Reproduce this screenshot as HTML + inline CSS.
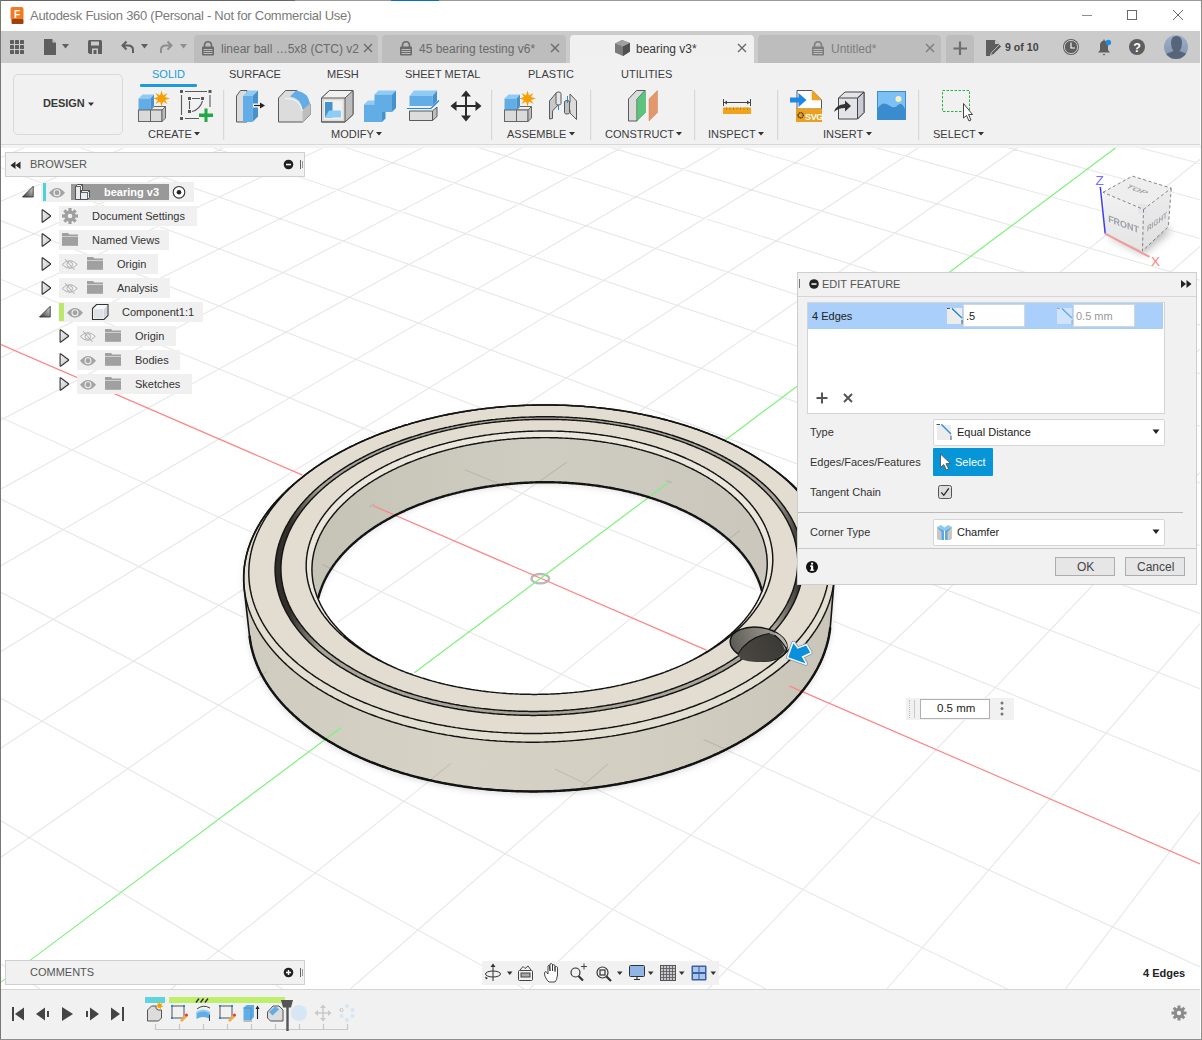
<!DOCTYPE html>
<html><head><meta charset="utf-8"><title>Fusion 360</title>
<style>
*{box-sizing:border-box;margin:0;padding:0}
html,body{width:1202px;height:1040px;overflow:hidden;background:#fff;font-family:"Liberation Sans",sans-serif;color:#3c3c3c}
.a{position:absolute}
svg.a{overflow:visible}
.t{position:absolute;white-space:nowrap;line-height:1}
</style></head><body>
<svg class="a" style="left:0;top:0" width="1202" height="1040" viewBox="0 0 1202 1040">
<defs><clipPath id="vpc"><rect x="1" y="145" width="1199" height="844"/></clipPath>
<linearGradient id="wallg" x1="240" y1="0" x2="836" y2="0" gradientUnits="userSpaceOnUse"><stop offset="0" stop-color="#cfcbbf"/><stop offset="0.35" stop-color="#d6d2c6"/><stop offset="0.7" stop-color="#d2cec2"/><stop offset="1" stop-color="#c9c5b8"/></linearGradient>
<linearGradient id="innerg" x1="318" y1="0" x2="760" y2="0" gradientUnits="userSpaceOnUse"><stop offset="0" stop-color="#c6c3b7"/><stop offset="0.5" stop-color="#cfccc1"/><stop offset="1" stop-color="#cbc7bc"/></linearGradient>
<linearGradient id="grooveg" x1="243" y1="0" x2="834" y2="0" gradientUnits="userSpaceOnUse"><stop offset="0" stop-color="#2a2826"/><stop offset="0.08" stop-color="#33302c"/><stop offset="0.13" stop-color="#a8a49a"/><stop offset="0.9" stop-color="#a8a49a"/><stop offset="0.94" stop-color="#3a3733"/><stop offset="1" stop-color="#2a2826"/></linearGradient>
<filter id="blur3" x="-20%" y="-20%" width="140%" height="140%"><feGaussianBlur stdDeviation="3"/></filter><filter id="blur2" x="-20%" y="-20%" width="140%" height="140%"><feGaussianBlur stdDeviation="2"/></filter>
</defs><g clip-path="url(#vpc)">
<rect x="1" y="145" width="1199" height="844" fill="#fff"/>
<mask id="shm" maskUnits="userSpaceOnUse" x="0" y="0" width="1202" height="1040"><rect x="0" y="0" width="1202" height="1040" fill="#fff"/><path d="M730.1,634.6 731.2,633.5 732.3,632.5 733.4,631.5 734.5,630.5 735.6,629.5 736.6,628.4 737.7,627.4 738.7,626.4 739.7,625.3 740.7,624.3 741.6,623.2 742.6,622.2 743.5,621.1 744.4,620.1 745.3,619.0 746.2,617.9 747.0,616.9 747.9,615.8 748.7,614.7 749.5,613.6 750.3,612.5 751.1,611.4 751.8,610.4 752.5,609.3 753.3,608.2 754.0,607.1 754.6,606.0 755.3,604.9 755.9,603.8 756.6,602.6 757.2,601.5 757.8,600.4 758.3,599.3 758.9,598.2 759.4,597.1 759.9,596.0 760.4,594.8 760.9,593.7 761.4,592.6 761.8,591.5 762.0,591.1 761.9,590.8 761.6,589.7 761.3,588.6 761.0,587.5 760.6,586.4 760.3,585.3 759.9,584.2 759.5,583.1 759.1,582.0 758.7,580.9 758.3,579.8 757.8,578.7 757.3,577.7 756.8,576.6 756.3,575.5 755.8,574.4 755.3,573.4 754.7,572.3 754.2,571.3 753.6,570.2 753.0,569.1 752.4,568.1 751.8,567.1 751.1,566.0 750.5,565.0 749.8,564.0 749.1,562.9 748.5,561.9 747.7,560.9 747.0,559.9 746.3,558.9 745.5,557.9 744.8,556.9 744.0,555.9 743.2,554.9 742.4,553.9 741.6,552.9 740.7,552.0 739.9,551.0 739.0,550.0 738.1,549.1 737.2,548.1 736.3,547.2 735.4,546.2 734.5,545.3 733.6,544.3 732.6,543.4 731.6,542.5 730.7,541.6 729.7,540.7 728.7,539.8 727.6,538.9 726.6,538.0 725.6,537.1 724.5,536.2 723.4,535.3 722.4,534.4 721.3,533.6 720.2,532.7 719.1,531.9 717.9,531.0 716.8,530.2 715.7,529.3 714.5,528.5 713.3,527.7 712.1,526.9 711.0,526.1 709.7,525.3 708.5,524.5 707.3,523.7 706.1,522.9 704.8,522.1 703.6,521.3 702.3,520.6 701.0,519.8 699.7,519.1 698.4,518.3 697.1,517.6 695.8,516.9 694.5,516.1 693.1,515.4 691.8,514.7 690.4,514.0 689.1,513.3 687.7,512.6 686.3,511.9 684.9,511.3 683.5,510.6 682.1,509.9 680.7,509.3 679.3,508.6 677.8,508.0 676.4,507.4 674.9,506.7 673.5,506.1 672.0,505.5 670.5,504.9 669.0,504.3 667.5,503.7 666.0,503.2 664.5,502.6 663.0,502.0 661.5,501.5 660.0,500.9 658.4,500.4 656.9,499.8 655.3,499.3 653.8,498.8 652.2,498.3 650.6,497.8 649.0,497.3 647.5,496.8 645.9,496.3 644.3,495.8 642.7,495.4 641.0,494.9 639.4,494.5 637.8,494.0 636.2,493.6 634.5,493.2 632.9,492.7 631.2,492.3 629.6,491.9 627.9,491.5 626.3,491.2 624.6,490.8 622.9,490.4 621.3,490.0 619.6,489.7 617.9,489.3 616.2,489.0 614.5,488.7 612.8,488.4 611.1,488.0 609.4,487.7 607.7,487.4 606.0,487.1 604.2,486.9 602.5,486.6 600.8,486.3 599.0,486.1 597.3,485.8 595.6,485.6 593.8,485.4 592.1,485.1 590.3,484.9 588.6,484.7 586.8,484.5 585.1,484.3 583.3,484.1 581.5,484.0 579.8,483.8 578.0,483.6 576.2,483.5 574.5,483.4 572.7,483.2 570.9,483.1 569.1,483.0 567.4,482.9 565.6,482.8 563.8,482.7 562.0,482.6 560.2,482.5 558.4,482.5 556.7,482.4 554.9,482.4 553.1,482.3 551.3,482.3 549.5,482.3 547.7,482.2 545.9,482.2 544.1,482.2 542.3,482.3 540.5,482.3 538.8,482.3 537.0,482.3 535.2,482.4 533.4,482.4 531.6,482.5 529.8,482.6 528.0,482.6 526.2,482.7 524.4,482.8 522.6,482.9 520.8,483.0 519.1,483.1 517.3,483.3 515.5,483.4 513.7,483.6 511.9,483.7 510.1,483.9 508.4,484.0 506.6,484.2 504.8,484.4 503.1,484.6 501.3,484.8 499.5,485.0 497.7,485.2 496.0,485.4 494.2,485.7 492.5,485.9 490.7,486.2 489.0,486.4 487.2,486.7 485.5,487.0 483.7,487.3 482.0,487.6 480.2,487.9 478.5,488.2 476.8,488.5 475.1,488.8 473.3,489.1 471.6,489.5 469.9,489.8 468.2,490.2 466.5,490.6 464.8,490.9 463.1,491.3 461.4,491.7 459.7,492.1 458.0,492.5 456.4,492.9 454.7,493.3 453.0,493.8 451.4,494.2 449.7,494.6 448.0,495.1 446.4,495.6 444.8,496.0 443.1,496.5 441.5,497.0 439.9,497.5 438.2,498.0 436.6,498.5 435.0,499.0 433.4,499.5 431.8,500.1 430.2,500.6 428.7,501.1 427.1,501.7 425.5,502.3 424.0,502.8 422.4,503.4 420.9,504.0 419.3,504.6 417.8,505.2 416.3,505.8 414.8,506.4 413.3,507.0 411.8,507.6 410.3,508.3 408.8,508.9 407.3,509.6 405.8,510.2 404.4,510.9 402.9,511.6 401.5,512.2 400.0,512.9 398.6,513.6 397.2,514.3 395.8,515.0 394.4,515.7 393.0,516.5 391.6,517.2 390.3,517.9 388.9,518.7 387.5,519.4 386.2,520.2 384.9,520.9 383.5,521.7 382.2,522.5 380.9,523.3 379.6,524.0 378.3,524.8 377.1,525.6 375.8,526.4 374.6,527.3 373.3,528.1 372.1,528.9 370.9,529.7 369.6,530.6 368.5,531.4 367.3,532.3 366.1,533.1 364.9,534.0 363.8,534.9 362.6,535.7 361.5,536.6 360.4,537.5 359.3,538.4 358.2,539.3 357.1,540.2 356.0,541.1 355.0,542.0 353.9,542.9 352.9,543.9 351.9,544.8 350.8,545.7 349.9,546.7 348.9,547.6 347.9,548.6 346.9,549.5 346.0,550.5 345.1,551.5 344.1,552.4 343.2,553.4 342.3,554.4 341.5,555.4 340.6,556.4 339.7,557.4 338.9,558.4 338.1,559.4 337.3,560.4 336.5,561.4 335.7,562.4 334.9,563.5 334.2,564.5 333.4,565.5 332.7,566.6 332.0,567.6 331.3,568.7 330.6,569.7 329.9,570.8 329.3,571.8 328.7,572.9 328.0,573.9 327.4,575.0 326.8,576.1 326.3,577.2 325.7,578.2 325.1,579.3 324.6,580.4 324.1,581.5 323.6,582.6 323.1,583.7 322.6,584.8 322.2,585.9 321.8,587.0 321.3,588.1 320.9,589.2 320.5,590.3 320.2,591.4 319.8,592.5 319.5,593.7 319.1,594.8 318.8,595.9 318.5,597.0 318.3,598.2 318.1,599.0 318.5,599.9 319.0,601.1 319.5,602.2 320.0,603.3 320.5,604.4 321.1,605.5 321.7,606.6 322.3,607.7 322.9,608.8 323.6,609.9 324.2,611.0 324.9,612.1 325.6,613.2 326.3,614.3 327.0,615.3 327.8,616.4 328.5,617.5 329.3,618.6 330.1,619.6 330.9,620.7 331.8,621.8 332.6,622.8 333.5,623.9 334.4,624.9 335.3,626.0 336.2,627.0 337.2,628.1 338.1,629.1 339.1,630.1 340.1,631.1 341.1,632.2 342.2,633.2 343.2,634.2 344.3,635.2 345.3,636.2 346.4,637.2 347.6,638.2 348.7,639.1 349.8,640.1 351.0,641.1 352.2,642.1 353.4,643.0 354.6,644.0 355.8,644.9 357.1,645.9 358.4,646.8 359.6,647.7 360.9,648.6 362.3,649.6 363.6,650.5 364.9,651.4 366.3,652.3 367.7,653.2 369.1,654.0 370.5,654.9 371.9,655.8 373.3,656.6 374.8,657.5 376.3,658.3 377.8,659.2 379.3,660.0 380.8,660.8 382.3,661.7 383.8,662.5 385.4,663.3 387.0,664.1 388.6,664.8 390.2,665.6 391.8,666.4 393.4,667.1 395.0,667.9 396.7,668.6 398.4,669.4 400.1,670.1 401.8,670.8 403.5,671.5 405.2,672.2 406.9,672.9 408.7,673.6 410.4,674.2 412.2,674.9 414.0,675.6 415.8,676.2 417.6,676.8 419.4,677.5 421.2,678.1 423.1,678.7 424.9,679.3 426.8,679.8 428.6,680.4 430.5,681.0 432.4,681.5 434.3,682.1 436.2,682.6 438.2,683.1 440.1,683.7 442.0,684.2 444.0,684.6 446.0,685.1 447.9,685.6 449.9,686.1 451.9,686.5 453.9,687.0 455.9,687.4 457.9,687.8 459.9,688.2 462.0,688.6 464.0,689.0 466.0,689.4 468.1,689.7 470.1,690.1 472.2,690.4 474.3,690.8 476.4,691.1 478.4,691.4 480.5,691.7 482.6,692.0 484.7,692.2 486.8,692.5 488.9,692.7 491.1,693.0 493.2,693.2 495.3,693.4 497.4,693.6 499.6,693.8 501.7,694.0 503.8,694.2 506.0,694.3 508.1,694.5 510.3,694.6 512.4,694.8 514.6,694.9 516.8,695.0 518.9,695.1 521.1,695.1 523.2,695.2 525.4,695.3 527.6,695.3 529.7,695.3 531.9,695.4 534.1,695.4 536.3,695.4 538.4,695.3 540.6,695.3 542.8,695.3 544.9,695.2 547.1,695.2 549.3,695.1 551.4,695.0 553.6,694.9 555.8,694.8 557.9,694.7 560.1,694.5 562.3,694.4 564.4,694.2 566.6,694.1 568.7,693.9 570.9,693.7 573.0,693.5 575.2,693.3 577.3,693.1 579.4,692.8 581.6,692.6 583.7,692.3 585.8,692.0 587.9,691.8 590.0,691.5 592.2,691.2 594.3,690.8 596.4,690.5 598.5,690.2 600.5,689.8 602.6,689.5 604.7,689.1 606.8,688.7 608.8,688.3 610.9,687.9 612.9,687.5 615.0,687.1 617.0,686.6 619.0,686.2 621.0,685.7 623.1,685.3 625.1,684.8 627.1,684.3 629.0,683.8 631.0,683.3 633.0,682.8 634.9,682.2 636.9,681.7 638.8,681.2 640.8,680.6 642.7,680.0 644.6,679.4 646.5,678.9 648.4,678.3 650.3,677.6 652.1,677.0 654.0,676.4 655.8,675.8 657.7,675.1 659.5,674.5 661.3,673.8 663.1,673.1 664.9,672.4 666.7,671.7 668.5,671.0 670.2,670.3 672.0,669.6 673.7,668.9 675.4,668.1 677.1,667.4 678.8,666.6 680.5,665.9 682.1,665.1 683.8,664.3 685.4,663.5 687.1,662.7 688.7,661.9 690.3,661.1 691.9,660.3 693.4,659.5 695.0,658.6 696.5,657.8 698.0,656.9 699.6,656.1 701.1,655.2 702.5,654.3 704.0,653.5 705.5,652.6 706.9,651.7 708.3,650.8 709.7,649.9 711.1,649.0 712.5,648.1 713.9,647.1 715.2,646.2 716.5,645.3 717.8,644.3 719.1,643.4 720.4,642.4 721.7,641.4 722.9,640.5 724.2,639.5 725.4,638.5 726.6,637.5 727.8,636.5 728.9,635.6Z" fill="#000"/></mask>
<g mask="url(#shm)"><path d="M546.6,405.0 544.3,405.0 542.1,405.0 539.8,405.0 537.5,405.0 535.3,405.1 533.0,405.1 530.7,405.2 528.5,405.3 526.2,405.3 524.0,405.4 521.7,405.5 519.4,405.6 517.2,405.8 514.9,405.9 512.7,406.0 510.4,406.2 508.2,406.3 505.9,406.5 503.7,406.7 501.4,406.9 499.2,407.1 496.9,407.3 494.7,407.5 492.4,407.8 490.2,408.0 488.0,408.2 485.7,408.5 483.5,408.8 481.3,409.1 479.0,409.3 476.8,409.6 474.6,410.0 472.4,410.3 470.2,410.6 468.0,410.9 465.8,411.3 463.6,411.6 461.4,412.0 459.2,412.4 457.0,412.8 454.8,413.2 452.6,413.6 450.5,414.0 448.3,414.4 446.1,414.9 444.0,415.3 441.8,415.8 439.7,416.2 437.5,416.7 435.4,417.2 433.3,417.7 431.1,418.2 429.0,418.7 426.9,419.2 424.8,419.8 422.7,420.3 420.6,420.8 418.5,421.4 416.4,422.0 414.4,422.6 412.3,423.1 410.2,423.7 408.2,424.4 406.1,425.0 404.1,425.6 402.1,426.2 400.0,426.9 398.0,427.5 396.0,428.2 394.0,428.9 392.0,429.6 390.0,430.2 388.1,430.9 386.1,431.7 384.1,432.4 382.2,433.1 380.2,433.8 378.3,434.6 376.4,435.3 374.5,436.1 372.6,436.9 370.7,437.7 368.8,438.4 366.9,439.2 365.0,440.1 363.2,440.9 361.3,441.7 359.5,442.5 357.7,443.4 355.9,444.2 354.1,445.1 352.3,446.0 350.5,446.8 348.7,447.7 346.9,448.6 345.2,449.5 343.5,450.4 341.7,451.4 340.0,452.3 338.3,453.2 336.6,454.2 334.9,455.1 333.3,456.1 331.6,457.0 330.0,458.0 328.4,459.0 326.7,460.0 325.1,461.0 323.5,462.0 322.0,463.0 320.4,464.1 318.9,465.1 317.3,466.1 315.8,467.2 314.3,468.2 312.8,469.3 311.3,470.4 309.8,471.4 308.4,472.5 306.9,473.6 305.5,474.7 304.1,475.8 300.3,478.9 298.8,480.0 297.4,481.2 296.0,482.3 294.7,483.5 293.3,484.6 292.0,485.8 290.6,487.0 289.3,488.2 288.0,489.4 286.7,490.6 285.5,491.8 284.2,493.0 283.0,494.2 281.8,495.4 280.6,496.7 279.4,497.9 278.2,499.2 277.1,500.4 276.0,501.7 274.8,502.9 273.7,504.2 272.7,505.5 271.6,506.8 270.6,508.1 269.5,509.4 268.5,510.7 267.5,512.0 266.6,513.3 265.6,514.6 264.7,515.9 263.8,517.3 262.9,518.6 262.0,519.9 261.1,521.3 260.3,522.6 259.5,524.0 258.7,525.3 257.9,526.7 257.1,528.1 256.4,529.5 255.7,530.8 255.0,532.2 254.3,533.6 253.6,535.0 253.0,536.4 252.4,537.8 251.8,539.2 251.2,540.6 250.6,542.0 250.1,543.4 249.6,544.9 249.1,546.3 248.6,547.7 248.2,549.1 247.7,550.6 247.3,552.0 246.9,553.5 246.6,554.9 246.2,556.4 245.9,557.8 245.6,559.3 245.3,560.7 245.0,562.2 244.8,563.6 244.6,565.1 244.4,566.6 244.2,568.0 244.1,569.5 244.0,571.0 243.9,572.4 243.8,573.9 243.7,575.4 243.7,576.9 243.7,578.3 243.7,579.8 243.7,581.3 243.8,582.8 243.9,584.3 244.0,585.7 244.1,587.2 244.2,588.7 249.5,635.8 249.7,637.3 249.9,638.9 250.1,640.4 250.4,641.9 250.6,643.4 250.9,644.9 251.3,646.4 251.6,647.9 252.0,649.4 252.3,650.9 252.8,652.4 253.2,653.9 253.6,655.4 254.1,656.9 254.6,658.4 255.2,659.9 255.7,661.4 256.3,662.9 256.9,664.4 257.5,665.9 258.2,667.4 258.8,668.9 259.5,670.3 260.2,671.8 261.0,673.3 261.7,674.8 262.5,676.2 263.3,677.7 264.2,679.2 265.0,680.6 265.9,682.1 266.8,683.5 267.8,685.0 268.7,686.4 269.7,687.9 270.7,689.3 271.7,690.8 272.8,692.2 273.9,693.6 275.0,695.0 276.1,696.4 277.2,697.8 278.4,699.2 279.6,700.6 280.8,702.0 282.0,703.4 283.3,704.8 284.6,706.2 285.9,707.5 287.2,708.9 288.6,710.3 289.9,711.6 291.3,712.9 292.8,714.3 294.2,715.6 295.7,716.9 297.2,718.2 298.7,719.6 300.2,720.8 301.8,722.1 303.3,723.4 304.9,724.7 306.6,726.0 308.2,727.2 309.9,728.5 311.6,729.7 313.3,730.9 315.0,732.2 316.8,733.4 318.5,734.6 320.3,735.8 322.1,737.0 324.0,738.2 325.8,739.3 327.7,740.5 329.6,741.6 331.5,742.8 333.5,743.9 335.4,745.0 337.4,746.1 339.4,747.2 341.4,748.3 343.5,749.4 345.5,750.4 347.6,751.5 349.7,752.5 351.8,753.6 353.9,754.6 356.1,755.6 358.2,756.6 360.4,757.6 362.6,758.5 364.9,759.5 367.1,760.4 369.4,761.4 371.6,762.3 373.9,763.2 376.2,764.1 378.5,765.0 380.9,765.9 383.2,766.7 385.6,767.6 388.0,768.4 390.4,769.2 392.8,770.0 395.2,770.8 397.7,771.6 400.1,772.4 402.6,773.1 405.1,773.8 407.6,774.6 410.1,775.3 412.6,776.0 415.2,776.7 417.7,777.3 420.3,778.0 422.9,778.6 425.5,779.2 428.1,779.8 430.7,780.4 433.3,781.0 436.0,781.6 438.6,782.1 441.3,782.7 443.9,783.2 446.6,783.7 449.3,784.2 452.0,784.6 454.7,785.1 457.4,785.5 460.1,786.0 462.8,786.4 465.6,786.8 468.3,787.2 471.1,787.5 473.8,787.9 476.6,788.2 479.4,788.5 482.2,788.8 485.0,789.1 487.7,789.4 490.5,789.6 493.3,789.9 496.2,790.1 499.0,790.3 501.8,790.5 504.6,790.6 507.4,790.8 510.2,790.9 513.1,791.1 515.9,791.2 518.7,791.3 521.6,791.3 524.4,791.4 527.3,791.4 530.1,791.5 532.9,791.5 535.8,791.5 538.6,791.4 541.5,791.4 544.3,791.3 547.2,791.3 550.0,791.2 552.8,791.1 555.7,791.0 558.5,790.8 561.3,790.7 564.2,790.5 567.0,790.3 569.8,790.1 572.7,789.9 575.5,789.7 578.3,789.4 581.1,789.1 583.9,788.9 586.7,788.6 589.5,788.3 592.3,787.9 595.1,787.6 597.9,787.2 600.7,786.8 603.4,786.5 606.2,786.0 608.9,785.6 611.7,785.2 614.4,784.7 617.2,784.3 619.9,783.8 622.6,783.3 625.3,782.8 628.0,782.2 630.7,781.7 633.4,781.1 636.0,780.5 638.7,780.0 641.4,779.4 644.0,778.7 646.6,778.1 649.2,777.4 651.8,776.8 654.4,776.1 657.0,775.4 659.6,774.7 662.2,774.0 664.7,773.3 667.2,772.5 669.8,771.7 672.3,771.0 674.8,770.2 677.2,769.4 679.7,768.6 682.1,767.7 684.6,766.9 687.0,766.0 689.4,765.2 691.8,764.3 694.2,763.4 696.5,762.5 698.9,761.6 701.2,760.6 703.5,759.7 705.8,758.7 708.1,757.8 710.4,756.8 712.6,755.8 714.8,754.8 717.1,753.8 719.3,752.8 721.4,751.7 723.6,750.7 725.7,749.6 727.8,748.5 730.0,747.5 732.0,746.4 734.1,745.3 736.2,744.2 738.2,743.0 740.2,741.9 742.2,740.8 744.1,739.6 746.1,738.4 748.0,737.3 749.9,736.1 751.8,734.9 753.7,733.7 755.6,732.5 757.4,731.3 759.2,730.0 761.0,728.8 762.7,727.5 764.5,726.3 766.2,725.0 767.9,723.8 769.6,722.5 771.3,721.2 772.9,719.9 774.5,718.6 776.1,717.3 777.7,716.0 779.2,714.6 780.8,713.3 782.3,712.0 783.8,710.6 785.2,709.3 786.7,707.9 788.1,706.6 789.5,705.2 790.8,703.8 792.2,702.4 793.5,701.0 794.8,699.6 796.1,698.2 797.4,696.8 798.6,695.4 799.8,694.0 801.0,692.6 802.2,691.2 803.3,689.7 804.4,688.3 805.5,686.9 806.6,685.4 807.7,684.0 808.7,682.5 809.7,681.1 810.7,679.6 811.6,678.2 812.6,676.7 813.5,675.2 814.4,673.8 815.2,672.3 816.1,670.8 816.9,669.3 817.7,667.9 818.4,666.4 819.2,664.9 819.9,663.4 820.6,661.9 821.3,660.4 821.9,658.9 822.6,657.4 823.2,655.9 823.7,654.4 824.3,652.9 824.8,651.4 825.3,649.9 825.8,648.4 826.3,646.9 826.7,645.4 827.2,643.9 827.6,642.4 827.9,640.9 828.3,639.4 828.6,637.9 828.9,636.4 829.2,634.9 829.4,633.4 829.7,631.9 829.9,630.4 830.1,628.9 830.2,627.4 830.4,625.9 834.2,579.0 834.3,577.5 834.4,576.1 834.5,574.6 834.6,573.1 834.6,571.6 834.6,570.2 834.6,568.7 834.5,567.2 834.5,565.8 834.4,564.3 834.3,562.9 834.1,561.4 834.0,560.0 833.8,558.5 833.6,557.1 833.4,555.6 833.2,554.2 832.9,552.7 832.6,551.3 832.3,549.9 832.0,548.4 831.6,547.0 831.3,545.6 830.9,544.2 830.5,542.7 830.0,541.3 829.6,539.9 829.1,538.5 828.6,537.1 828.1,535.7 827.5,534.3 827.0,532.9 826.4,531.6 825.8,530.2 825.2,528.8 824.6,527.4 823.9,526.1 823.2,524.7 822.5,523.4 821.8,522.0 821.1,520.7 820.3,519.3 819.5,518.0 818.7,516.7 817.9,515.3 817.1,514.0 816.2,512.7 815.4,511.4 814.5,510.1 813.6,508.8 812.6,507.5 811.7,506.2 810.7,504.9 809.8,503.7 808.8,502.4 807.7,501.1 806.7,499.9 805.7,498.6 804.6,497.4 803.5,496.2 802.4,494.9 801.3,493.7 800.1,492.5 799.0,491.3 797.8,490.1 796.6,488.9 795.4,487.7 794.2,486.5 792.9,485.3 791.7,484.2 790.4,483.0 789.1,481.9 787.8,480.7 786.5,479.6 785.2,478.4 783.8,477.3 782.5,476.2 781.1,475.1 779.7,474.0 778.3,472.9 776.9,471.8 775.4,470.7 771.6,467.8 770.1,466.8 768.7,465.7 767.2,464.7 765.8,463.7 764.3,462.7 762.8,461.7 761.3,460.6 759.7,459.6 758.2,458.7 756.7,457.7 755.1,456.7 753.5,455.7 751.9,454.8 750.3,453.8 748.7,452.9 747.1,452.0 745.4,451.0 743.8,450.1 742.1,449.2 740.4,448.3 738.8,447.4 737.0,446.5 735.3,445.7 733.6,444.8 731.9,443.9 730.1,443.1 728.4,442.3 726.6,441.4 724.8,440.6 723.0,439.8 721.2,439.0 719.4,438.2 717.6,437.4 715.8,436.6 713.9,435.9 712.1,435.1 710.2,434.4 708.3,433.6 706.4,432.9 704.6,432.2 702.7,431.4 700.7,430.7 698.8,430.0 696.9,429.3 695.0,428.7 693.0,428.0 691.0,427.3 689.1,426.7 687.1,426.0 685.1,425.4 683.1,424.8 681.1,424.2 679.1,423.6 677.1,423.0 675.1,422.4 673.1,421.8 671.0,421.2 669.0,420.7 666.9,420.1 664.9,419.6 662.8,419.1 660.7,418.6 658.7,418.0 656.6,417.5 654.5,417.1 652.4,416.6 650.3,416.1 648.2,415.6 646.1,415.2 643.9,414.7 641.8,414.3 639.7,413.9 637.5,413.5 635.4,413.1 633.2,412.7 631.1,412.3 628.9,411.9 626.8,411.5 624.6,411.2 622.4,410.8 620.2,410.5 618.1,410.2 615.9,409.9 613.7,409.6 611.5,409.3 609.3,409.0 607.1,408.7 604.9,408.4 602.7,408.2 600.5,407.9 598.2,407.7 596.0,407.5 593.8,407.2 591.6,407.0 589.3,406.8 587.1,406.7 584.9,406.5 582.6,406.3 580.4,406.1 578.1,406.0 575.9,405.9 573.7,405.7 571.4,405.6 569.2,405.5 566.9,405.4 564.6,405.3 562.4,405.2 560.1,405.2 557.9,405.1 555.6,405.1 553.4,405.0 551.1,405.0 548.8,405.0Z" transform="translate(0 2.5)" fill="#000" fill-opacity="0.16" filter="url(#blur3)"/></g>
<path d="M544.3,405.0 542.1,405.0 539.8,405.0 537.5,405.0 535.3,405.1 533.0,405.1 530.7,405.2 528.5,405.3 526.2,405.3 524.0,405.4 521.7,405.5 519.4,405.6 517.2,405.8 514.9,405.9 512.7,406.0 510.4,406.2 508.2,406.3 505.9,406.5 503.7,406.7 501.4,406.9 499.2,407.1 496.9,407.3 494.7,407.5 492.4,407.8 490.2,408.0 488.0,408.2 485.7,408.5 483.5,408.8 481.3,409.1 479.0,409.3 476.8,409.6 474.6,410.0 472.4,410.3 470.2,410.6 468.0,410.9 465.8,411.3 463.6,411.6 461.4,412.0 459.2,412.4 457.0,412.8 454.8,413.2 452.6,413.6 450.5,414.0 448.3,414.4 446.1,414.9 444.0,415.3 441.8,415.8 439.7,416.2 437.5,416.7 435.4,417.2 433.3,417.7 431.1,418.2 429.0,418.7 426.9,419.2 424.8,419.8 422.7,420.3 420.6,420.8 418.5,421.4 416.4,422.0 414.4,422.6 412.3,423.1 410.2,423.7 408.2,424.4 406.1,425.0 404.1,425.6 402.1,426.2 400.0,426.9 398.0,427.5 396.0,428.2 394.0,428.9 392.0,429.6 390.0,430.2 388.1,430.9 386.1,431.7 384.1,432.4 382.2,433.1 380.2,433.8 378.3,434.6 376.4,435.3 374.5,436.1 372.6,436.9 370.7,437.7 368.8,438.4 366.9,439.2 365.0,440.1 363.2,440.9 361.3,441.7 359.5,442.5 357.7,443.4 355.9,444.2 354.1,445.1 352.3,446.0 350.5,446.8 348.7,447.7 346.9,448.6 345.2,449.5 343.5,450.4 341.7,451.4 340.0,452.3 338.3,453.2 336.6,454.2 334.9,455.1 333.3,456.1 331.6,457.0 330.0,458.0 328.4,459.0 326.7,460.0 325.1,461.0 323.5,462.0 322.0,463.0 320.4,464.1 318.9,465.1 317.3,466.1 315.8,467.2 314.3,468.2 312.8,469.3 311.3,470.4 309.8,471.4 308.4,472.5 306.9,473.6 305.5,474.7 304.1,475.8 300.3,478.9 298.8,480.0 297.4,481.2 296.0,482.3 294.7,483.5 293.3,484.6 292.0,485.8 290.6,487.0 289.3,488.2 288.0,489.4 286.7,490.6 285.5,491.8 284.2,493.0 283.0,494.2 281.8,495.4 280.6,496.7 279.4,497.9 278.2,499.2 277.1,500.4 276.0,501.7 274.8,502.9 273.7,504.2 272.7,505.5 271.6,506.8 270.6,508.1 269.5,509.4 268.5,510.7 267.5,512.0 266.6,513.3 265.6,514.6 264.7,515.9 263.8,517.3 262.9,518.6 262.0,519.9 261.1,521.3 260.3,522.6 259.5,524.0 258.7,525.3 257.9,526.7 257.1,528.1 256.4,529.5 255.7,530.8 255.0,532.2 254.3,533.6 253.6,535.0 253.0,536.4 252.4,537.8 251.8,539.2 251.2,540.6 250.6,542.0 250.1,543.4 249.6,544.9 249.1,546.3 248.6,547.7 248.2,549.1 247.7,550.6 247.3,552.0 246.9,553.5 246.6,554.9 246.2,556.4 245.9,557.8 245.6,559.3 245.3,560.7 245.0,562.2 244.8,563.6 244.6,565.1 244.4,566.6 244.2,568.0 244.1,569.5 244.0,571.0 243.9,572.4 243.8,573.9 243.7,575.4 243.7,576.9 243.7,578.3 243.7,579.8 243.7,581.3 243.8,582.8 243.9,584.3 244.0,585.7 244.1,587.2 244.2,588.7 249.5,635.8 249.7,637.3 249.9,638.9 250.1,640.4 250.4,641.9 250.6,643.4 250.9,644.9 251.3,646.4 251.6,647.9 252.0,649.4 252.3,650.9 252.8,652.4 253.2,653.9 253.6,655.4 254.1,656.9 254.6,658.4 255.2,659.9 255.7,661.4 256.3,662.9 256.9,664.4 257.5,665.9 258.2,667.4 258.8,668.9 259.5,670.3 260.2,671.8 261.0,673.3 261.7,674.8 262.5,676.2 263.3,677.7 264.2,679.2 265.0,680.6 265.9,682.1 266.8,683.5 267.8,685.0 268.7,686.4 269.7,687.9 270.7,689.3 271.7,690.8 272.8,692.2 273.9,693.6 275.0,695.0 276.1,696.4 277.2,697.8 278.4,699.2 279.6,700.6 280.8,702.0 282.0,703.4 283.3,704.8 284.6,706.2 285.9,707.5 287.2,708.9 288.6,710.3 289.9,711.6 291.3,712.9 292.8,714.3 294.2,715.6 295.7,716.9 297.2,718.2 298.7,719.6 300.2,720.8 301.8,722.1 303.3,723.4 304.9,724.7 306.6,726.0 308.2,727.2 309.9,728.5 311.6,729.7 313.3,730.9 315.0,732.2 316.8,733.4 318.5,734.6 320.3,735.8 322.1,737.0 324.0,738.2 325.8,739.3 327.7,740.5 329.6,741.6 331.5,742.8 333.5,743.9 335.4,745.0 337.4,746.1 339.4,747.2 341.4,748.3 343.5,749.4 345.5,750.4 347.6,751.5 349.7,752.5 351.8,753.6 353.9,754.6 356.1,755.6 358.2,756.6 360.4,757.6 362.6,758.5 364.9,759.5 367.1,760.4 369.4,761.4 371.6,762.3 373.9,763.2 376.2,764.1 378.5,765.0 380.9,765.9 383.2,766.7 385.6,767.6 388.0,768.4 390.4,769.2 392.8,770.0 395.2,770.8 397.7,771.6 400.1,772.4 402.6,773.1 405.1,773.8 407.6,774.6 410.1,775.3 412.6,776.0 415.2,776.7 417.7,777.3 420.3,778.0 422.9,778.6 425.5,779.2 428.1,779.8 430.7,780.4 433.3,781.0 436.0,781.6 438.6,782.1 441.3,782.7 443.9,783.2 446.6,783.7 449.3,784.2 452.0,784.6 454.7,785.1 457.4,785.5 460.1,786.0 462.8,786.4 465.6,786.8 468.3,787.2 471.1,787.5 473.8,787.9 476.6,788.2 479.4,788.5 482.2,788.8 485.0,789.1 487.7,789.4 490.5,789.6 493.3,789.9 496.2,790.1 499.0,790.3 501.8,790.5 504.6,790.6 507.4,790.8 510.2,790.9 513.1,791.1 515.9,791.2 518.7,791.3 521.6,791.3 524.4,791.4 527.3,791.4 530.1,791.5 532.9,791.5 535.8,791.5 538.6,791.4 541.5,791.4 544.3,791.3 547.2,791.3 550.0,791.2 552.8,791.1 555.7,791.0 558.5,790.8 561.3,790.7 564.2,790.5 567.0,790.3 569.8,790.1 572.7,789.9 575.5,789.7 578.3,789.4 581.1,789.1 583.9,788.9 586.7,788.6 589.5,788.3 592.3,787.9 595.1,787.6 597.9,787.2 600.7,786.8 603.4,786.5 606.2,786.0 608.9,785.6 611.7,785.2 614.4,784.7 617.2,784.3 619.9,783.8 622.6,783.3 625.3,782.8 628.0,782.2 630.7,781.7 633.4,781.1 636.0,780.5 638.7,780.0 641.4,779.4 644.0,778.7 646.6,778.1 649.2,777.4 651.8,776.8 654.4,776.1 657.0,775.4 659.6,774.7 662.2,774.0 664.7,773.3 667.2,772.5 669.8,771.7 672.3,771.0 674.8,770.2 677.2,769.4 679.7,768.6 682.1,767.7 684.6,766.9 687.0,766.0 689.4,765.2 691.8,764.3 694.2,763.4 696.5,762.5 698.9,761.6 701.2,760.6 703.5,759.7 705.8,758.7 708.1,757.8 710.4,756.8 712.6,755.8 714.8,754.8 717.1,753.8 719.3,752.8 721.4,751.7 723.6,750.7 725.7,749.6 727.8,748.5 730.0,747.5 732.0,746.4 734.1,745.3 736.2,744.2 738.2,743.0 740.2,741.9 742.2,740.8 744.1,739.6 746.1,738.4 748.0,737.3 749.9,736.1 751.8,734.9 753.7,733.7 755.6,732.5 757.4,731.3 759.2,730.0 761.0,728.8 762.7,727.5 764.5,726.3 766.2,725.0 767.9,723.8 769.6,722.5 771.3,721.2 772.9,719.9 774.5,718.6 776.1,717.3 777.7,716.0 779.2,714.6 780.8,713.3 782.3,712.0 783.8,710.6 785.2,709.3 786.7,707.9 788.1,706.6 789.5,705.2 790.8,703.8 792.2,702.4 793.5,701.0 794.8,699.6 796.1,698.2 797.4,696.8 798.6,695.4 799.8,694.0 801.0,692.6 802.2,691.2 803.3,689.7 804.4,688.3 805.5,686.9 806.6,685.4 807.7,684.0 808.7,682.5 809.7,681.1 810.7,679.6 811.6,678.2 812.6,676.7 813.5,675.2 814.4,673.8 815.2,672.3 816.1,670.8 816.9,669.3 817.7,667.9 818.4,666.4 819.2,664.9 819.9,663.4 820.6,661.9 821.3,660.4 821.9,658.9 822.6,657.4 823.2,655.9 823.7,654.4 824.3,652.9 824.8,651.4 825.3,649.9 825.8,648.4 826.3,646.9 826.7,645.4 827.2,643.9 827.6,642.4 827.9,640.9 828.3,639.4 828.6,637.9 828.9,636.4 829.2,634.9 829.4,633.4 829.7,631.9 829.9,630.4 830.1,628.9 830.2,627.4 830.4,625.9 834.2,579.0 834.3,577.5 834.4,576.1 834.5,574.6 834.6,573.1 834.6,571.6 834.6,570.2 834.6,568.7 834.5,567.2 834.5,565.8 834.4,564.3 834.3,562.9 834.1,561.4 834.0,560.0 833.8,558.5 833.6,557.1 833.4,555.6 833.2,554.2 832.9,552.7 832.6,551.3 832.3,549.9 832.0,548.4 831.6,547.0 831.3,545.6 830.9,544.2 830.5,542.7 830.0,541.3 829.6,539.9 829.1,538.5 828.6,537.1 828.1,535.7 827.5,534.3 827.0,532.9 826.4,531.6 825.8,530.2 825.2,528.8 824.6,527.4 823.9,526.1 823.2,524.7 822.5,523.4 821.8,522.0 821.1,520.7 820.3,519.3 819.5,518.0 818.7,516.7 817.9,515.3 817.1,514.0 816.2,512.7 815.4,511.4 814.5,510.1 813.6,508.8 812.6,507.5 811.7,506.2 810.7,504.9 809.8,503.7 808.8,502.4 807.7,501.1 806.7,499.9 805.7,498.6 804.6,497.4 803.5,496.2 802.4,494.9 801.3,493.7 800.1,492.5 799.0,491.3 797.8,490.1 796.6,488.9 795.4,487.7 794.2,486.5 792.9,485.3 791.7,484.2 790.4,483.0 789.1,481.9 787.8,480.7 786.5,479.6 785.2,478.4 783.8,477.3 782.5,476.2 781.1,475.1 779.7,474.0 778.3,472.9 776.9,471.8 775.4,470.7 771.6,467.8 770.1,466.8 768.7,465.7 767.2,464.7 765.8,463.7 764.3,462.7 762.8,461.7 761.3,460.6 759.7,459.6 758.2,458.7 756.7,457.7 755.1,456.7 753.5,455.7 751.9,454.8 750.3,453.8 748.7,452.9 747.1,452.0 745.4,451.0 743.8,450.1 742.1,449.2 740.4,448.3 738.8,447.4 737.0,446.5 735.3,445.7 733.6,444.8 731.9,443.9 730.1,443.1 728.4,442.3 726.6,441.4 724.8,440.6 723.0,439.8 721.2,439.0 719.4,438.2 717.6,437.4 715.8,436.6 713.9,435.9 712.1,435.1 710.2,434.4 708.3,433.6 706.4,432.9 704.6,432.2 702.7,431.4 700.7,430.7 698.8,430.0 696.9,429.3 695.0,428.7 693.0,428.0 691.0,427.3 689.1,426.7 687.1,426.0 685.1,425.4 683.1,424.8 681.1,424.2 679.1,423.6 677.1,423.0 675.1,422.4 673.1,421.8 671.0,421.2 669.0,420.7 666.9,420.1 664.9,419.6 662.8,419.1 660.7,418.6 658.7,418.0 656.6,417.5 654.5,417.1 652.4,416.6 650.3,416.1 648.2,415.6 646.1,415.2 643.9,414.7 641.8,414.3 639.7,413.9 637.5,413.5 635.4,413.1 633.2,412.7 631.1,412.3 628.9,411.9 626.8,411.5 624.6,411.2 622.4,410.8 620.2,410.5 618.1,410.2 615.9,409.9 613.7,409.6 611.5,409.3 609.3,409.0 607.1,408.7 604.9,408.4 602.7,408.2 600.5,407.9 598.2,407.7 596.0,407.5 593.8,407.2 591.6,407.0 589.3,406.8 587.1,406.7 584.9,406.5 582.6,406.3 580.4,406.1 578.1,406.0 575.9,405.9 573.7,405.7 571.4,405.6 569.2,405.5 566.9,405.4 564.6,405.3 562.4,405.2 560.1,405.2 557.9,405.1 555.6,405.1 553.4,405.0 551.1,405.0 548.8,405.0 546.6,405.0ZM728.9,635.6 727.8,636.5 726.6,637.5 725.4,638.5 724.2,639.5 722.9,640.5 721.7,641.4 720.4,642.4 719.1,643.4 717.8,644.3 716.5,645.3 715.2,646.2 713.9,647.1 712.5,648.1 711.1,649.0 709.7,649.9 708.3,650.8 706.9,651.7 705.5,652.6 704.0,653.5 702.5,654.3 701.1,655.2 699.6,656.1 698.0,656.9 696.5,657.8 695.0,658.6 693.4,659.5 691.9,660.3 690.3,661.1 688.7,661.9 687.1,662.7 685.4,663.5 683.8,664.3 682.1,665.1 680.5,665.9 678.8,666.6 677.1,667.4 675.4,668.1 673.7,668.9 672.0,669.6 670.2,670.3 668.5,671.0 666.7,671.7 664.9,672.4 663.1,673.1 661.3,673.8 659.5,674.5 657.7,675.1 655.8,675.8 654.0,676.4 652.1,677.0 650.3,677.6 648.4,678.3 646.5,678.9 644.6,679.4 642.7,680.0 640.8,680.6 638.8,681.2 636.9,681.7 634.9,682.2 633.0,682.8 631.0,683.3 629.0,683.8 627.1,684.3 625.1,684.8 623.1,685.3 621.0,685.7 619.0,686.2 617.0,686.6 615.0,687.1 612.9,687.5 610.9,687.9 608.8,688.3 606.8,688.7 604.7,689.1 602.6,689.5 600.5,689.8 598.5,690.2 596.4,690.5 594.3,690.8 592.2,691.2 590.0,691.5 587.9,691.8 585.8,692.0 583.7,692.3 581.6,692.6 579.4,692.8 577.3,693.1 575.2,693.3 573.0,693.5 570.9,693.7 568.7,693.9 566.6,694.1 564.4,694.2 562.3,694.4 560.1,694.5 557.9,694.7 555.8,694.8 553.6,694.9 551.4,695.0 549.3,695.1 547.1,695.2 544.9,695.2 542.8,695.3 540.6,695.3 538.4,695.3 536.3,695.4 534.1,695.4 531.9,695.4 529.7,695.3 527.6,695.3 525.4,695.3 523.2,695.2 521.1,695.1 518.9,695.1 516.8,695.0 514.6,694.9 512.4,694.8 510.3,694.6 508.1,694.5 506.0,694.3 503.8,694.2 501.7,694.0 499.6,693.8 497.4,693.6 495.3,693.4 493.2,693.2 491.1,693.0 488.9,692.7 486.8,692.5 484.7,692.2 482.6,692.0 480.5,691.7 478.4,691.4 476.4,691.1 474.3,690.8 472.2,690.4 470.1,690.1 468.1,689.7 466.0,689.4 464.0,689.0 462.0,688.6 459.9,688.2 457.9,687.8 455.9,687.4 453.9,687.0 451.9,686.5 449.9,686.1 447.9,685.6 446.0,685.1 444.0,684.6 442.0,684.2 440.1,683.7 438.2,683.1 436.2,682.6 434.3,682.1 432.4,681.5 430.5,681.0 428.6,680.4 426.8,679.8 424.9,679.3 423.1,678.7 421.2,678.1 419.4,677.5 417.6,676.8 415.8,676.2 414.0,675.6 412.2,674.9 410.4,674.2 408.7,673.6 406.9,672.9 405.2,672.2 403.5,671.5 401.8,670.8 400.1,670.1 398.4,669.4 396.7,668.6 395.0,667.9 393.4,667.1 391.8,666.4 390.2,665.6 388.6,664.8 387.0,664.1 385.4,663.3 383.8,662.5 382.3,661.7 380.8,660.8 379.3,660.0 377.8,659.2 376.3,658.3 374.8,657.5 373.3,656.6 371.9,655.8 370.5,654.9 369.1,654.0 367.7,653.2 366.3,652.3 364.9,651.4 363.6,650.5 362.3,649.6 360.9,648.6 359.6,647.7 358.4,646.8 357.1,645.9 355.8,644.9 354.6,644.0 353.4,643.0 352.2,642.1 351.0,641.1 349.8,640.1 348.7,639.1 347.6,638.2 346.4,637.2 345.3,636.2 344.3,635.2 343.2,634.2 342.2,633.2 341.1,632.2 340.1,631.1 339.1,630.1 338.1,629.1 337.2,628.1 336.2,627.0 335.3,626.0 334.4,624.9 333.5,623.9 332.6,622.8 331.8,621.8 330.9,620.7 330.1,619.6 329.3,618.6 328.5,617.5 327.8,616.4 327.0,615.3 326.3,614.3 325.6,613.2 324.9,612.1 324.2,611.0 323.6,609.9 322.9,608.8 322.3,607.7 321.7,606.6 321.1,605.5 320.5,604.4 320.0,603.3 319.5,602.2 319.0,601.1 318.5,599.9 318.1,599.0 318.3,598.2 318.5,597.0 318.8,595.9 319.1,594.8 319.5,593.7 319.8,592.5 320.2,591.4 320.5,590.3 320.9,589.2 321.3,588.1 321.8,587.0 322.2,585.9 322.6,584.8 323.1,583.7 323.6,582.6 324.1,581.5 324.6,580.4 325.1,579.3 325.7,578.2 326.3,577.2 326.8,576.1 327.4,575.0 328.0,573.9 328.7,572.9 329.3,571.8 329.9,570.8 330.6,569.7 331.3,568.7 332.0,567.6 332.7,566.6 333.4,565.5 334.2,564.5 334.9,563.5 335.7,562.4 336.5,561.4 337.3,560.4 338.1,559.4 338.9,558.4 339.7,557.4 340.6,556.4 341.5,555.4 342.3,554.4 343.2,553.4 344.1,552.4 345.1,551.5 346.0,550.5 346.9,549.5 347.9,548.6 348.9,547.6 349.9,546.7 350.8,545.7 351.9,544.8 352.9,543.9 353.9,542.9 355.0,542.0 356.0,541.1 357.1,540.2 358.2,539.3 359.3,538.4 360.4,537.5 361.5,536.6 362.6,535.7 363.8,534.9 364.9,534.0 366.1,533.1 367.3,532.3 368.5,531.4 369.6,530.6 370.9,529.7 372.1,528.9 373.3,528.1 374.6,527.3 375.8,526.4 377.1,525.6 378.3,524.8 379.6,524.0 380.9,523.3 382.2,522.5 383.5,521.7 384.9,520.9 386.2,520.2 387.5,519.4 388.9,518.7 390.3,517.9 391.6,517.2 393.0,516.5 394.4,515.7 395.8,515.0 397.2,514.3 398.6,513.6 400.0,512.9 401.5,512.2 402.9,511.6 404.4,510.9 405.8,510.2 407.3,509.6 408.8,508.9 410.3,508.3 411.8,507.6 413.3,507.0 414.8,506.4 416.3,505.8 417.8,505.2 419.3,504.6 420.9,504.0 422.4,503.4 424.0,502.8 425.5,502.3 427.1,501.7 428.7,501.1 430.2,500.6 431.8,500.1 433.4,499.5 435.0,499.0 436.6,498.5 438.2,498.0 439.9,497.5 441.5,497.0 443.1,496.5 444.8,496.0 446.4,495.6 448.0,495.1 449.7,494.6 451.4,494.2 453.0,493.8 454.7,493.3 456.4,492.9 458.0,492.5 459.7,492.1 461.4,491.7 463.1,491.3 464.8,490.9 466.5,490.6 468.2,490.2 469.9,489.8 471.6,489.5 473.3,489.1 475.1,488.8 476.8,488.5 478.5,488.2 480.2,487.9 482.0,487.6 483.7,487.3 485.5,487.0 487.2,486.7 489.0,486.4 490.7,486.2 492.5,485.9 494.2,485.7 496.0,485.4 497.7,485.2 499.5,485.0 501.3,484.8 503.1,484.6 504.8,484.4 506.6,484.2 508.4,484.0 510.1,483.9 511.9,483.7 513.7,483.6 515.5,483.4 517.3,483.3 519.1,483.1 520.8,483.0 522.6,482.9 524.4,482.8 526.2,482.7 528.0,482.6 529.8,482.6 531.6,482.5 533.4,482.4 535.2,482.4 537.0,482.3 538.8,482.3 540.5,482.3 542.3,482.3 544.1,482.2 545.9,482.2 547.7,482.2 549.5,482.3 551.3,482.3 553.1,482.3 554.9,482.4 556.7,482.4 558.4,482.5 560.2,482.5 562.0,482.6 563.8,482.7 565.6,482.8 567.4,482.9 569.1,483.0 570.9,483.1 572.7,483.2 574.5,483.4 576.2,483.5 578.0,483.6 579.8,483.8 581.5,484.0 583.3,484.1 585.1,484.3 586.8,484.5 588.6,484.7 590.3,484.9 592.1,485.1 593.8,485.4 595.6,485.6 597.3,485.8 599.0,486.1 600.8,486.3 602.5,486.6 604.2,486.9 606.0,487.1 607.7,487.4 609.4,487.7 611.1,488.0 612.8,488.4 614.5,488.7 616.2,489.0 617.9,489.3 619.6,489.7 621.3,490.0 622.9,490.4 624.6,490.8 626.3,491.2 627.9,491.5 629.6,491.9 631.2,492.3 632.9,492.7 634.5,493.2 636.2,493.6 637.8,494.0 639.4,494.5 641.0,494.9 642.7,495.4 644.3,495.8 645.9,496.3 647.5,496.8 649.0,497.3 650.6,497.8 652.2,498.3 653.8,498.8 655.3,499.3 656.9,499.8 658.4,500.4 660.0,500.9 661.5,501.5 663.0,502.0 664.5,502.6 666.0,503.2 667.5,503.7 669.0,504.3 670.5,504.9 672.0,505.5 673.5,506.1 674.9,506.7 676.4,507.4 677.8,508.0 679.3,508.6 680.7,509.3 682.1,509.9 683.5,510.6 684.9,511.3 686.3,511.9 687.7,512.6 689.1,513.3 690.4,514.0 691.8,514.7 693.1,515.4 694.5,516.1 695.8,516.9 697.1,517.6 698.4,518.3 699.7,519.1 701.0,519.8 702.3,520.6 703.6,521.3 704.8,522.1 706.1,522.9 707.3,523.7 708.5,524.5 709.7,525.3 711.0,526.1 712.1,526.9 713.3,527.7 714.5,528.5 715.7,529.3 716.8,530.2 717.9,531.0 719.1,531.9 720.2,532.7 721.3,533.6 722.4,534.4 723.4,535.3 724.5,536.2 725.6,537.1 726.6,538.0 727.6,538.9 728.7,539.8 729.7,540.7 730.7,541.6 731.6,542.5 732.6,543.4 733.6,544.3 734.5,545.3 735.4,546.2 736.3,547.2 737.2,548.1 738.1,549.1 739.0,550.0 739.9,551.0 740.7,552.0 741.6,552.9 742.4,553.9 743.2,554.9 744.0,555.9 744.8,556.9 745.5,557.9 746.3,558.9 747.0,559.9 747.7,560.9 748.5,561.9 749.1,562.9 749.8,564.0 750.5,565.0 751.1,566.0 751.8,567.1 752.4,568.1 753.0,569.1 753.6,570.2 754.2,571.3 754.7,572.3 755.3,573.4 755.8,574.4 756.3,575.5 756.8,576.6 757.3,577.7 757.8,578.7 758.3,579.8 758.7,580.9 759.1,582.0 759.5,583.1 759.9,584.2 760.3,585.3 760.6,586.4 761.0,587.5 761.3,588.6 761.6,589.7 761.9,590.8 762.0,591.1 761.8,591.5 761.4,592.6 760.9,593.7 760.4,594.8 759.9,596.0 759.4,597.1 758.9,598.2 758.3,599.3 757.8,600.4 757.2,601.5 756.6,602.6 755.9,603.8 755.3,604.9 754.6,606.0 754.0,607.1 753.3,608.2 752.5,609.3 751.8,610.4 751.1,611.4 750.3,612.5 749.5,613.6 748.7,614.7 747.9,615.8 747.0,616.9 746.2,617.9 745.3,619.0 744.4,620.1 743.5,621.1 742.6,622.2 741.6,623.2 740.7,624.3 739.7,625.3 738.7,626.4 737.7,627.4 736.6,628.4 735.6,629.5 734.5,630.5 733.4,631.5 732.3,632.5 731.2,633.5 730.1,634.6Z" fill="url(#wallg)"/>
<path d="M771.6,467.8 770.1,466.8 768.7,465.7 767.2,464.7 765.8,463.7 764.3,462.7 762.8,461.7 761.3,460.6 759.7,459.6 758.2,458.7 756.7,457.7 755.1,456.7 753.5,455.7 751.9,454.8 750.3,453.8 748.7,452.9 747.1,452.0 745.4,451.0 743.8,450.1 742.1,449.2 740.4,448.3 738.8,447.4 737.0,446.5 735.3,445.7 733.6,444.8 731.9,443.9 730.1,443.1 728.4,442.3 726.6,441.4 724.8,440.6 723.0,439.8 721.2,439.0 719.4,438.2 717.6,437.4 715.8,436.6 713.9,435.9 712.1,435.1 710.2,434.4 708.3,433.6 706.4,432.9 704.6,432.2 702.7,431.4 700.7,430.7 698.8,430.0 696.9,429.3 695.0,428.7 693.0,428.0 691.0,427.3 689.1,426.7 687.1,426.0 685.1,425.4 683.1,424.8 681.1,424.2 679.1,423.6 677.1,423.0 675.1,422.4 673.1,421.8 671.0,421.2 669.0,420.7 666.9,420.1 664.9,419.6 662.8,419.1 660.7,418.6 658.7,418.0 656.6,417.5 654.5,417.1 652.4,416.6 650.3,416.1 648.2,415.6 646.1,415.2 643.9,414.7 641.8,414.3 639.7,413.9 637.5,413.5 635.4,413.1 633.2,412.7 631.1,412.3 628.9,411.9 626.8,411.5 624.6,411.2 622.4,410.8 620.2,410.5 618.1,410.2 615.9,409.9 613.7,409.6 611.5,409.3 609.3,409.0 607.1,408.7 604.9,408.4 602.7,408.2 600.5,407.9 598.2,407.7 596.0,407.5 593.8,407.2 591.6,407.0 589.3,406.8 587.1,406.7 584.9,406.5 582.6,406.3 580.4,406.1 578.1,406.0 575.9,405.9 573.7,405.7 571.4,405.6 569.2,405.5 566.9,405.4 564.6,405.3 562.4,405.2 560.1,405.2 557.9,405.1 555.6,405.1 553.4,405.0 551.1,405.0 548.8,405.0 546.6,405.0 544.3,405.0 542.1,405.0 539.8,405.0 537.5,405.0 535.3,405.1 533.0,405.1 530.7,405.2 528.5,405.3 526.2,405.3 524.0,405.4 521.7,405.5 519.4,405.6 517.2,405.8 514.9,405.9 512.7,406.0 510.4,406.2 508.2,406.3 505.9,406.5 503.7,406.7 501.4,406.9 499.2,407.1 496.9,407.3 494.7,407.5 492.4,407.8 490.2,408.0 488.0,408.2 485.7,408.5 483.5,408.8 481.3,409.1 479.0,409.3 476.8,409.6 474.6,410.0 472.4,410.3 470.2,410.6 468.0,410.9 465.8,411.3 463.6,411.6 461.4,412.0 459.2,412.4 457.0,412.8 454.8,413.2 452.6,413.6 450.5,414.0 448.3,414.4 446.1,414.9 444.0,415.3 441.8,415.8 439.7,416.2 437.5,416.7 435.4,417.2 433.3,417.7 431.1,418.2 429.0,418.7 426.9,419.2 424.8,419.8 422.7,420.3 420.6,420.8 418.5,421.4 416.4,422.0 414.4,422.6 412.3,423.1 410.2,423.7 408.2,424.4 406.1,425.0 404.1,425.6 402.1,426.2 400.0,426.9 398.0,427.5 396.0,428.2 394.0,428.9 392.0,429.6 390.0,430.2 388.1,430.9 386.1,431.7 384.1,432.4 382.2,433.1 380.2,433.8 378.3,434.6 376.4,435.3 374.5,436.1 372.6,436.9 370.7,437.7 368.8,438.4 366.9,439.2 365.0,440.1 363.2,440.9 361.3,441.7 359.5,442.5 357.7,443.4 355.9,444.2 354.1,445.1 352.3,446.0 350.5,446.8 348.7,447.7 346.9,448.6 345.2,449.5 343.5,450.4 341.7,451.4 340.0,452.3 338.3,453.2 336.6,454.2 334.9,455.1 333.3,456.1 331.6,457.0 330.0,458.0 328.4,459.0 326.7,460.0 325.1,461.0 323.5,462.0 322.0,463.0 320.4,464.1 318.9,465.1 317.3,466.1 315.8,467.2 314.3,468.2 312.8,469.3 311.3,470.4 309.8,471.4 308.4,472.5 306.9,473.6 305.5,474.7 304.1,475.8 302.7,477.0 302.3,477.3 301.7,477.8 300.3,478.9 298.8,480.0 297.4,481.2 296.0,482.3 294.7,483.5 293.3,484.6 292.0,485.8 290.6,487.0 289.3,488.2 288.0,489.4 286.7,490.6 285.5,491.8 284.2,493.0 283.0,494.2 281.8,495.4 280.6,496.7 279.4,497.9 278.2,499.2 277.1,500.4 276.0,501.7 274.8,502.9 273.7,504.2 272.7,505.5 271.6,506.8 270.6,508.1 269.5,509.4 268.5,510.7 267.5,512.0 266.6,513.3 265.6,514.6 264.7,515.9 263.8,517.3 262.9,518.6 262.0,519.9 261.1,521.3 260.3,522.6 259.5,524.0 258.7,525.3 257.9,526.7 257.1,528.1 256.4,529.5 255.7,530.8 255.0,532.2 254.3,533.6 253.6,535.0 253.0,536.4 252.4,537.8 251.8,539.2 251.2,540.6 250.6,542.0 250.1,543.4 249.6,544.9 249.1,546.3 248.6,547.7 248.2,549.1 247.7,550.6 247.3,552.0 246.9,553.5 246.6,554.9 246.2,556.4 245.9,557.8 245.6,559.3 245.3,560.7 245.0,562.2 244.8,563.6 244.6,565.1 244.4,566.6 244.2,568.0 244.1,569.5 244.0,571.0 243.9,572.4 243.8,573.9 243.7,575.4 243.7,576.9 243.7,578.3 243.7,579.8 243.7,581.3 243.8,582.8 243.9,584.3 244.0,585.7 244.1,587.2 244.2,588.7 244.4,590.2 244.6,591.7 244.8,593.2 245.1,594.6 245.4,596.1 245.6,597.6 246.0,599.1 246.3,600.6 246.7,602.1 247.1,603.5 247.5,605.0 247.9,606.5 248.4,608.0 248.8,609.5 249.4,610.9 249.9,612.4 250.4,613.9 251.0,615.4 251.6,616.8 252.2,618.3 252.9,619.8 253.6,621.2 254.3,622.7 255.0,624.1 255.8,625.6 256.5,627.0 257.3,628.5 258.1,629.9 259.0,631.4 259.9,632.8 260.8,634.3 261.7,635.7 262.6,637.1 263.6,638.5 264.6,640.0 265.6,641.4 266.6,642.8 267.7,644.2 268.8,645.6 269.9,647.0 271.0,648.4 272.2,649.8 273.4,651.2 274.6,652.5 275.8,653.9 277.0,655.3 278.3,656.6 279.6,658.0 280.9,659.3 282.3,660.7 283.7,662.0 285.1,663.4 286.5,664.7 287.9,666.0 289.4,667.3 290.9,668.6 292.4,669.9 293.9,671.2 295.5,672.5 297.1,673.7 298.7,675.0 300.3,676.3 301.9,677.5 303.6,678.8 305.3,680.0 307.0,681.2 308.7,682.4 310.5,683.6 312.3,684.8 314.1,686.0 315.9,687.2 317.7,688.4 319.6,689.5 321.5,690.7 323.4,691.8 325.3,693.0 327.3,694.1 329.2,695.2 331.2,696.3 333.2,697.4 335.3,698.5 337.3,699.6 339.4,700.6 341.5,701.7 343.6,702.7 345.7,703.7 347.8,704.7 350.0,705.8 352.2,706.7 354.4,707.7 356.6,708.7 358.9,709.7 361.1,710.6 363.4,711.5 365.7,712.5 368.0,713.4 370.3,714.3 372.7,715.2 375.0,716.0 377.4,716.9 379.8,717.7 382.2,718.6 384.6,719.4 387.1,720.2 389.5,721.0 392.0,721.8 394.5,722.6 397.0,723.3 399.5,724.1 402.0,724.8 404.6,725.5 407.1,726.2 409.7,726.9 412.3,727.6 414.9,728.2 417.5,728.9 420.1,729.5 422.7,730.1 425.4,730.7 428.0,731.3 430.7,731.9 433.4,732.4 436.1,733.0 438.8,733.5 441.5,734.0 444.2,734.5 446.9,735.0 449.7,735.4 452.4,735.9 455.2,736.3 458.0,736.8 460.7,737.2 463.5,737.6 466.3,737.9 469.1,738.3 471.9,738.6 474.7,739.0 477.6,739.3 480.4,739.6 483.2,739.9 486.1,740.1 488.9,740.4 491.8,740.6 494.6,740.8 497.5,741.0 500.3,741.2 503.2,741.4 506.1,741.5 509.0,741.7 511.8,741.8 514.7,741.9 517.6,742.0 520.5,742.1 523.4,742.1 526.3,742.2 529.2,742.2 532.0,742.2 534.9,742.2 537.8,742.2 540.7,742.1 543.6,742.1 546.5,742.0 549.4,741.9 552.3,741.8 555.2,741.7 558.1,741.6 560.9,741.4 563.8,741.2 566.7,741.1 569.6,740.9 572.5,740.7 575.3,740.4 578.2,740.2 581.1,739.9 583.9,739.6 586.8,739.3 589.6,739.0 592.4,738.7 595.3,738.4 598.1,738.0 600.9,737.6 603.8,737.3 606.6,736.9 609.4,736.4 612.2,736.0 614.9,735.6 617.7,735.1 620.5,734.6 623.3,734.1 626.0,733.6 628.8,733.1 631.5,732.6 634.2,732.0 636.9,731.4 639.6,730.9 642.3,730.3 645.0,729.6 647.7,729.0 650.4,728.4 653.0,727.7 655.6,727.1 658.3,726.4 660.9,725.7 663.5,725.0 666.1,724.2 668.7,723.5 671.2,722.8 673.8,722.0 676.3,721.2 678.8,720.4 681.3,719.6 683.8,718.8 686.3,718.0 688.8,717.1 691.2,716.3 693.6,715.4 696.1,714.5 698.5,713.6 700.8,712.7 703.2,711.8 705.6,710.9 707.9,709.9 710.2,709.0 712.5,708.0 714.8,707.0 717.1,706.0 719.3,705.0 721.5,704.0 723.8,703.0 725.9,702.0 728.1,700.9 730.3,699.9 732.4,698.8 734.5,697.7 736.6,696.6 738.7,695.5 740.8,694.4 742.8,693.3 744.8,692.2 746.8,691.0 748.8,689.9 750.8,688.7 752.7,687.6 754.6,686.4 756.5,685.2 758.4,684.0 760.3,682.8 762.1,681.6 763.9,680.4 765.7,679.1 767.5,677.9 769.2,676.7 771.0,675.4 772.7,674.2 774.4,672.9 776.0,671.6 777.7,670.3 779.3,669.0 780.9,667.7 782.5,666.4 784.0,665.1 785.5,663.8 787.1,662.5 788.5,661.1 790.0,659.8 791.4,658.5 792.9,657.1 794.2,655.8 795.6,654.4 797.0,653.0 798.3,651.7 799.6,650.3 800.9,648.9 802.1,647.5 803.3,646.1 804.5,644.7 805.7,643.3 806.9,641.9 808.0,640.5 809.1,639.1 810.2,637.6 811.3,636.2 812.3,634.8 813.3,633.4 814.3,631.9 815.3,630.5 816.2,629.0 817.2,627.6 818.1,626.2 818.9,624.7 819.8,623.2 820.6,621.8 821.4,620.3 822.2,618.9 822.9,617.4 823.7,615.9 824.4,614.5 825.1,613.0 825.7,611.5 826.4,610.1 827.0,608.6 827.6,607.1 828.1,605.6 828.7,604.2 829.2,602.7 829.7,601.2 830.1,599.7 830.6,598.2 831.0,596.8 831.4,595.3 831.8,593.8 832.1,592.3 832.4,590.8 832.8,589.4 833.0,587.9 833.3,586.4 833.5,584.9 833.7,583.4 833.9,582.0 834.1,580.5 834.2,579.0 834.3,577.5 834.4,576.1 834.5,574.6 834.6,573.1 834.6,571.6 834.6,570.2 834.6,568.7 834.5,567.2 834.5,565.8 834.4,564.3 834.3,562.9 834.1,561.4 834.0,560.0 833.8,558.5 833.6,557.1 833.4,555.6 833.2,554.2 832.9,552.7 832.6,551.3 832.3,549.9 832.0,548.4 831.6,547.0 831.3,545.6 830.9,544.2 830.5,542.7 830.0,541.3 829.6,539.9 829.1,538.5 828.6,537.1 828.1,535.7 827.5,534.3 827.0,532.9 826.4,531.6 825.8,530.2 825.2,528.8 824.6,527.4 823.9,526.1 823.2,524.7 822.5,523.4 821.8,522.0 821.1,520.7 820.3,519.3 819.5,518.0 818.7,516.7 817.9,515.3 817.1,514.0 816.2,512.7 815.4,511.4 814.5,510.1 813.6,508.8 812.6,507.5 811.7,506.2 810.7,504.9 809.8,503.7 808.8,502.4 807.7,501.1 806.7,499.9 805.7,498.6 804.6,497.4 803.5,496.2 802.4,494.9 801.3,493.7 800.1,492.5 799.0,491.3 797.8,490.1 796.6,488.9 795.4,487.7 794.2,486.5 792.9,485.3 791.7,484.2 790.4,483.0 789.1,481.9 787.8,480.7 786.5,479.6 785.2,478.4 783.8,477.3 782.5,476.2 781.1,475.1 779.7,474.0 778.3,472.9 776.9,471.8 775.4,470.7 774.0,469.7 773.0,468.9ZM727.8,636.5 726.6,637.5 725.4,638.5 724.2,639.5 722.9,640.5 721.7,641.4 720.4,642.4 719.1,643.4 717.8,644.3 716.5,645.3 715.2,646.2 713.9,647.1 712.5,648.1 711.1,649.0 709.7,649.9 708.3,650.8 706.9,651.7 705.5,652.6 704.0,653.5 702.5,654.3 701.1,655.2 699.6,656.1 698.0,656.9 696.5,657.8 695.0,658.6 693.4,659.5 691.9,660.3 690.3,661.1 688.7,661.9 687.1,662.7 685.4,663.5 683.8,664.3 682.1,665.1 680.5,665.9 678.8,666.6 677.1,667.4 675.4,668.1 673.7,668.9 672.0,669.6 670.2,670.3 668.5,671.0 666.7,671.7 664.9,672.4 663.1,673.1 661.3,673.8 659.5,674.5 657.7,675.1 655.8,675.8 654.0,676.4 652.1,677.0 650.3,677.6 648.4,678.3 646.5,678.9 644.6,679.4 642.7,680.0 640.8,680.6 638.8,681.2 636.9,681.7 634.9,682.2 633.0,682.8 631.0,683.3 629.0,683.8 627.1,684.3 625.1,684.8 623.1,685.3 621.0,685.7 619.0,686.2 617.0,686.6 615.0,687.1 612.9,687.5 610.9,687.9 608.8,688.3 606.8,688.7 604.7,689.1 602.6,689.5 600.5,689.8 598.5,690.2 596.4,690.5 594.3,690.8 592.2,691.2 590.0,691.5 587.9,691.8 585.8,692.0 583.7,692.3 581.6,692.6 579.4,692.8 577.3,693.1 575.2,693.3 573.0,693.5 570.9,693.7 568.7,693.9 566.6,694.1 564.4,694.2 562.3,694.4 560.1,694.5 557.9,694.7 555.8,694.8 553.6,694.9 551.4,695.0 549.3,695.1 547.1,695.2 544.9,695.2 542.8,695.3 540.6,695.3 538.4,695.3 536.3,695.4 534.1,695.4 531.9,695.4 529.7,695.3 527.6,695.3 525.4,695.3 523.2,695.2 521.1,695.1 518.9,695.1 516.8,695.0 514.6,694.9 512.4,694.8 510.3,694.6 508.1,694.5 506.0,694.3 503.8,694.2 501.7,694.0 499.6,693.8 497.4,693.6 495.3,693.4 493.2,693.2 491.1,693.0 488.9,692.7 486.8,692.5 484.7,692.2 482.6,692.0 480.5,691.7 478.4,691.4 476.4,691.1 474.3,690.8 472.2,690.4 470.1,690.1 468.1,689.7 466.0,689.4 464.0,689.0 462.0,688.6 459.9,688.2 457.9,687.8 455.9,687.4 453.9,687.0 451.9,686.5 449.9,686.1 447.9,685.6 446.0,685.1 444.0,684.6 442.0,684.2 440.1,683.7 438.2,683.1 436.2,682.6 434.3,682.1 432.4,681.5 430.5,681.0 428.6,680.4 426.8,679.8 424.9,679.3 423.1,678.7 421.2,678.1 419.4,677.5 417.6,676.8 415.8,676.2 414.0,675.6 412.2,674.9 410.4,674.2 408.7,673.6 406.9,672.9 405.2,672.2 403.5,671.5 401.8,670.8 400.1,670.1 398.4,669.4 396.7,668.6 395.0,667.9 393.4,667.1 391.8,666.4 390.2,665.6 388.6,664.8 387.0,664.1 385.4,663.3 383.8,662.5 382.3,661.7 380.8,660.8 379.3,660.0 377.8,659.2 376.3,658.3 374.8,657.5 373.3,656.6 371.9,655.8 370.5,654.9 369.1,654.0 367.7,653.2 366.3,652.3 364.9,651.4 363.6,650.5 362.3,649.6 360.9,648.6 359.6,647.7 358.4,646.8 357.1,645.9 355.8,644.9 354.6,644.0 353.4,643.0 352.2,642.1 351.0,641.1 349.8,640.1 348.7,639.1 347.6,638.2 346.4,637.2 345.3,636.2 344.3,635.2 343.2,634.2 342.2,633.2 341.1,632.2 340.1,631.1 339.1,630.1 338.1,629.1 337.2,628.1 336.2,627.0 335.3,626.0 334.4,624.9 333.5,623.9 332.6,622.8 331.8,621.8 330.9,620.7 330.1,619.6 329.3,618.6 328.5,617.5 327.8,616.4 327.0,615.3 326.3,614.3 325.6,613.2 324.9,612.1 324.2,611.0 323.6,609.9 322.9,608.8 322.3,607.7 321.7,606.6 321.1,605.5 320.5,604.4 320.0,603.3 319.5,602.2 319.0,601.1 318.5,599.9 318.0,598.8 317.5,597.7 317.1,596.6 316.7,595.5 316.3,594.3 315.9,593.2 315.5,592.1 315.2,591.0 314.8,589.8 314.5,588.7 314.2,587.6 313.9,586.4 313.7,585.3 313.4,584.2 313.2,583.1 313.0,581.9 312.8,580.8 312.7,579.6 312.5,578.5 312.4,577.4 312.3,576.2 312.2,575.1 312.1,574.0 312.0,572.8 312.0,571.7 312.0,570.6 311.9,569.4 312.0,568.3 312.0,567.2 312.0,566.1 312.1,564.9 312.2,563.8 312.3,562.7 312.4,561.5 312.5,560.4 312.6,559.3 312.8,558.2 313.0,557.1 313.2,555.9 313.4,554.8 313.6,553.7 313.9,552.6 314.2,551.5 314.4,550.4 314.7,549.3 315.1,548.2 315.4,547.1 315.7,546.0 316.1,544.9 316.5,543.8 316.9,542.7 317.3,541.6 317.7,540.5 318.2,539.4 318.6,538.3 319.1,537.2 319.6,536.2 320.1,535.1 320.7,534.0 321.2,532.9 321.8,531.9 322.3,530.8 322.9,529.8 323.5,528.7 324.1,527.7 324.8,526.6 325.4,525.6 326.1,524.5 326.8,523.5 327.5,522.5 328.2,521.4 328.9,520.4 329.6,519.4 330.4,518.4 331.2,517.4 331.9,516.4 332.7,515.4 333.6,514.4 334.4,513.4 335.2,512.4 336.1,511.4 336.9,510.4 337.8,509.4 338.7,508.5 339.6,507.5 340.5,506.5 341.5,505.6 342.4,504.6 343.4,503.7 344.4,502.7 345.4,501.8 346.4,500.9 347.4,499.9 348.4,499.0 349.4,498.1 350.5,497.2 351.6,496.3 352.6,495.4 353.7,494.5 354.8,493.6 355.9,492.7 357.1,491.9 358.2,491.0 359.3,490.1 360.5,489.3 361.7,488.4 362.9,487.6 364.1,486.7 365.3,485.9 366.5,485.0 367.7,484.2 369.0,483.4 370.2,482.6 371.5,481.8 372.7,481.0 374.0,480.2 375.3,479.4 376.6,478.6 377.9,477.9 379.3,477.1 380.6,476.3 381.9,475.6 383.3,474.8 384.7,474.1 386.0,473.4 387.4,472.6 388.8,471.9 390.2,471.2 391.6,470.5 393.0,469.8 394.5,469.1 395.9,468.4 397.4,467.7 398.8,467.1 400.3,466.4 401.8,465.7 403.2,465.1 404.7,464.4 406.2,463.8 407.7,463.2 409.3,462.5 410.8,461.9 412.3,461.3 413.9,460.7 415.4,460.1 417.0,459.5 418.5,459.0 420.1,458.4 421.7,457.8 423.2,457.3 424.8,456.7 426.4,456.2 428.0,455.6 429.6,455.1 431.3,454.6 432.9,454.1 434.5,453.6 436.1,453.1 437.8,452.6 439.4,452.1 441.1,451.6 442.7,451.1 444.4,450.7 446.1,450.2 447.8,449.8 449.4,449.4 451.1,448.9 452.8,448.5 454.5,448.1 456.2,447.7 457.9,447.3 459.6,446.9 461.4,446.5 463.1,446.1 464.8,445.8 466.5,445.4 468.3,445.1 470.0,444.7 471.8,444.4 473.5,444.1 475.2,443.7 477.0,443.4 478.8,443.1 480.5,442.8 482.3,442.5 484.1,442.3 485.8,442.0 487.6,441.7 489.4,441.5 491.2,441.2 492.9,441.0 494.7,440.8 496.5,440.5 498.3,440.3 500.1,440.1 501.9,439.9 503.7,439.7 505.5,439.6 507.3,439.4 509.1,439.2 510.9,439.1 512.7,438.9 514.5,438.8 516.3,438.6 518.1,438.5 519.9,438.4 521.8,438.3 523.6,438.2 525.4,438.1 527.2,438.0 529.0,437.9 530.8,437.9 532.7,437.8 534.5,437.8 536.3,437.7 538.1,437.7 539.9,437.7 541.7,437.6 543.6,437.6 545.4,437.6 547.2,437.6 549.0,437.7 550.8,437.7 552.6,437.7 554.5,437.7 556.3,437.8 558.1,437.9 559.9,437.9 561.7,438.0 563.5,438.1 565.3,438.2 567.1,438.3 568.9,438.4 570.7,438.5 572.5,438.6 574.3,438.7 576.1,438.9 577.9,439.0 579.7,439.2 581.5,439.3 583.3,439.5 585.1,439.7 586.9,439.9 588.6,440.1 590.4,440.3 592.2,440.5 594.0,440.7 595.7,440.9 597.5,441.2 599.3,441.4 601.0,441.7 602.8,441.9 604.5,442.2 606.3,442.5 608.0,442.7 609.7,443.0 611.5,443.3 613.2,443.6 614.9,444.0 616.6,444.3 618.4,444.6 620.1,445.0 621.8,445.3 623.5,445.7 625.2,446.0 626.9,446.4 628.6,446.8 630.2,447.2 631.9,447.5 633.6,448.0 635.3,448.4 636.9,448.8 638.6,449.2 640.2,449.6 641.9,450.1 643.5,450.5 645.1,451.0 646.7,451.5 648.4,451.9 650.0,452.4 651.6,452.9 653.2,453.4 654.8,453.9 656.3,454.4 657.9,454.9 659.5,455.4 661.0,456.0 662.6,456.5 664.1,457.1 665.7,457.6 667.2,458.2 668.7,458.7 670.3,459.3 671.8,459.9 673.3,460.5 674.8,461.1 676.2,461.7 677.7,462.3 679.2,462.9 680.6,463.6 682.1,464.2 683.5,464.8 685.0,465.5 686.4,466.1 687.8,466.8 689.2,467.5 690.6,468.2 692.0,468.8 693.4,469.5 694.7,470.2 696.1,470.9 697.4,471.6 698.8,472.4 700.1,473.1 701.4,473.8 702.7,474.5 704.0,475.3 705.3,476.0 706.6,476.8 707.8,477.6 709.1,478.3 710.3,479.1 711.6,479.9 712.8,480.7 714.0,481.5 715.2,482.3 716.4,483.1 717.6,483.9 718.7,484.7 719.9,485.5 721.0,486.4 722.2,487.2 723.3,488.1 724.4,488.9 725.5,489.8 726.6,490.6 727.7,491.5 728.7,492.4 729.8,493.2 730.8,494.1 731.8,495.0 732.8,495.9 733.8,496.8 734.8,497.7 735.8,498.6 736.7,499.6 737.7,500.5 738.6,501.4 739.5,502.3 740.4,503.3 741.3,504.2 742.2,505.2 743.1,506.1 743.9,507.1 744.7,508.0 745.6,509.0 746.4,510.0 747.2,511.0 747.9,511.9 748.7,512.9 749.5,513.9 750.2,514.9 750.9,515.9 751.6,516.9 752.3,517.9 753.0,518.9 753.7,519.9 754.3,521.0 754.9,522.0 755.6,523.0 756.2,524.0 756.7,525.1 757.3,526.1 757.9,527.2 758.4,528.2 758.9,529.3 759.5,530.3 760.0,531.4 760.4,532.4 760.9,533.5 761.3,534.6 761.8,535.6 762.2,536.7 762.6,537.8 763.0,538.9 763.3,540.0 763.7,541.0 764.0,542.1 764.3,543.2 764.6,544.3 764.9,545.4 765.2,546.5 765.5,547.6 765.7,548.7 765.9,549.8 766.1,550.9 766.3,552.0 766.5,553.1 766.6,554.2 766.7,555.4 766.9,556.5 767.0,557.6 767.1,558.7 767.1,559.8 767.2,561.0 767.2,562.1 767.2,563.2 767.2,564.3 767.2,565.5 767.1,566.6 767.1,567.7 767.0,568.8 766.9,570.0 766.8,571.1 766.7,572.2 766.6,573.4 766.4,574.5 766.2,575.6 766.0,576.8 765.8,577.9 765.6,579.0 765.3,580.2 765.1,581.3 764.8,582.4 764.5,583.6 764.1,584.7 763.8,585.8 763.4,586.9 763.1,588.1 762.7,589.2 762.3,590.3 761.8,591.5 761.4,592.6 760.9,593.7 760.4,594.8 759.9,596.0 759.4,597.1 758.9,598.2 758.3,599.3 757.8,600.4 757.2,601.5 756.6,602.6 755.9,603.8 755.3,604.9 754.6,606.0 754.0,607.1 753.3,608.2 752.5,609.3 751.8,610.4 751.1,611.4 750.3,612.5 749.5,613.6 748.7,614.7 747.9,615.8 747.0,616.9 746.2,617.9 745.3,619.0 744.4,620.1 743.5,621.1 742.6,622.2 741.6,623.2 740.7,624.3 739.7,625.3 738.7,626.4 737.7,627.4 736.6,628.4 735.6,629.5 734.5,630.5 733.4,631.5 732.3,632.5 731.2,633.5 730.1,634.6 728.9,635.6Z" fill="#e4dfd3"/>
<path d="M785.3,653.0 786.8,651.7 788.1,650.4 789.5,649.1 790.9,647.8 792.2,646.4 793.5,645.1 794.8,643.7 796.0,642.4 797.3,641.0 798.5,639.7 799.7,638.3 800.8,636.9 802.0,635.5 803.1,634.2 804.2,632.8 805.3,631.4 806.3,630.0 807.3,628.6 808.3,627.2 809.3,625.8 810.3,624.4 811.2,623.0 812.1,621.6 813.0,620.1 813.9,618.7 814.7,617.3 815.5,615.9 816.3,614.4 817.1,613.0 817.8,611.6 818.5,610.2 819.2,608.7 819.9,607.3 820.6,605.8 821.2,604.4 821.8,603.0 822.4,601.5 822.9,600.1 823.5,598.6 824.0,597.2 824.5,595.7 824.9,594.3 825.4,592.8 825.8,591.4 826.2,589.9 826.6,588.5 826.9,587.0 827.2,585.6 827.6,584.1 827.8,582.7 828.1,581.2 828.3,579.8 828.5,578.3 828.7,576.9 828.9,575.4 829.0,574.0 829.2,572.6 829.3,571.1 829.3,569.7 829.4,568.2 829.4,566.8 829.4,565.4 829.4,563.9 829.4,562.5 829.3,561.0 829.2,559.6 829.1,558.2 829.0,556.8 828.9,555.3 828.7,553.9 828.5,552.5 828.3,551.1 828.1,549.7 827.8,548.3 827.5,546.9 827.3,545.5 826.9,544.0 826.6,542.7 826.2,541.3 825.9,539.9 825.5,538.5 825.0,537.1 824.6,535.7 824.1,534.3 823.7,533.0 823.2,531.6 822.6,530.2 822.1,528.9 821.5,527.5 820.9,526.2 820.3,524.8 819.7,523.5 819.1,522.1 818.4,520.8 817.7,519.5 817.0,518.1 816.3,516.8 815.6,515.5 814.8,514.2 814.0,512.9 813.2,511.6 812.4,510.3 811.6,509.0 810.7,507.7 809.9,506.5 809.0,505.2 808.1,503.9 807.1,502.7 806.2,501.4 805.2,500.2 804.3,498.9 803.3,497.7 802.2,496.5 801.2,495.2 800.2,494.0 799.1,492.8 798.0,491.6 796.9,490.4 795.8,489.2 794.7,488.0 793.5,486.8 792.4,485.7 791.2,484.5 790.0,483.3 788.8,482.2 787.5,481.0 786.3,479.9 785.0,478.8 783.7,477.6 782.4,476.5 781.1,475.4 779.8,474.3 778.5,473.2 777.1,472.1 775.8,471.0 774.4,470.0 773.0,468.9 771.6,467.8 770.1,466.8 768.7,465.7 767.2,464.7 765.8,463.7 764.3,462.7 762.8,461.7 761.3,460.6 759.7,459.6 758.2,458.7 756.7,457.7 755.1,456.7 753.5,455.7 751.9,454.8 750.3,453.8 748.7,452.9 747.1,452.0 745.4,451.0 743.8,450.1 742.1,449.2 740.4,448.3 738.8,447.4 737.0,446.5 735.3,445.7 733.6,444.8 731.9,443.9 730.1,443.1 728.4,442.3 726.6,441.4 724.8,440.6 723.0,439.8 721.2,439.0 719.4,438.2 717.6,437.4 715.8,436.6 713.9,435.9 712.1,435.1 710.2,434.4 708.3,433.6 706.4,432.9 704.6,432.2 702.7,431.4 700.7,430.7 698.8,430.0 696.9,429.3 695.0,428.7 693.0,428.0 691.0,427.3 689.1,426.7 687.1,426.0 685.1,425.4 683.1,424.8 681.1,424.2 679.1,423.6 677.1,423.0 675.1,422.4 673.1,421.8 671.0,421.2 669.0,420.7 666.9,420.1 664.9,419.6 662.8,419.1 660.7,418.6 658.7,418.0 656.6,417.5 654.5,417.1 652.4,416.6 650.3,416.1 648.2,415.6 646.1,415.2 643.9,414.7 641.8,414.3 639.7,413.9 637.5,413.5 635.4,413.1 633.2,412.7 631.1,412.3 628.9,411.9 626.8,411.5 624.6,411.2 622.4,410.8 620.2,410.5 618.1,410.2 615.9,409.9 613.7,409.6 611.5,409.3 609.3,409.0 607.1,408.7 604.9,408.4 602.7,408.2 600.5,407.9 598.2,407.7 596.0,407.5 593.8,407.2 591.6,407.0 589.3,406.8 587.1,406.7 584.9,406.5 582.6,406.3 580.4,406.1 578.1,406.0 575.9,405.9 573.7,405.7 571.4,405.6 569.2,405.5 566.9,405.4 564.6,405.3 562.4,405.2 560.1,405.2 557.9,405.1 555.6,405.1 553.4,405.0 551.1,405.0 548.8,405.0 546.6,405.0 544.3,405.0 542.1,405.0 539.8,405.0 537.5,405.0 535.3,405.1 533.0,405.1 530.7,405.2 528.5,405.3 526.2,405.3 524.0,405.4 521.7,405.5 519.4,405.6 517.2,405.8 514.9,405.9 512.7,406.0 510.4,406.2 508.2,406.3 505.9,406.5 503.7,406.7 501.4,406.9 499.2,407.1 496.9,407.3 494.7,407.5 492.4,407.8 490.2,408.0 488.0,408.2 485.7,408.5 483.5,408.8 481.3,409.1 479.0,409.3 476.8,409.6 474.6,410.0 472.4,410.3 470.2,410.6 468.0,410.9 465.8,411.3 463.6,411.6 461.4,412.0 459.2,412.4 457.0,412.8 454.8,413.2 452.6,413.6 450.5,414.0 448.3,414.4 446.1,414.9 444.0,415.3 441.8,415.8 439.7,416.2 437.5,416.7 435.4,417.2 433.3,417.7 431.1,418.2 429.0,418.7 426.9,419.2 424.8,419.8 422.7,420.3 420.6,420.8 418.5,421.4 416.4,422.0 414.4,422.6 412.3,423.1 410.2,423.7 408.2,424.4 406.1,425.0 404.1,425.6 402.1,426.2 400.0,426.9 398.0,427.5 396.0,428.2 394.0,428.9 392.0,429.6 390.0,430.2 388.1,430.9 386.1,431.7 384.1,432.4 382.2,433.1 380.2,433.8 378.3,434.6 376.4,435.3 374.5,436.1 372.6,436.9 370.7,437.7 368.8,438.4 366.9,439.2 365.0,440.1 363.2,440.9 361.3,441.7 359.5,442.5 357.7,443.4 355.9,444.2 354.1,445.1 352.3,446.0 350.5,446.8 348.7,447.7 346.9,448.6 345.2,449.5 343.5,450.4 341.7,451.4 340.0,452.3 338.3,453.2 336.6,454.2 334.9,455.1 333.3,456.1 331.6,457.0 330.0,458.0 328.4,459.0 326.7,460.0 325.1,461.0 323.5,462.0 322.0,463.0 320.4,464.1 318.9,465.1 317.3,466.1 315.8,467.2 314.3,468.2 312.8,469.3 311.3,470.4 309.8,471.4 308.4,472.5 306.9,473.6 305.5,474.7 304.1,475.8 302.7,477.0 301.3,478.1 300.0,479.2 298.6,480.3 297.3,481.5 296.0,482.6 294.7,483.8 293.4,485.0 292.1,486.1 290.8,487.3 289.6,488.5 288.4,489.7 287.2,490.9 286.0,492.1 284.8,493.3 283.6,494.5 282.5,495.7 281.4,497.0 280.3,498.2 279.2,499.4 278.1,500.7 277.0,501.9 276.0,503.2 275.0,504.5 274.0,505.7 273.0,507.0 272.0,508.3 271.1,509.6 270.1,510.9 269.2,512.2 268.3,513.5 267.5,514.8 266.6,516.1 265.8,517.4 264.9,518.8 264.1,520.1 263.4,521.4 262.6,522.8 261.9,524.1 261.1,525.4 260.4,526.8 259.7,528.2 259.1,529.5 258.4,530.9 257.8,532.2 257.2,533.6 256.6,535.0 256.1,536.4 255.5,537.8 255.0,539.2 254.5,540.5 254.0,541.9 253.5,543.3 253.1,544.7 252.7,546.1 252.3,547.6 251.9,549.0 251.5,550.4 251.2,551.8 250.9,553.2 250.6,554.6 250.3,556.1 250.1,557.5 249.9,558.9 249.6,560.4 249.5,561.8 249.3,563.2 249.2,564.7 249.0,566.1 248.9,567.6 248.9,569.0 248.8,570.4 248.8,571.9 248.8,573.3 248.8,574.8 248.8,576.2 248.9,577.7 249.0,579.1 249.1,580.6 249.2,582.0 249.4,583.5 249.6,584.9 249.8,586.4 250.0,587.8 250.2,589.3 250.5,590.8 250.8,592.2 251.1,593.7 251.4,595.1 251.8,596.6 252.2,598.0 252.6,599.5 253.0,600.9 253.5,602.4 254.0,603.8 254.5,605.2 255.0,606.7 255.6,608.1 256.1,609.6 256.7,611.0 257.3,612.4 258.0,613.9 258.7,615.3 259.4,616.7 260.1,618.2 260.8,619.6 261.6,621.0 262.4,622.4 263.2,623.8 264.0,625.2 264.9,626.7 265.7,628.1 266.7,629.5 267.6,630.9 268.5,632.2 269.5,633.6 270.5,635.0 271.5,636.4 272.6,637.8 273.7,639.2 274.7,640.5 275.9,641.9 277.0,643.2 278.2,644.6 279.4,645.9 280.6,647.3 281.8,648.6 283.1,649.9 284.3,651.3 285.7,652.6 287.0,653.9 288.3,655.2 289.7,656.5 291.1,657.8 292.5,659.1 294.0,660.4 295.4,661.6 296.9,662.9 298.4,664.2 299.9,665.4 301.5,666.7 303.1,667.9 304.7,669.1 306.3,670.3 307.9,671.6 309.6,672.8 311.3,674.0 313.0,675.1 314.7,676.3 316.5,677.5 318.2,678.7 320.0,679.8 321.8,680.9 323.7,682.1 325.5,683.2 327.4,684.3 329.3,685.4 331.2,686.5 333.1,687.6 335.1,688.7 337.1,689.8 339.1,690.8 341.1,691.9 343.1,692.9 345.1,693.9 347.2,694.9 349.3,695.9 351.4,696.9 353.5,697.9 355.7,698.9 357.8,699.8 360.0,700.8 362.2,701.7 364.4,702.7 366.7,703.6 368.9,704.5 371.2,705.4 373.5,706.2 375.8,707.1 378.1,708.0 380.4,708.8 382.8,709.6 385.1,710.4 387.5,711.2 389.9,712.0 392.3,712.8 394.7,713.6 397.2,714.3 399.6,715.1 402.1,715.8 404.6,716.5 407.1,717.2 409.6,717.9 412.1,718.5 414.6,719.2 417.2,719.8 419.8,720.5 422.3,721.1 424.9,721.7 427.5,722.3 430.1,722.8 432.7,723.4 435.4,723.9 438.0,724.5 440.7,725.0 443.3,725.5 446.0,726.0 448.7,726.4 451.4,726.9 454.1,727.3 456.8,727.8 459.5,728.2 462.2,728.6 464.9,729.0 467.7,729.3 470.4,729.7 473.2,730.0 475.9,730.3 478.7,730.6 481.5,730.9 484.3,731.2 487.0,731.5 489.8,731.7 492.6,731.9 495.4,732.1 498.2,732.3 501.0,732.5 503.9,732.7 506.7,732.8 509.5,733.0 512.3,733.1 515.1,733.2 518.0,733.3 520.8,733.4 523.6,733.4 526.5,733.4 529.3,733.5 532.1,733.5 535.0,733.5 537.8,733.5 540.6,733.4 543.5,733.4 546.3,733.3 549.1,733.2 552.0,733.1 554.8,733.0 557.6,732.9 560.5,732.7 563.3,732.6 566.1,732.4 568.9,732.2 571.8,732.0 574.6,731.8 577.4,731.5 580.2,731.3 583.0,731.0 585.8,730.7 588.6,730.4 591.4,730.1 594.1,729.8 596.9,729.4 599.7,729.0 602.5,728.7 605.2,728.3 608.0,727.9 610.7,727.4 613.4,727.0 616.2,726.6 618.9,726.1 621.6,725.6 624.3,725.1 627.0,724.6 629.7,724.1 632.3,723.5 635.0,723.0 637.7,722.4 640.3,721.8 642.9,721.2 645.6,720.6 648.2,720.0 650.8,719.4 653.4,718.7 655.9,718.0 658.5,717.4 661.1,716.7 663.6,716.0 666.1,715.3 668.6,714.5 671.1,713.8 673.6,713.0 676.1,712.2 678.6,711.5 681.0,710.7 683.4,709.8 685.9,709.0 688.3,708.2 690.6,707.3 693.0,706.5 695.4,705.6 697.7,704.7 700.0,703.8 702.3,702.9 704.6,702.0 706.9,701.1 709.2,700.1 711.4,699.2 713.6,698.2 715.9,697.2 718.0,696.2 720.2,695.2 722.4,694.2 724.5,693.2 726.6,692.2 728.7,691.1 730.8,690.1 732.9,689.0 734.9,687.9 736.9,686.9 738.9,685.8 740.9,684.7 742.9,683.6 744.8,682.4 746.8,681.3 748.7,680.2 750.6,679.0 752.4,677.9 754.3,676.7 756.1,675.5 757.9,674.3 759.7,673.1 761.5,671.9 763.2,670.7 764.9,669.5 766.6,668.3 768.3,667.1 770.0,665.8 771.6,664.6 773.2,663.3 774.8,662.1 776.4,660.8 777.9,659.5 779.5,658.2 781.0,656.9 782.4,655.7 783.9,654.4ZM727.8,636.5 726.6,637.5 725.4,638.5 724.2,639.5 722.9,640.5 721.7,641.4 720.4,642.4 719.1,643.4 717.8,644.3 716.5,645.3 715.2,646.2 713.9,647.1 712.5,648.1 711.1,649.0 709.7,649.9 708.3,650.8 706.9,651.7 705.5,652.6 704.0,653.5 702.5,654.3 701.1,655.2 699.6,656.1 698.0,656.9 696.5,657.8 695.0,658.6 693.4,659.5 691.9,660.3 690.3,661.1 688.7,661.9 687.1,662.7 685.4,663.5 683.8,664.3 682.1,665.1 680.5,665.9 678.8,666.6 677.1,667.4 675.4,668.1 673.7,668.9 672.0,669.6 670.2,670.3 668.5,671.0 666.7,671.7 664.9,672.4 663.1,673.1 661.3,673.8 659.5,674.5 657.7,675.1 655.8,675.8 654.0,676.4 652.1,677.0 650.3,677.6 648.4,678.3 646.5,678.9 644.6,679.4 642.7,680.0 640.8,680.6 638.8,681.2 636.9,681.7 634.9,682.2 633.0,682.8 631.0,683.3 629.0,683.8 627.1,684.3 625.1,684.8 623.1,685.3 621.0,685.7 619.0,686.2 617.0,686.6 615.0,687.1 612.9,687.5 610.9,687.9 608.8,688.3 606.8,688.7 604.7,689.1 602.6,689.5 600.5,689.8 598.5,690.2 596.4,690.5 594.3,690.8 592.2,691.2 590.0,691.5 587.9,691.8 585.8,692.0 583.7,692.3 581.6,692.6 579.4,692.8 577.3,693.1 575.2,693.3 573.0,693.5 570.9,693.7 568.7,693.9 566.6,694.1 564.4,694.2 562.3,694.4 560.1,694.5 557.9,694.7 555.8,694.8 553.6,694.9 551.4,695.0 549.3,695.1 547.1,695.2 544.9,695.2 542.8,695.3 540.6,695.3 538.4,695.3 536.3,695.4 534.1,695.4 531.9,695.4 529.7,695.3 527.6,695.3 525.4,695.3 523.2,695.2 521.1,695.1 518.9,695.1 516.8,695.0 514.6,694.9 512.4,694.8 510.3,694.6 508.1,694.5 506.0,694.3 503.8,694.2 501.7,694.0 499.6,693.8 497.4,693.6 495.3,693.4 493.2,693.2 491.1,693.0 488.9,692.7 486.8,692.5 484.7,692.2 482.6,692.0 480.5,691.7 478.4,691.4 476.4,691.1 474.3,690.8 472.2,690.4 470.1,690.1 468.1,689.7 466.0,689.4 464.0,689.0 462.0,688.6 459.9,688.2 457.9,687.8 455.9,687.4 453.9,687.0 451.9,686.5 449.9,686.1 447.9,685.6 446.0,685.1 444.0,684.6 442.0,684.2 440.1,683.7 438.2,683.1 436.2,682.6 434.3,682.1 432.4,681.5 430.5,681.0 428.6,680.4 426.8,679.8 424.9,679.3 423.1,678.7 421.2,678.1 419.4,677.5 417.6,676.8 415.8,676.2 414.0,675.6 412.2,674.9 410.4,674.2 408.7,673.6 406.9,672.9 405.2,672.2 403.5,671.5 401.8,670.8 400.1,670.1 398.4,669.4 396.7,668.6 395.0,667.9 393.4,667.1 391.8,666.4 390.2,665.6 388.6,664.8 387.0,664.1 385.4,663.3 383.8,662.5 382.3,661.7 380.8,660.8 379.3,660.0 377.8,659.2 376.3,658.3 374.8,657.5 373.3,656.6 371.9,655.8 370.5,654.9 369.1,654.0 367.7,653.2 366.3,652.3 364.9,651.4 363.6,650.5 362.3,649.6 360.9,648.6 359.6,647.7 358.4,646.8 357.1,645.9 355.8,644.9 354.6,644.0 353.4,643.0 352.2,642.1 351.0,641.1 349.8,640.1 348.7,639.1 347.6,638.2 346.4,637.2 345.3,636.2 344.3,635.2 343.2,634.2 342.2,633.2 341.1,632.2 340.1,631.1 339.1,630.1 338.1,629.1 337.2,628.1 336.2,627.0 335.3,626.0 334.4,624.9 333.5,623.9 332.6,622.8 331.8,621.8 330.9,620.7 330.1,619.6 329.3,618.6 328.5,617.5 327.8,616.4 327.0,615.3 326.3,614.3 325.6,613.2 324.9,612.1 324.2,611.0 323.6,609.9 322.9,608.8 322.3,607.7 321.7,606.6 321.1,605.5 320.5,604.4 320.0,603.3 319.5,602.2 319.0,601.1 318.5,599.9 318.0,598.8 317.5,597.7 317.1,596.6 316.7,595.5 316.3,594.3 315.9,593.2 315.5,592.1 315.2,591.0 314.8,589.8 314.5,588.7 314.2,587.6 313.9,586.4 313.7,585.3 313.4,584.2 313.2,583.1 313.0,581.9 312.8,580.8 312.7,579.6 312.5,578.5 312.4,577.4 312.3,576.2 312.2,575.1 312.1,574.0 312.0,572.8 312.0,571.7 312.0,570.6 311.9,569.4 312.0,568.3 312.0,567.2 312.0,566.1 312.1,564.9 312.2,563.8 312.3,562.7 312.4,561.5 312.5,560.4 312.6,559.3 312.8,558.2 313.0,557.1 313.2,555.9 313.4,554.8 313.6,553.7 313.9,552.6 314.2,551.5 314.4,550.4 314.7,549.3 315.1,548.2 315.4,547.1 315.7,546.0 316.1,544.9 316.5,543.8 316.9,542.7 317.3,541.6 317.7,540.5 318.2,539.4 318.6,538.3 319.1,537.2 319.6,536.2 320.1,535.1 320.7,534.0 321.2,532.9 321.8,531.9 322.3,530.8 322.9,529.8 323.5,528.7 324.1,527.7 324.8,526.6 325.4,525.6 326.1,524.5 326.8,523.5 327.5,522.5 328.2,521.4 328.9,520.4 329.6,519.4 330.4,518.4 331.2,517.4 331.9,516.4 332.7,515.4 333.6,514.4 334.4,513.4 335.2,512.4 336.1,511.4 336.9,510.4 337.8,509.4 338.7,508.5 339.6,507.5 340.5,506.5 341.5,505.6 342.4,504.6 343.4,503.7 344.4,502.7 345.4,501.8 346.4,500.9 347.4,499.9 348.4,499.0 349.4,498.1 350.5,497.2 351.6,496.3 352.6,495.4 353.7,494.5 354.8,493.6 355.9,492.7 357.1,491.9 358.2,491.0 359.3,490.1 360.5,489.3 361.7,488.4 362.9,487.6 364.1,486.7 365.3,485.9 366.5,485.0 367.7,484.2 369.0,483.4 370.2,482.6 371.5,481.8 372.7,481.0 374.0,480.2 375.3,479.4 376.6,478.6 377.9,477.9 379.3,477.1 380.6,476.3 381.9,475.6 383.3,474.8 384.7,474.1 386.0,473.4 387.4,472.6 388.8,471.9 390.2,471.2 391.6,470.5 393.0,469.8 394.5,469.1 395.9,468.4 397.4,467.7 398.8,467.1 400.3,466.4 401.8,465.7 403.2,465.1 404.7,464.4 406.2,463.8 407.7,463.2 409.3,462.5 410.8,461.9 412.3,461.3 413.9,460.7 415.4,460.1 417.0,459.5 418.5,459.0 420.1,458.4 421.7,457.8 423.2,457.3 424.8,456.7 426.4,456.2 428.0,455.6 429.6,455.1 431.3,454.6 432.9,454.1 434.5,453.6 436.1,453.1 437.8,452.6 439.4,452.1 441.1,451.6 442.7,451.1 444.4,450.7 446.1,450.2 447.8,449.8 449.4,449.4 451.1,448.9 452.8,448.5 454.5,448.1 456.2,447.7 457.9,447.3 459.6,446.9 461.4,446.5 463.1,446.1 464.8,445.8 466.5,445.4 468.3,445.1 470.0,444.7 471.8,444.4 473.5,444.1 475.2,443.7 477.0,443.4 478.8,443.1 480.5,442.8 482.3,442.5 484.1,442.3 485.8,442.0 487.6,441.7 489.4,441.5 491.2,441.2 492.9,441.0 494.7,440.8 496.5,440.5 498.3,440.3 500.1,440.1 501.9,439.9 503.7,439.7 505.5,439.6 507.3,439.4 509.1,439.2 510.9,439.1 512.7,438.9 514.5,438.8 516.3,438.6 518.1,438.5 519.9,438.4 521.8,438.3 523.6,438.2 525.4,438.1 527.2,438.0 529.0,437.9 530.8,437.9 532.7,437.8 534.5,437.8 536.3,437.7 538.1,437.7 539.9,437.7 541.7,437.6 543.6,437.6 545.4,437.6 547.2,437.6 549.0,437.7 550.8,437.7 552.6,437.7 554.5,437.7 556.3,437.8 558.1,437.9 559.9,437.9 561.7,438.0 563.5,438.1 565.3,438.2 567.1,438.3 568.9,438.4 570.7,438.5 572.5,438.6 574.3,438.7 576.1,438.9 577.9,439.0 579.7,439.2 581.5,439.3 583.3,439.5 585.1,439.7 586.9,439.9 588.6,440.1 590.4,440.3 592.2,440.5 594.0,440.7 595.7,440.9 597.5,441.2 599.3,441.4 601.0,441.7 602.8,441.9 604.5,442.2 606.3,442.5 608.0,442.7 609.7,443.0 611.5,443.3 613.2,443.6 614.9,444.0 616.6,444.3 618.4,444.6 620.1,445.0 621.8,445.3 623.5,445.7 625.2,446.0 626.9,446.4 628.6,446.8 630.2,447.2 631.9,447.5 633.6,448.0 635.3,448.4 636.9,448.8 638.6,449.2 640.2,449.6 641.9,450.1 643.5,450.5 645.1,451.0 646.7,451.5 648.4,451.9 650.0,452.4 651.6,452.9 653.2,453.4 654.8,453.9 656.3,454.4 657.9,454.9 659.5,455.4 661.0,456.0 662.6,456.5 664.1,457.1 665.7,457.6 667.2,458.2 668.7,458.7 670.3,459.3 671.8,459.9 673.3,460.5 674.8,461.1 676.2,461.7 677.7,462.3 679.2,462.9 680.6,463.6 682.1,464.2 683.5,464.8 685.0,465.5 686.4,466.1 687.8,466.8 689.2,467.5 690.6,468.2 692.0,468.8 693.4,469.5 694.7,470.2 696.1,470.9 697.4,471.6 698.8,472.4 700.1,473.1 701.4,473.8 702.7,474.5 704.0,475.3 705.3,476.0 706.6,476.8 707.8,477.6 709.1,478.3 710.3,479.1 711.6,479.9 712.8,480.7 714.0,481.5 715.2,482.3 716.4,483.1 717.6,483.9 718.7,484.7 719.9,485.5 721.0,486.4 722.2,487.2 723.3,488.1 724.4,488.9 725.5,489.8 726.6,490.6 727.7,491.5 728.7,492.4 729.8,493.2 730.8,494.1 731.8,495.0 732.8,495.9 733.8,496.8 734.8,497.7 735.8,498.6 736.7,499.6 737.7,500.5 738.6,501.4 739.5,502.3 740.4,503.3 741.3,504.2 742.2,505.2 743.1,506.1 743.9,507.1 744.7,508.0 745.6,509.0 746.4,510.0 747.2,511.0 747.9,511.9 748.7,512.9 749.5,513.9 750.2,514.9 750.9,515.9 751.6,516.9 752.3,517.9 753.0,518.9 753.7,519.9 754.3,521.0 754.9,522.0 755.6,523.0 756.2,524.0 756.7,525.1 757.3,526.1 757.9,527.2 758.4,528.2 758.9,529.3 759.5,530.3 760.0,531.4 760.4,532.4 760.9,533.5 761.3,534.6 761.8,535.6 762.2,536.7 762.6,537.8 763.0,538.9 763.3,540.0 763.7,541.0 764.0,542.1 764.3,543.2 764.6,544.3 764.9,545.4 765.2,546.5 765.5,547.6 765.7,548.7 765.9,549.8 766.1,550.9 766.3,552.0 766.5,553.1 766.6,554.2 766.7,555.4 766.9,556.5 767.0,557.6 767.1,558.7 767.1,559.8 767.2,561.0 767.2,562.1 767.2,563.2 767.2,564.3 767.2,565.5 767.1,566.6 767.1,567.7 767.0,568.8 766.9,570.0 766.8,571.1 766.7,572.2 766.6,573.4 766.4,574.5 766.2,575.6 766.0,576.8 765.8,577.9 765.6,579.0 765.3,580.2 765.1,581.3 764.8,582.4 764.5,583.6 764.1,584.7 763.8,585.8 763.4,586.9 763.1,588.1 762.7,589.2 762.3,590.3 761.8,591.5 761.4,592.6 760.9,593.7 760.4,594.8 759.9,596.0 759.4,597.1 758.9,598.2 758.3,599.3 757.8,600.4 757.2,601.5 756.6,602.6 755.9,603.8 755.3,604.9 754.6,606.0 754.0,607.1 753.3,608.2 752.5,609.3 751.8,610.4 751.1,611.4 750.3,612.5 749.5,613.6 748.7,614.7 747.9,615.8 747.0,616.9 746.2,617.9 745.3,619.0 744.4,620.1 743.5,621.1 742.6,622.2 741.6,623.2 740.7,624.3 739.7,625.3 738.7,626.4 737.7,627.4 736.6,628.4 735.6,629.5 734.5,630.5 733.4,631.5 732.3,632.5 731.2,633.5 730.1,634.6 728.9,635.6Z" fill="#e2ddd0"/>
<path d="M762.1,643.4 763.4,642.2 764.7,641.0 766.0,639.8 767.2,638.6 768.4,637.4 769.6,636.2 770.8,635.0 772.0,633.8 773.1,632.5 774.2,631.3 775.3,630.1 776.4,628.8 777.5,627.6 778.5,626.4 779.5,625.1 780.5,623.8 781.5,622.6 782.4,621.3 783.3,620.1 784.3,618.8 785.1,617.5 786.0,616.3 786.9,615.0 787.7,613.7 788.5,612.4 789.3,611.1 790.0,609.8 790.8,608.6 791.5,607.3 792.2,606.0 792.9,604.7 793.5,603.4 794.2,602.1 794.8,600.8 795.4,599.5 795.9,598.2 796.5,596.9 797.0,595.5 797.5,594.2 798.0,592.9 798.5,591.6 798.9,590.3 799.4,589.0 799.8,587.7 800.1,586.4 800.5,585.0 800.8,583.7 801.2,582.4 801.5,581.1 801.7,579.8 802.0,578.5 802.2,577.2 802.5,575.8 802.6,574.5 802.8,573.2 803.0,571.9 803.1,570.6 803.2,569.3 803.3,568.0 803.4,566.7 803.4,565.3 803.5,564.0 803.5,562.7 803.5,561.4 803.4,560.1 803.4,558.8 803.3,557.5 803.2,556.2 803.1,554.9 803.0,553.6 802.9,552.3 802.7,551.1 802.5,549.8 802.3,548.5 802.1,547.2 801.8,545.9 801.5,544.6 801.3,543.4 801.0,542.1 800.6,540.8 800.3,539.6 799.9,538.3 799.6,537.0 799.2,535.8 798.7,534.5 798.3,533.3 797.8,532.0 797.4,530.8 796.9,529.6 796.4,528.3 795.8,527.1 795.3,525.9 794.7,524.6 794.1,523.4 793.5,522.2 792.9,521.0 792.3,519.8 791.6,518.6 791.0,517.4 790.3,516.2 789.6,515.0 788.8,513.8 788.1,512.6 787.3,511.5 786.6,510.3 785.8,509.1 785.0,508.0 784.1,506.8 783.3,505.7 782.4,504.5 781.5,503.4 780.7,502.2 779.7,501.1 778.8,500.0 777.9,498.9 776.9,497.8 776.0,496.7 775.0,495.6 774.0,494.5 772.9,493.4 771.9,492.3 770.9,491.2 769.8,490.1 768.7,489.1 767.6,488.0 766.5,487.0 765.4,485.9 764.2,484.9 763.1,483.8 761.9,482.8 760.7,481.8 759.5,480.8 758.3,479.8 757.1,478.8 755.9,477.8 754.6,476.8 753.3,475.8 752.1,474.8 750.8,473.9 749.5,472.9 748.1,471.9 746.8,471.0 745.5,470.1 744.1,469.1 742.7,468.2 741.4,467.3 740.0,466.4 738.5,465.5 737.1,464.6 735.7,463.7 734.2,462.8 732.8,461.9 731.3,461.1 729.8,460.2 728.3,459.3 726.8,458.5 725.3,457.7 723.8,456.8 722.3,456.0 720.7,455.2 719.1,454.4 717.6,453.6 716.0,452.8 714.4,452.0 712.8,451.2 711.2,450.5 709.6,449.7 707.9,449.0 706.3,448.2 704.6,447.5 703.0,446.8 701.3,446.0 699.6,445.3 697.9,444.6 696.2,443.9 694.5,443.2 692.8,442.6 691.0,441.9 689.3,441.2 687.5,440.6 685.8,439.9 684.0,439.3 682.3,438.7 680.5,438.1 678.7,437.4 676.9,436.8 675.1,436.3 673.3,435.7 671.4,435.1 669.6,434.5 667.8,434.0 665.9,433.4 664.1,432.9 662.2,432.3 660.4,431.8 658.5,431.3 656.6,430.8 654.7,430.3 652.8,429.8 650.9,429.3 649.0,428.8 647.1,428.4 645.2,427.9 643.3,427.5 641.3,427.0 639.4,426.6 637.5,426.2 635.5,425.8 633.6,425.4 631.6,425.0 629.6,424.6 627.7,424.2 625.7,423.9 623.7,423.5 621.7,423.2 619.7,422.8 617.8,422.5 615.8,422.2 613.8,421.9 611.8,421.6 609.7,421.3 607.7,421.0 605.7,420.7 603.7,420.4 601.7,420.2 599.6,419.9 597.6,419.7 595.6,419.5 593.5,419.3 591.5,419.0 589.5,418.8 587.4,418.7 585.4,418.5 583.3,418.3 581.3,418.1 579.2,418.0 577.1,417.8 575.1,417.7 573.0,417.6 570.9,417.4 568.9,417.3 566.8,417.2 564.7,417.1 562.7,417.1 560.6,417.0 558.5,416.9 556.4,416.9 554.4,416.8 552.3,416.8 550.2,416.8 548.1,416.7 546.1,416.7 544.0,416.7 541.9,416.7 539.8,416.8 537.7,416.8 535.7,416.8 533.6,416.9 531.5,416.9 529.4,417.0 527.3,417.1 525.3,417.2 523.2,417.3 521.1,417.4 519.0,417.5 517.0,417.6 514.9,417.7 512.8,417.9 510.7,418.0 508.7,418.2 506.6,418.3 504.5,418.5 502.5,418.7 500.4,418.9 498.4,419.1 496.3,419.3 494.2,419.5 492.2,419.8 490.1,420.0 488.1,420.3 486.0,420.5 484.0,420.8 482.0,421.1 479.9,421.4 477.9,421.7 475.9,422.0 473.8,422.3 471.8,422.6 469.8,422.9 467.8,423.3 465.8,423.6 463.8,424.0 461.8,424.3 459.8,424.7 457.8,425.1 455.8,425.5 453.8,425.9 451.8,426.3 449.8,426.7 447.9,427.2 445.9,427.6 443.9,428.1 442.0,428.5 440.0,429.0 438.1,429.5 436.2,429.9 434.2,430.4 432.3,430.9 430.4,431.5 428.5,432.0 426.6,432.5 424.6,433.0 422.8,433.6 420.9,434.1 419.0,434.7 417.1,435.3 415.2,435.9 413.4,436.4 411.5,437.0 409.7,437.6 407.8,438.3 406.0,438.9 404.2,439.5 402.4,440.1 400.6,440.8 398.8,441.5 397.0,442.1 395.2,442.8 393.4,443.5 391.6,444.2 389.9,444.9 388.1,445.6 386.4,446.3 384.7,447.0 382.9,447.7 381.2,448.5 379.5,449.2 377.8,450.0 376.2,450.7 374.5,451.5 372.8,452.3 371.2,453.1 369.5,453.9 367.9,454.7 366.3,455.5 364.6,456.3 363.0,457.1 361.4,458.0 359.9,458.8 358.3,459.6 356.7,460.5 355.2,461.4 353.6,462.2 352.1,463.1 350.6,464.0 349.1,464.9 347.6,465.8 346.1,466.7 344.6,467.6 343.2,468.5 341.7,469.5 340.3,470.4 338.9,471.4 337.5,472.3 336.1,473.3 334.7,474.2 333.3,475.2 332.0,476.2 330.6,477.2 329.3,478.2 328.0,479.2 326.7,480.2 325.4,481.2 324.1,482.2 322.9,483.2 321.6,484.2 320.4,485.3 319.2,486.3 318.0,487.4 316.8,488.4 315.6,489.5 314.4,490.6 313.3,491.6 312.2,492.7 311.0,493.8 309.9,494.9 308.8,496.0 307.8,497.1 306.7,498.2 305.7,499.3 304.7,500.5 303.6,501.6 302.6,502.7 301.7,503.9 300.7,505.0 299.8,506.2 298.8,507.3 297.9,508.5 297.0,509.6 296.1,510.8 295.3,512.0 294.4,513.2 293.6,514.3 292.8,515.5 292.0,516.7 291.2,517.9 290.4,519.1 289.7,520.3 289.0,521.5 288.3,522.8 287.6,524.0 286.9,525.2 286.2,526.4 285.6,527.7 285.0,528.9 284.4,530.1 283.8,531.4 283.2,532.6 282.7,533.9 282.1,535.1 281.6,536.4 281.1,537.6 280.7,538.9 280.2,540.2 279.8,541.4 279.3,542.7 278.9,544.0 278.6,545.3 278.2,546.6 277.9,547.8 277.5,549.1 277.2,550.4 277.0,551.7 276.7,553.0 276.5,554.3 276.2,555.6 276.0,556.9 275.8,558.2 275.7,559.5 275.5,560.8 275.4,562.1 275.3,563.4 275.2,564.7 275.2,566.0 275.1,567.3 275.1,568.7 275.1,570.0 275.1,571.3 275.2,572.6 275.2,573.9 275.3,575.2 275.4,576.6 275.5,577.9 275.7,579.2 275.8,580.5 276.0,581.8 276.2,583.1 276.4,584.5 276.7,585.8 277.0,587.1 277.2,588.4 277.6,589.7 277.9,591.0 278.2,592.4 278.6,593.7 279.0,595.0 279.4,596.3 279.9,597.6 280.3,598.9 280.8,600.2 281.3,601.5 281.8,602.8 282.4,604.1 282.9,605.4 283.5,606.7 284.1,608.0 284.8,609.3 285.4,610.6 286.1,611.9 286.8,613.2 287.5,614.5 288.2,615.7 289.0,617.0 289.8,618.3 290.6,619.6 291.4,620.8 292.2,622.1 293.1,623.4 294.0,624.6 294.9,625.9 295.8,627.1 296.8,628.4 297.7,629.6 298.7,630.8 299.7,632.1 300.8,633.3 301.8,634.5 302.9,635.7 304.0,636.9 305.1,638.2 306.2,639.4 307.4,640.6 308.6,641.7 309.8,642.9 311.0,644.1 312.2,645.3 313.5,646.5 314.8,647.6 316.1,648.8 317.4,649.9 318.7,651.1 320.1,652.2 321.5,653.3 322.9,654.5 324.3,655.6 325.7,656.7 327.2,657.8 328.7,658.9 330.2,660.0 331.7,661.1 333.2,662.1 334.8,663.2 336.4,664.3 338.0,665.3 339.6,666.3 341.2,667.4 342.9,668.4 344.5,669.4 346.2,670.4 347.9,671.4 349.6,672.4 351.4,673.4 353.1,674.4 354.9,675.3 356.7,676.3 358.5,677.2 360.4,678.2 362.2,679.1 364.1,680.0 366.0,680.9 367.8,681.8 369.8,682.7 371.7,683.6 373.6,684.5 375.6,685.3 377.6,686.2 379.6,687.0 381.6,687.8 383.6,688.7 385.6,689.5 387.7,690.3 389.8,691.0 391.8,691.8 393.9,692.6 396.1,693.3 398.2,694.1 400.3,694.8 402.5,695.5 404.6,696.2 406.8,696.9 409.0,697.6 411.2,698.3 413.4,698.9 415.7,699.6 417.9,700.2 420.2,700.8 422.4,701.4 424.7,702.0 427.0,702.6 429.3,703.2 431.6,703.8 433.9,704.3 436.3,704.8 438.6,705.4 441.0,705.9 443.3,706.4 445.7,706.9 448.1,707.3 450.5,707.8 452.9,708.2 455.3,708.7 457.7,709.1 460.1,709.5 462.6,709.9 465.0,710.3 467.5,710.6 469.9,711.0 472.4,711.3 474.8,711.6 477.3,712.0 479.8,712.3 482.3,712.5 484.8,712.8 487.3,713.1 489.8,713.3 492.3,713.5 494.8,713.8 497.3,714.0 499.9,714.2 502.4,714.3 504.9,714.5 507.5,714.6 510.0,714.8 512.5,714.9 515.1,715.0 517.6,715.1 520.2,715.2 522.7,715.2 525.3,715.3 527.8,715.3 530.4,715.4 532.9,715.4 535.5,715.4 538.0,715.3 540.6,715.3 543.1,715.3 545.7,715.2 548.3,715.1 550.8,715.0 553.4,714.9 555.9,714.8 558.5,714.7 561.0,714.5 563.5,714.4 566.1,714.2 568.6,714.0 571.2,713.8 573.7,713.6 576.2,713.4 578.8,713.1 581.3,712.9 583.8,712.6 586.3,712.3 588.8,712.0 591.3,711.7 593.8,711.4 596.3,711.1 598.8,710.7 601.3,710.4 603.7,710.0 606.2,709.6 608.7,709.2 611.1,708.8 613.6,708.3 616.0,707.9 618.4,707.5 620.8,707.0 623.3,706.5 625.7,706.0 628.1,705.5 630.4,705.0 632.8,704.5 635.2,703.9 637.5,703.4 639.9,702.8 642.2,702.2 644.6,701.6 646.9,701.0 649.2,700.4 651.5,699.8 653.8,699.1 656.0,698.5 658.3,697.8 660.6,697.1 662.8,696.4 665.0,695.7 667.2,695.0 669.4,694.3 671.6,693.5 673.8,692.8 676.0,692.0 678.1,691.3 680.2,690.5 682.4,689.7 684.5,688.9 686.5,688.1 688.6,687.3 690.7,686.4 692.7,685.6 694.8,684.7 696.8,683.9 698.8,683.0 700.8,682.1 702.7,681.2 704.7,680.3 706.6,679.4 708.6,678.5 710.5,677.5 712.4,676.6 714.2,675.7 716.1,674.7 717.9,673.7 719.8,672.7 721.6,671.8 723.4,670.8 725.1,669.8 726.9,668.7 728.6,667.7 730.3,666.7 732.0,665.7 733.7,664.6 735.4,663.6 737.0,662.5 738.7,661.4 740.3,660.3 741.9,659.3 743.4,658.2 745.0,657.1 746.5,656.0 748.0,654.8 749.5,653.7 751.0,652.6 752.5,651.5 753.9,650.3 755.3,649.2 756.7,648.0 758.1,646.9 759.5,645.7 760.8,644.5ZM754.4,643.5 753.1,644.7 751.7,645.8 750.4,646.9 749.0,648.0 747.6,649.1 746.1,650.2 744.7,651.3 743.2,652.4 741.7,653.5 740.2,654.6 738.7,655.7 737.2,656.7 735.6,657.8 734.0,658.8 732.5,659.9 730.8,660.9 729.2,661.9 727.6,663.0 725.9,664.0 724.2,665.0 722.5,666.0 720.8,667.0 719.1,667.9 717.3,668.9 715.6,669.9 713.8,670.8 712.0,671.8 710.2,672.7 708.3,673.6 706.5,674.6 704.6,675.5 702.7,676.4 700.8,677.3 698.9,678.1 697.0,679.0 695.0,679.9 693.1,680.7 691.1,681.6 689.1,682.4 687.1,683.2 685.1,684.0 683.1,684.8 681.0,685.6 679.0,686.4 676.9,687.2 674.8,687.9 672.7,688.7 670.6,689.4 668.5,690.2 666.4,690.9 664.2,691.6 662.0,692.3 659.9,693.0 657.7,693.6 655.5,694.3 653.3,694.9 651.1,695.6 648.8,696.2 646.6,696.8 644.3,697.4 642.1,698.0 639.8,698.6 637.5,699.1 635.2,699.7 632.9,700.2 630.6,700.8 628.3,701.3 626.0,701.8 623.6,702.3 621.3,702.8 618.9,703.2 616.5,703.7 614.2,704.1 611.8,704.6 609.4,705.0 607.0,705.4 604.6,705.8 602.2,706.2 599.8,706.5 597.4,706.9 594.9,707.2 592.5,707.5 590.1,707.9 587.6,708.2 585.2,708.5 582.7,708.7 580.3,709.0 577.8,709.2 575.4,709.5 572.9,709.7 570.4,709.9 567.9,710.1 565.5,710.3 563.0,710.4 560.5,710.6 558.0,710.7 555.5,710.9 553.0,711.0 550.6,711.1 548.1,711.2 545.6,711.2 543.1,711.3 540.6,711.3 538.1,711.4 535.6,711.4 533.1,711.4 530.6,711.4 528.1,711.4 525.6,711.3 523.1,711.3 520.6,711.2 518.2,711.1 515.7,711.1 513.2,710.9 510.7,710.8 508.2,710.7 505.8,710.6 503.3,710.4 500.8,710.2 498.4,710.0 495.9,709.8 493.5,709.6 491.0,709.4 488.6,709.2 486.1,708.9 483.7,708.7 481.3,708.4 478.8,708.1 476.4,707.8 474.0,707.5 471.6,707.1 469.2,706.8 466.8,706.4 464.4,706.1 462.1,705.7 459.7,705.3 457.3,704.9 455.0,704.4 452.6,704.0 450.3,703.6 448.0,703.1 445.7,702.6 443.3,702.2 441.0,701.7 438.8,701.1 436.5,700.6 434.2,700.1 432.0,699.5 429.7,699.0 427.5,698.4 425.2,697.8 423.0,697.2 420.8,696.6 418.6,696.0 416.5,695.4 414.3,694.7 412.1,694.1 410.0,693.4 407.9,692.8 405.8,692.1 403.6,691.4 401.6,690.7 399.5,689.9 397.4,689.2 395.4,688.5 393.3,687.7 391.3,686.9 389.3,686.2 387.3,685.4 385.3,684.6 383.4,683.8 381.4,683.0 379.5,682.1 377.6,681.3 375.7,680.5 373.8,679.6 371.9,678.7 370.1,677.9 368.2,677.0 366.4,676.1 364.6,675.2 362.8,674.3 361.0,673.3 359.3,672.4 357.5,671.5 355.8,670.5 354.1,669.6 352.4,668.6 350.8,667.6 349.1,666.6 347.5,665.6 345.9,664.7 344.3,663.6 342.7,662.6 341.1,661.6 339.6,660.6 338.1,659.5 336.6,658.5 335.1,657.4 333.6,656.4 332.2,655.3 330.7,654.2 329.3,653.1 327.9,652.1 326.6,651.0 325.2,649.9 323.9,648.7 322.6,647.6 321.3,646.5 320.0,645.4 318.7,644.2 317.5,643.1 316.3,642.0 315.1,640.8 313.9,639.7 312.7,638.5 311.6,637.3 310.5,636.1 309.4,635.0 308.3,633.8 307.3,632.6 306.2,631.4 305.2,630.2 304.2,629.0 303.3,627.8 302.3,626.6 301.4,625.4 300.5,624.2 299.6,622.9 298.7,621.7 297.9,620.5 297.0,619.2 296.2,618.0 295.4,616.8 294.7,615.5 293.9,614.3 293.2,613.0 292.5,611.8 291.8,610.5 291.2,609.3 290.5,608.0 289.9,606.7 289.3,605.5 288.7,604.2 288.2,602.9 287.6,601.7 287.1,600.4 286.6,599.1 286.1,597.8 285.7,596.6 285.3,595.3 284.8,594.0 284.4,592.7 284.1,591.4 283.7,590.1 283.4,588.9 283.1,587.6 282.8,586.3 282.5,585.0 282.3,583.7 282.1,582.4 281.9,581.1 281.7,579.8 281.5,578.6 281.4,577.3 281.2,576.0 281.1,574.7 281.1,573.4 281.0,572.1 280.9,570.8 280.9,569.6 280.9,568.3 280.9,567.0 281.0,565.7 281.0,564.4 281.1,563.1 281.2,561.9 281.3,560.6 281.5,559.3 281.6,558.0 281.8,556.8 282.0,555.5 282.2,554.2 282.4,553.0 282.7,551.7 282.9,550.4 283.2,549.2 283.5,547.9 283.9,546.6 284.2,545.4 284.6,544.1 285.0,542.9 285.4,541.6 285.8,540.4 286.2,539.2 286.7,537.9 287.2,536.7 287.7,535.5 288.2,534.2 288.7,533.0 289.3,531.8 289.8,530.6 290.4,529.4 291.0,528.2 291.6,526.9 292.3,525.7 292.9,524.5 293.6,523.4 294.3,522.2 295.0,521.0 295.7,519.8 296.5,518.6 297.2,517.4 298.0,516.3 298.8,515.1 299.6,514.0 300.4,512.8 301.3,511.6 302.1,510.5 303.0,509.4 303.9,508.2 304.8,507.1 305.7,506.0 306.7,504.8 307.6,503.7 308.6,502.6 309.6,501.5 310.6,500.4 311.6,499.3 312.6,498.2 313.7,497.2 314.7,496.1 315.8,495.0 316.9,493.9 318.0,492.9 319.1,491.8 320.3,490.8 321.4,489.7 322.6,488.7 323.8,487.7 324.9,486.6 326.2,485.6 327.4,484.6 328.6,483.6 329.8,482.6 331.1,481.6 332.4,480.6 333.7,479.7 335.0,478.7 336.3,477.7 337.6,476.8 338.9,475.8 340.3,474.9 341.7,473.9 343.0,473.0 344.4,472.1 345.8,471.1 347.2,470.2 348.7,469.3 350.1,468.4 351.5,467.5 353.0,466.6 354.5,465.8 355.9,464.9 357.4,464.0 358.9,463.2 360.5,462.3 362.0,461.5 363.5,460.7 365.1,459.8 366.6,459.0 368.2,458.2 369.8,457.4 371.4,456.6 373.0,455.8 374.6,455.0 376.2,454.3 377.8,453.5 379.5,452.8 381.1,452.0 382.8,451.3 384.4,450.5 386.1,449.8 387.8,449.1 389.5,448.4 391.2,447.7 392.9,447.0 394.6,446.3 396.4,445.6 398.1,445.0 399.8,444.3 401.6,443.6 403.4,443.0 405.1,442.4 406.9,441.7 408.7,441.1 410.5,440.5 412.3,439.9 414.1,439.3 415.9,438.7 417.7,438.1 419.6,437.6 421.4,437.0 423.2,436.5 425.1,435.9 427.0,435.4 428.8,434.9 430.7,434.3 432.6,433.8 434.4,433.3 436.3,432.8 438.2,432.4 440.1,431.9 442.0,431.4 443.9,431.0 445.9,430.5 447.8,430.1 449.7,429.6 451.6,429.2 453.6,428.8 455.5,428.4 457.4,428.0 459.4,427.6 461.4,427.2 463.3,426.9 465.3,426.5 467.2,426.1 469.2,425.8 471.2,425.5 473.2,425.1 475.1,424.8 477.1,424.5 479.1,424.2 481.1,423.9 483.1,423.6 485.1,423.4 487.1,423.1 489.1,422.8 491.1,422.6 493.1,422.4 495.1,422.1 497.2,421.9 499.2,421.7 501.2,421.5 503.2,421.3 505.2,421.1 507.3,421.0 509.3,420.8 511.3,420.6 513.4,420.5 515.4,420.4 517.4,420.2 519.4,420.1 521.5,420.0 523.5,419.9 525.6,419.8 527.6,419.7 529.6,419.6 531.7,419.6 533.7,419.5 535.7,419.5 537.8,419.4 539.8,419.4 541.9,419.4 543.9,419.4 545.9,419.4 548.0,419.4 550.0,419.4 552.1,419.4 554.1,419.5 556.1,419.5 558.2,419.6 560.2,419.6 562.2,419.7 564.3,419.8 566.3,419.9 568.3,420.0 570.3,420.1 572.4,420.2 574.4,420.3 576.4,420.4 578.4,420.6 580.4,420.7 582.5,420.9 584.5,421.1 586.5,421.3 588.5,421.4 590.5,421.6 592.5,421.9 594.5,422.1 596.5,422.3 598.5,422.5 600.5,422.8 602.4,423.0 604.4,423.3 606.4,423.6 608.4,423.8 610.3,424.1 612.3,424.4 614.3,424.7 616.2,425.0 618.2,425.4 620.1,425.7 622.1,426.0 624.0,426.4 625.9,426.7 627.9,427.1 629.8,427.5 631.7,427.9 633.6,428.3 635.5,428.7 637.4,429.1 639.3,429.5 641.2,429.9 643.1,430.4 645.0,430.8 646.9,431.3 648.7,431.7 650.6,432.2 652.4,432.7 654.3,433.2 656.1,433.7 658.0,434.2 659.8,434.7 661.6,435.2 663.4,435.8 665.2,436.3 667.0,436.8 668.8,437.4 670.6,438.0 672.4,438.5 674.2,439.1 675.9,439.7 677.7,440.3 679.4,440.9 681.1,441.5 682.9,442.2 684.6,442.8 686.3,443.4 688.0,444.1 689.7,444.7 691.4,445.4 693.1,446.1 694.7,446.8 696.4,447.4 698.0,448.1 699.7,448.9 701.3,449.6 702.9,450.3 704.5,451.0 706.1,451.8 707.7,452.5 709.3,453.3 710.9,454.0 712.4,454.8 714.0,455.6 715.5,456.3 717.0,457.1 718.6,457.9 720.1,458.7 721.6,459.5 723.0,460.4 724.5,461.2 726.0,462.0 727.4,462.9 728.9,463.7 730.3,464.6 731.7,465.5 733.1,466.3 734.5,467.2 735.9,468.1 737.2,469.0 738.6,469.9 739.9,470.8 741.3,471.7 742.6,472.6 743.9,473.6 745.2,474.5 746.5,475.4 747.7,476.4 749.0,477.3 750.2,478.3 751.4,479.3 752.6,480.2 753.8,481.2 755.0,482.2 756.2,483.2 757.3,484.2 758.5,485.2 759.6,486.2 760.7,487.3 761.8,488.3 762.9,489.3 764.0,490.4 765.0,491.4 766.1,492.4 767.1,493.5 768.1,494.6 769.1,495.6 770.1,496.7 771.0,497.8 772.0,498.9 772.9,500.0 773.8,501.0 774.7,502.2 775.6,503.3 776.5,504.4 777.3,505.5 778.2,506.6 779.0,507.7 779.8,508.9 780.6,510.0 781.4,511.1 782.1,512.3 782.9,513.4 783.6,514.6 784.3,515.8 785.0,516.9 785.6,518.1 786.3,519.3 786.9,520.4 787.6,521.6 788.2,522.8 788.7,524.0 789.3,525.2 789.9,526.4 790.4,527.6 790.9,528.8 791.4,530.0 791.9,531.2 792.3,532.4 792.8,533.7 793.2,534.9 793.6,536.1 794.0,537.3 794.4,538.6 794.7,539.8 795.0,541.0 795.3,542.3 795.6,543.5 795.9,544.8 796.2,546.0 796.4,547.3 796.6,548.5 796.8,549.8 797.0,551.0 797.2,552.3 797.3,553.6 797.4,554.8 797.5,556.1 797.6,557.4 797.7,558.6 797.7,559.9 797.7,561.2 797.7,562.5 797.7,563.7 797.7,565.0 797.6,566.3 797.6,567.6 797.5,568.9 797.3,570.2 797.2,571.4 797.0,572.7 796.9,574.0 796.7,575.3 796.5,576.6 796.2,577.9 796.0,579.1 795.7,580.4 795.4,581.7 795.1,583.0 794.7,584.3 794.4,585.6 794.0,586.9 793.6,588.1 793.2,589.4 792.7,590.7 792.3,592.0 791.8,593.3 791.3,594.5 790.8,595.8 790.2,597.1 789.7,598.4 789.1,599.7 788.5,600.9 787.8,602.2 787.2,603.5 786.5,604.7 785.8,606.0 785.1,607.3 784.4,608.5 783.7,609.8 782.9,611.0 782.1,612.3 781.3,613.5 780.4,614.8 779.6,616.0 778.7,617.3 777.8,618.5 776.9,619.7 776.0,621.0 775.0,622.2 774.1,623.4 773.1,624.6 772.0,625.8 771.0,627.1 770.0,628.3 768.9,629.5 767.8,630.7 766.7,631.9 765.5,633.0 764.4,634.2 763.2,635.4 762.0,636.6 760.8,637.8 759.6,638.9 758.3,640.1 757.0,641.2 755.7,642.4Z" fill="url(#grooveg)"/>
<path d="M735.0,632.0 736.1,631.0 737.3,630.0 738.4,628.9 739.5,627.9 740.6,626.8 741.7,625.8 742.7,624.7 743.8,623.7 744.8,622.6 745.8,621.5 746.8,620.4 747.7,619.4 748.7,618.3 749.6,617.2 750.5,616.1 751.4,615.0 752.3,613.9 753.1,612.8 754.0,611.7 754.8,610.6 755.6,609.5 756.4,608.4 757.2,607.2 757.9,606.1 758.6,605.0 759.3,603.9 760.0,602.8 760.7,601.6 761.4,600.5 762.0,599.4 762.6,598.2 763.2,597.1 763.8,595.9 764.4,594.8 764.9,593.7 765.4,592.5 766.0,591.4 766.4,590.2 766.9,589.1 767.4,587.9 767.8,586.8 768.2,585.6 768.6,584.5 769.0,583.3 769.4,582.1 769.7,581.0 770.0,579.8 770.3,578.7 770.6,577.5 770.9,576.4 771.2,575.2 771.4,574.0 771.6,572.9 771.8,571.7 772.0,570.6 772.1,569.4 772.3,568.3 772.4,567.1 772.5,565.9 772.6,564.8 772.7,563.6 772.7,562.5 772.8,561.3 772.8,560.2 772.8,559.0 772.8,557.9 772.7,556.7 772.7,555.6 772.6,554.4 772.5,553.3 772.4,552.2 772.3,551.0 772.1,549.9 772.0,548.7 771.8,547.6 771.6,546.5 771.4,545.3 771.2,544.2 770.9,543.1 770.6,542.0 770.4,540.8 770.1,539.7 769.8,538.6 769.4,537.5 769.1,536.4 768.7,535.3 768.3,534.2 767.9,533.1 767.5,532.0 767.1,530.9 766.6,529.8 766.2,528.7 765.7,527.6 765.2,526.5 764.7,525.4 764.2,524.4 763.6,523.3 763.1,522.2 762.5,521.2 761.9,520.1 761.3,519.0 760.7,518.0 760.0,516.9 759.4,515.9 758.7,514.9 758.0,513.8 757.3,512.8 756.6,511.8 755.9,510.7 755.2,509.7 754.4,508.7 753.6,507.7 752.8,506.7 752.0,505.7 751.2,504.7 750.4,503.7 749.5,502.7 748.7,501.7 747.8,500.8 746.9,499.8 746.0,498.8 745.1,497.9 744.2,496.9 743.2,495.9 742.3,495.0 741.3,494.1 740.3,493.1 739.3,492.2 738.3,491.3 737.3,490.4 736.3,489.4 735.2,488.5 734.2,487.6 733.1,486.7 732.0,485.8 730.9,485.0 729.8,484.1 728.7,483.2 727.5,482.3 726.4,481.5 725.2,480.6 724.1,479.8 722.9,478.9 721.7,478.1 720.5,477.3 719.2,476.5 718.0,475.6 716.8,474.8 715.5,474.0 714.3,473.2 713.0,472.4 711.7,471.6 710.4,470.9 709.1,470.1 707.8,469.3 706.4,468.6 705.1,467.8 703.8,467.1 702.4,466.3 701.0,465.6 699.6,464.9 698.2,464.2 696.8,463.5 695.4,462.8 694.0,462.1 692.6,461.4 691.2,460.7 689.7,460.0 688.2,459.3 686.8,458.7 685.3,458.0 683.8,457.4 682.3,456.7 680.8,456.1 679.3,455.5 677.8,454.9 676.3,454.3 674.7,453.7 673.2,453.1 671.6,452.5 670.1,451.9 668.5,451.3 666.9,450.8 665.3,450.2 663.8,449.7 662.2,449.1 660.6,448.6 658.9,448.1 657.3,447.5 655.7,447.0 654.1,446.5 652.4,446.0 650.8,445.5 649.1,445.1 647.5,444.6 645.8,444.1 644.1,443.7 642.4,443.2 640.7,442.8 639.1,442.3 637.4,441.9 635.7,441.5 633.9,441.1 632.2,440.7 630.5,440.3 628.8,439.9 627.1,439.5 625.3,439.1 623.6,438.8 621.8,438.4 620.1,438.1 618.3,437.7 616.6,437.4 614.8,437.1 613.0,436.8 611.3,436.5 609.5,436.2 607.7,435.9 605.9,435.6 604.1,435.3 602.3,435.1 600.5,434.8 598.7,434.6 596.9,434.3 595.1,434.1 593.3,433.9 591.5,433.7 589.7,433.5 587.9,433.3 586.0,433.1 584.2,432.9 582.4,432.7 580.5,432.5 578.7,432.4 576.9,432.2 575.0,432.1 573.2,432.0 571.4,431.8 569.5,431.7 567.7,431.6 565.8,431.5 564.0,431.4 562.1,431.3 560.3,431.3 558.4,431.2 556.6,431.1 554.7,431.1 552.9,431.1 551.0,431.0 549.1,431.0 547.3,431.0 545.4,431.0 543.6,431.0 541.7,431.0 539.9,431.0 538.0,431.0 536.1,431.1 534.3,431.1 532.4,431.2 530.6,431.2 528.7,431.3 526.8,431.4 525.0,431.5 523.1,431.5 521.3,431.7 519.4,431.8 517.6,431.9 515.7,432.0 513.9,432.1 512.0,432.3 510.2,432.4 508.3,432.6 506.5,432.8 504.6,432.9 502.8,433.1 501.0,433.3 499.1,433.5 497.3,433.7 495.5,433.9 493.6,434.2 491.8,434.4 490.0,434.6 488.2,434.9 486.3,435.2 484.5,435.4 482.7,435.7 480.9,436.0 479.1,436.3 477.3,436.6 475.5,436.9 473.7,437.2 471.9,437.5 470.1,437.9 468.4,438.2 466.6,438.5 464.8,438.9 463.0,439.3 461.3,439.6 459.5,440.0 457.7,440.4 456.0,440.8 454.3,441.2 452.5,441.6 450.8,442.0 449.0,442.5 447.3,442.9 445.6,443.4 443.9,443.8 442.2,444.3 440.5,444.7 438.8,445.2 437.1,445.7 435.4,446.2 433.7,446.7 432.0,447.2 430.4,447.7 428.7,448.2 427.0,448.8 425.4,449.3 423.8,449.8 422.1,450.4 420.5,451.0 418.9,451.5 417.3,452.1 415.7,452.7 414.1,453.3 412.5,453.9 410.9,454.5 409.3,455.1 407.7,455.7 406.2,456.3 404.6,457.0 403.1,457.6 401.6,458.3 400.0,458.9 398.5,459.6 397.0,460.3 395.5,460.9 394.0,461.6 392.5,462.3 391.0,463.0 389.6,463.7 388.1,464.4 386.7,465.2 385.2,465.9 383.8,466.6 382.4,467.4 381.0,468.1 379.6,468.9 378.2,469.6 376.8,470.4 375.5,471.2 374.1,471.9 372.7,472.7 371.4,473.5 370.1,474.3 368.8,475.1 367.5,475.9 366.2,476.8 364.9,477.6 363.6,478.4 362.4,479.3 361.1,480.1 359.9,481.0 358.6,481.8 357.4,482.7 356.2,483.6 355.0,484.4 353.9,485.3 352.7,486.2 351.5,487.1 350.4,488.0 349.3,488.9 348.1,489.8 347.0,490.7 345.9,491.6 344.9,492.6 343.8,493.5 342.7,494.4 341.7,495.4 340.7,496.3 339.7,497.3 338.7,498.3 337.7,499.2 336.7,500.2 335.7,501.2 334.8,502.1 333.8,503.1 332.9,504.1 332.0,505.1 331.1,506.1 330.3,507.1 329.4,508.1 328.5,509.1 327.7,510.2 326.9,511.2 326.1,512.2 325.3,513.2 324.5,514.3 323.8,515.3 323.0,516.4 322.3,517.4 321.6,518.5 320.9,519.5 320.2,520.6 319.5,521.7 318.9,522.7 318.2,523.8 317.6,524.9 317.0,525.9 316.4,527.0 315.8,528.1 315.3,529.2 314.7,530.3 314.2,531.4 313.7,532.5 313.2,533.6 312.7,534.7 312.2,535.8 311.8,536.9 311.4,538.0 310.9,539.2 310.6,540.3 310.2,541.4 309.8,542.5 309.5,543.6 309.1,544.8 308.8,545.9 308.5,547.0 308.3,548.2 308.0,549.3 307.7,550.5 307.5,551.6 307.3,552.7 307.1,553.9 307.0,555.0 306.8,556.2 306.7,557.3 306.5,558.5 306.4,559.6 306.4,560.8 306.3,561.9 306.2,563.1 306.2,564.2 306.2,565.4 306.2,566.6 306.2,567.7 306.3,568.9 306.3,570.0 306.4,571.2 306.5,572.4 306.6,573.5 306.7,574.7 306.9,575.8 307.1,577.0 307.2,578.2 307.4,579.3 307.7,580.5 307.9,581.6 308.2,582.8 308.5,583.9 308.8,585.1 309.1,586.3 309.4,587.4 309.8,588.6 310.1,589.7 310.5,590.9 310.9,592.0 311.4,593.2 311.8,594.3 312.3,595.5 312.8,596.6 313.3,597.7 313.8,598.9 314.3,600.0 314.9,601.1 315.5,602.3 316.0,603.4 316.7,604.5 317.3,605.7 317.9,606.8 318.6,607.9 319.3,609.0 320.0,610.1 320.7,611.2 321.5,612.4 322.2,613.5 323.0,614.6 323.8,615.7 324.6,616.8 325.5,617.8 326.3,618.9 327.2,620.0 328.1,621.1 329.0,622.2 329.9,623.2 330.9,624.3 331.8,625.4 332.8,626.4 333.8,627.5 334.8,628.5 335.9,629.6 336.9,630.6 338.0,631.6 339.1,632.7 340.2,633.7 341.3,634.7 342.5,635.7 343.6,636.7 344.8,637.7 346.0,638.7 347.2,639.7 348.4,640.7 349.7,641.7 350.9,642.6 352.2,643.6 353.5,644.6 354.8,645.5 356.2,646.5 357.5,647.4 358.9,648.3 360.3,649.3 361.6,650.2 363.1,651.1 364.5,652.0 365.9,652.9 367.4,653.8 368.9,654.7 370.4,655.5 371.9,656.4 373.4,657.3 374.9,658.1 376.5,659.0 378.0,659.8 379.6,660.6 381.2,661.4 382.8,662.3 384.5,663.1 386.1,663.9 387.8,664.6 389.4,665.4 391.1,666.2 392.8,666.9 394.5,667.7 396.2,668.4 397.0,668.7 396.7,668.6 395.0,667.9 393.4,667.1 391.8,666.4 390.2,665.6 388.6,664.8 387.0,664.1 385.4,663.3 383.8,662.5 382.3,661.7 380.8,660.8 379.3,660.0 377.8,659.2 376.3,658.3 374.8,657.5 373.3,656.6 371.9,655.8 370.5,654.9 369.1,654.0 367.7,653.2 366.3,652.3 364.9,651.4 363.6,650.5 362.3,649.6 360.9,648.6 359.6,647.7 358.4,646.8 357.1,645.9 355.8,644.9 354.6,644.0 353.4,643.0 352.2,642.1 351.0,641.1 349.8,640.1 348.7,639.1 347.6,638.2 346.4,637.2 345.3,636.2 344.3,635.2 343.2,634.2 342.2,633.2 341.1,632.2 340.1,631.1 339.1,630.1 338.1,629.1 337.2,628.1 336.2,627.0 335.3,626.0 334.4,624.9 333.5,623.9 332.6,622.8 331.8,621.8 330.9,620.7 330.1,619.6 329.3,618.6 328.5,617.5 327.8,616.4 327.0,615.3 326.3,614.3 325.6,613.2 324.9,612.1 324.2,611.0 323.6,609.9 322.9,608.8 322.3,607.7 321.7,606.6 321.1,605.5 320.5,604.4 320.0,603.3 319.5,602.2 319.0,601.1 318.5,599.9 318.1,599.0 318.3,598.2 318.5,597.0 318.8,595.9 319.1,594.8 319.5,593.7 319.8,592.5 320.2,591.4 320.5,590.3 320.9,589.2 321.3,588.1 321.8,587.0 322.2,585.9 322.6,584.8 323.1,583.7 323.6,582.6 324.1,581.5 324.6,580.4 325.1,579.3 325.7,578.2 326.3,577.2 326.8,576.1 327.4,575.0 328.0,573.9 328.7,572.9 329.3,571.8 329.9,570.8 330.6,569.7 331.3,568.7 332.0,567.6 332.7,566.6 333.4,565.5 334.2,564.5 334.9,563.5 335.7,562.4 336.5,561.4 337.3,560.4 338.1,559.4 338.9,558.4 339.7,557.4 340.6,556.4 341.5,555.4 342.3,554.4 343.2,553.4 344.1,552.4 345.1,551.5 346.0,550.5 346.9,549.5 347.9,548.6 348.9,547.6 349.9,546.7 350.8,545.7 351.9,544.8 352.9,543.9 353.9,542.9 355.0,542.0 356.0,541.1 357.1,540.2 358.2,539.3 359.3,538.4 360.4,537.5 361.5,536.6 362.6,535.7 363.8,534.9 364.9,534.0 366.1,533.1 367.3,532.3 368.5,531.4 369.6,530.6 370.9,529.7 372.1,528.9 373.3,528.1 374.6,527.3 375.8,526.4 377.1,525.6 378.3,524.8 379.6,524.0 380.9,523.3 382.2,522.5 383.5,521.7 384.9,520.9 386.2,520.2 387.5,519.4 388.9,518.7 390.3,517.9 391.6,517.2 393.0,516.5 394.4,515.7 395.8,515.0 397.2,514.3 398.6,513.6 400.0,512.9 401.5,512.2 402.9,511.6 404.4,510.9 405.8,510.2 407.3,509.6 408.8,508.9 410.3,508.3 411.8,507.6 413.3,507.0 414.8,506.4 416.3,505.8 417.8,505.2 419.3,504.6 420.9,504.0 422.4,503.4 424.0,502.8 425.5,502.3 427.1,501.7 428.7,501.1 430.2,500.6 431.8,500.1 433.4,499.5 435.0,499.0 436.6,498.5 438.2,498.0 439.9,497.5 441.5,497.0 443.1,496.5 444.8,496.0 446.4,495.6 448.0,495.1 449.7,494.6 451.4,494.2 453.0,493.8 454.7,493.3 456.4,492.9 458.0,492.5 459.7,492.1 461.4,491.7 463.1,491.3 464.8,490.9 466.5,490.6 468.2,490.2 469.9,489.8 471.6,489.5 473.3,489.1 475.1,488.8 476.8,488.5 478.5,488.2 480.2,487.9 482.0,487.6 483.7,487.3 485.5,487.0 487.2,486.7 489.0,486.4 490.7,486.2 492.5,485.9 494.2,485.7 496.0,485.4 497.7,485.2 499.5,485.0 501.3,484.8 503.1,484.6 504.8,484.4 506.6,484.2 508.4,484.0 510.1,483.9 511.9,483.7 513.7,483.6 515.5,483.4 517.3,483.3 519.1,483.1 520.8,483.0 522.6,482.9 524.4,482.8 526.2,482.7 528.0,482.6 529.8,482.6 531.6,482.5 533.4,482.4 535.2,482.4 537.0,482.3 538.8,482.3 540.5,482.3 542.3,482.3 544.1,482.2 545.9,482.2 547.7,482.2 549.5,482.3 551.3,482.3 553.1,482.3 554.9,482.4 556.7,482.4 558.4,482.5 560.2,482.5 562.0,482.6 563.8,482.7 565.6,482.8 567.4,482.9 569.1,483.0 570.9,483.1 572.7,483.2 574.5,483.4 576.2,483.5 578.0,483.6 579.8,483.8 581.5,484.0 583.3,484.1 585.1,484.3 586.8,484.5 588.6,484.7 590.3,484.9 592.1,485.1 593.8,485.4 595.6,485.6 597.3,485.8 599.0,486.1 600.8,486.3 602.5,486.6 604.2,486.9 606.0,487.1 607.7,487.4 609.4,487.7 611.1,488.0 612.8,488.4 614.5,488.7 616.2,489.0 617.9,489.3 619.6,489.7 621.3,490.0 622.9,490.4 624.6,490.8 626.3,491.2 627.9,491.5 629.6,491.9 631.2,492.3 632.9,492.7 634.5,493.2 636.2,493.6 637.8,494.0 639.4,494.5 641.0,494.9 642.7,495.4 644.3,495.8 645.9,496.3 647.5,496.8 649.0,497.3 650.6,497.8 652.2,498.3 653.8,498.8 655.3,499.3 656.9,499.8 658.4,500.4 660.0,500.9 661.5,501.5 663.0,502.0 664.5,502.6 666.0,503.2 667.5,503.7 669.0,504.3 670.5,504.9 672.0,505.5 673.5,506.1 674.9,506.7 676.4,507.4 677.8,508.0 679.3,508.6 680.7,509.3 682.1,509.9 683.5,510.6 684.9,511.3 686.3,511.9 687.7,512.6 689.1,513.3 690.4,514.0 691.8,514.7 693.1,515.4 694.5,516.1 695.8,516.9 697.1,517.6 698.4,518.3 699.7,519.1 701.0,519.8 702.3,520.6 703.6,521.3 704.8,522.1 706.1,522.9 707.3,523.7 708.5,524.5 709.7,525.3 711.0,526.1 712.1,526.9 713.3,527.7 714.5,528.5 715.7,529.3 716.8,530.2 717.9,531.0 719.1,531.9 720.2,532.7 721.3,533.6 722.4,534.4 723.4,535.3 724.5,536.2 725.6,537.1 726.6,538.0 727.6,538.9 728.7,539.8 729.7,540.7 730.7,541.6 731.6,542.5 732.6,543.4 733.6,544.3 734.5,545.3 735.4,546.2 736.3,547.2 737.2,548.1 738.1,549.1 739.0,550.0 739.9,551.0 740.7,552.0 741.6,552.9 742.4,553.9 743.2,554.9 744.0,555.9 744.8,556.9 745.5,557.9 746.3,558.9 747.0,559.9 747.7,560.9 748.5,561.9 749.1,562.9 749.8,564.0 750.5,565.0 751.1,566.0 751.8,567.1 752.4,568.1 753.0,569.1 753.6,570.2 754.2,571.3 754.7,572.3 755.3,573.4 755.8,574.4 756.3,575.5 756.8,576.6 757.3,577.7 757.8,578.7 758.3,579.8 758.7,580.9 759.1,582.0 759.5,583.1 759.9,584.2 760.3,585.3 760.6,586.4 761.0,587.5 761.3,588.6 761.6,589.7 761.9,590.8 762.0,591.1 761.8,591.5 761.4,592.6 760.9,593.7 760.4,594.8 759.9,596.0 759.4,597.1 758.9,598.2 758.3,599.3 757.8,600.4 757.2,601.5 756.6,602.6 755.9,603.8 755.3,604.9 754.6,606.0 754.0,607.1 753.3,608.2 752.5,609.3 751.8,610.4 751.1,611.4 750.3,612.5 749.5,613.6 748.7,614.7 747.9,615.8 747.0,616.9 746.2,617.9 745.3,619.0 744.4,620.1 743.5,621.1 742.6,622.2 741.6,623.2 740.7,624.3 739.7,625.3 738.7,626.4 737.7,627.4 736.6,628.4 735.6,629.5 734.5,630.5 733.4,631.5 732.3,632.5 731.2,633.5 730.1,634.6 728.9,635.6 727.8,636.5 726.6,637.5 725.4,638.5 724.2,639.5 722.9,640.5 721.7,641.4 720.4,642.4 719.1,643.4 717.8,644.3 716.5,645.3 715.2,646.2 713.9,647.1 712.5,648.1 711.1,649.0 709.7,649.9 708.3,650.8 706.9,651.7 705.5,652.6 704.0,653.5 702.5,654.3 701.1,655.2 699.6,656.1 698.0,656.9 696.5,657.8 695.0,658.6 693.4,659.5 691.9,660.3 690.3,661.1 688.7,661.9 687.1,662.7 685.9,663.3 687.5,662.5 689.2,661.7 690.9,660.9 692.5,660.1 694.2,659.2 695.8,658.4 697.4,657.6 699.0,656.7 700.6,655.8 702.2,655.0 703.7,654.1 705.2,653.2 706.8,652.3 708.3,651.4 709.7,650.5 711.2,649.6 712.7,648.7 714.1,647.7 715.5,646.8 717.0,645.9 718.4,644.9 719.7,644.0 721.1,643.0 722.4,642.0 723.8,641.0 725.1,640.1 726.4,639.1 727.6,638.1 728.9,637.1 730.2,636.1 731.4,635.1 732.6,634.1 733.8,633.0Z" fill="#ebe7dd"/>
<path d="M762.3,590.3 762.7,589.2 763.1,588.1 763.4,586.9 763.8,585.8 764.1,584.7 764.5,583.6 764.8,582.4 765.1,581.3 765.3,580.2 765.6,579.0 765.8,577.9 766.0,576.8 766.2,575.6 766.4,574.5 766.6,573.4 766.7,572.2 766.8,571.1 766.9,570.0 767.0,568.8 767.1,567.7 767.1,566.6 767.2,565.5 767.2,564.3 767.2,563.2 767.2,562.1 767.2,561.0 767.1,559.8 767.1,558.7 767.0,557.6 766.9,556.5 766.7,555.4 766.6,554.2 766.5,553.1 766.3,552.0 766.1,550.9 765.9,549.8 765.7,548.7 765.5,547.6 765.2,546.5 764.9,545.4 764.6,544.3 764.3,543.2 764.0,542.1 763.7,541.0 763.3,540.0 763.0,538.9 762.6,537.8 762.2,536.7 761.8,535.6 761.3,534.6 760.9,533.5 760.4,532.4 760.0,531.4 759.5,530.3 758.9,529.3 758.4,528.2 757.9,527.2 757.3,526.1 756.7,525.1 756.2,524.0 755.6,523.0 754.9,522.0 754.3,521.0 753.7,519.9 753.0,518.9 752.3,517.9 751.6,516.9 750.9,515.9 750.2,514.9 749.5,513.9 748.7,512.9 747.9,511.9 747.2,511.0 746.4,510.0 745.6,509.0 744.7,508.0 743.9,507.1 743.1,506.1 742.2,505.2 741.3,504.2 740.4,503.3 739.5,502.3 738.6,501.4 737.7,500.5 736.7,499.6 735.8,498.6 734.8,497.7 733.8,496.8 732.8,495.9 731.8,495.0 730.8,494.1 729.8,493.2 728.7,492.4 727.7,491.5 726.6,490.6 725.5,489.8 724.4,488.9 723.3,488.1 722.2,487.2 721.0,486.4 719.9,485.5 718.7,484.7 717.6,483.9 716.4,483.1 715.2,482.3 714.0,481.5 712.8,480.7 711.6,479.9 710.3,479.1 709.1,478.3 707.8,477.6 706.6,476.8 705.3,476.0 704.0,475.3 702.7,474.5 701.4,473.8 700.1,473.1 698.8,472.4 697.4,471.6 696.1,470.9 694.7,470.2 693.4,469.5 692.0,468.8 690.6,468.2 689.2,467.5 687.8,466.8 686.4,466.1 685.0,465.5 683.5,464.8 682.1,464.2 680.6,463.6 679.2,462.9 677.7,462.3 676.2,461.7 674.8,461.1 673.3,460.5 671.8,459.9 670.3,459.3 668.7,458.7 667.2,458.2 665.7,457.6 664.1,457.1 662.6,456.5 661.0,456.0 659.5,455.4 657.9,454.9 656.3,454.4 654.8,453.9 653.2,453.4 651.6,452.9 650.0,452.4 648.4,451.9 646.7,451.5 645.1,451.0 643.5,450.5 641.9,450.1 640.2,449.6 638.6,449.2 636.9,448.8 635.3,448.4 633.6,448.0 631.9,447.5 630.2,447.2 628.6,446.8 626.9,446.4 625.2,446.0 623.5,445.7 621.8,445.3 620.1,445.0 618.4,444.6 616.6,444.3 614.9,444.0 613.2,443.6 611.5,443.3 609.7,443.0 608.0,442.7 606.3,442.5 604.5,442.2 602.8,441.9 601.0,441.7 599.3,441.4 597.5,441.2 595.7,440.9 594.0,440.7 592.2,440.5 590.4,440.3 588.6,440.1 586.9,439.9 585.1,439.7 583.3,439.5 581.5,439.3 579.7,439.2 577.9,439.0 576.1,438.9 574.3,438.7 572.5,438.6 570.7,438.5 568.9,438.4 567.1,438.3 565.3,438.2 563.5,438.1 561.7,438.0 559.9,437.9 558.1,437.9 556.3,437.8 554.5,437.7 552.6,437.7 550.8,437.7 549.0,437.7 547.2,437.6 545.4,437.6 543.6,437.6 541.7,437.6 539.9,437.7 538.1,437.7 536.3,437.7 534.5,437.8 532.7,437.8 530.8,437.9 529.0,437.9 527.2,438.0 525.4,438.1 523.6,438.2 521.8,438.3 519.9,438.4 518.1,438.5 516.3,438.6 514.5,438.8 512.7,438.9 510.9,439.1 509.1,439.2 507.3,439.4 505.5,439.6 503.7,439.7 501.9,439.9 500.1,440.1 498.3,440.3 496.5,440.5 494.7,440.8 492.9,441.0 491.2,441.2 489.4,441.5 487.6,441.7 485.8,442.0 484.1,442.3 482.3,442.5 480.5,442.8 478.8,443.1 477.0,443.4 475.2,443.7 473.5,444.1 471.8,444.4 470.0,444.7 468.3,445.1 466.5,445.4 464.8,445.8 463.1,446.1 461.4,446.5 459.6,446.9 457.9,447.3 456.2,447.7 454.5,448.1 452.8,448.5 451.1,448.9 449.4,449.4 447.8,449.8 446.1,450.2 444.4,450.7 442.7,451.1 441.1,451.6 439.4,452.1 437.8,452.6 436.1,453.1 434.5,453.6 432.9,454.1 431.3,454.6 429.6,455.1 428.0,455.6 426.4,456.2 424.8,456.7 423.2,457.3 421.7,457.8 420.1,458.4 418.5,459.0 417.0,459.5 415.4,460.1 413.9,460.7 412.3,461.3 410.8,461.9 409.3,462.5 407.7,463.2 406.2,463.8 404.7,464.4 403.2,465.1 401.8,465.7 400.3,466.4 398.8,467.1 397.4,467.7 395.9,468.4 394.5,469.1 393.0,469.8 391.6,470.5 390.2,471.2 388.8,471.9 387.4,472.6 386.0,473.4 384.7,474.1 383.3,474.8 381.9,475.6 380.6,476.3 379.3,477.1 377.9,477.9 376.6,478.6 375.3,479.4 374.0,480.2 372.7,481.0 371.5,481.8 370.2,482.6 369.0,483.4 367.7,484.2 366.5,485.0 365.3,485.9 364.1,486.7 362.9,487.6 361.7,488.4 360.5,489.3 359.3,490.1 358.2,491.0 357.1,491.9 355.9,492.7 354.8,493.6 353.7,494.5 352.6,495.4 351.6,496.3 350.5,497.2 349.4,498.1 348.4,499.0 347.4,499.9 346.4,500.9 345.4,501.8 344.4,502.7 343.4,503.7 342.4,504.6 341.5,505.6 340.5,506.5 339.6,507.5 338.7,508.5 337.8,509.4 336.9,510.4 336.1,511.4 335.2,512.4 334.4,513.4 333.6,514.4 332.7,515.4 331.9,516.4 331.2,517.4 330.4,518.4 329.6,519.4 328.9,520.4 328.2,521.4 327.5,522.5 326.8,523.5 326.1,524.5 325.4,525.6 324.8,526.6 324.1,527.7 323.5,528.7 322.9,529.8 322.3,530.8 321.8,531.9 321.2,532.9 320.7,534.0 320.1,535.1 319.6,536.2 319.1,537.2 318.6,538.3 318.2,539.4 317.7,540.5 317.3,541.6 316.9,542.7 316.5,543.8 316.1,544.9 315.7,546.0 315.4,547.1 315.1,548.2 314.7,549.3 314.4,550.4 314.2,551.5 313.9,552.6 313.6,553.7 313.4,554.8 313.2,555.9 313.0,557.1 312.8,558.2 312.6,559.3 312.5,560.4 312.4,561.5 312.3,562.7 312.2,563.8 312.1,564.9 312.0,566.1 312.0,567.2 312.0,568.3 311.9,569.4 312.0,570.6 312.0,571.7 312.0,572.8 312.1,574.0 312.2,575.1 312.3,576.2 312.4,577.4 312.5,578.5 312.7,579.6 312.8,580.8 313.0,581.9 313.2,583.1 313.4,584.2 313.7,585.3 313.9,586.4 314.2,587.6 314.5,588.7 314.8,589.8 315.2,591.0 315.5,592.1 315.9,593.2 316.3,594.3 316.7,595.5 317.1,596.6 317.5,597.7 318.0,598.8 318.5,599.9 318.1,599.0 318.3,598.2 318.5,597.0 318.8,595.9 319.1,594.8 319.5,593.7 319.8,592.5 320.2,591.4 320.5,590.3 320.9,589.2 321.3,588.1 321.8,587.0 322.2,585.9 322.6,584.8 323.1,583.7 323.6,582.6 324.1,581.5 324.6,580.4 325.1,579.3 325.7,578.2 326.3,577.2 326.8,576.1 327.4,575.0 328.0,573.9 328.7,572.9 329.3,571.8 329.9,570.8 330.6,569.7 331.3,568.7 332.0,567.6 332.7,566.6 333.4,565.5 334.2,564.5 334.9,563.5 335.7,562.4 336.5,561.4 337.3,560.4 338.1,559.4 338.9,558.4 339.7,557.4 340.6,556.4 341.5,555.4 342.3,554.4 343.2,553.4 344.1,552.4 345.1,551.5 346.0,550.5 346.9,549.5 347.9,548.6 348.9,547.6 349.9,546.7 350.8,545.7 351.9,544.8 352.9,543.9 353.9,542.9 355.0,542.0 356.0,541.1 357.1,540.2 358.2,539.3 359.3,538.4 360.4,537.5 361.5,536.6 362.6,535.7 363.8,534.9 364.9,534.0 366.1,533.1 367.3,532.3 368.5,531.4 369.6,530.6 370.9,529.7 372.1,528.9 373.3,528.1 374.6,527.3 375.8,526.4 377.1,525.6 378.3,524.8 379.6,524.0 380.9,523.3 382.2,522.5 383.5,521.7 384.9,520.9 386.2,520.2 387.5,519.4 388.9,518.7 390.3,517.9 391.6,517.2 393.0,516.5 394.4,515.7 395.8,515.0 397.2,514.3 398.6,513.6 400.0,512.9 401.5,512.2 402.9,511.6 404.4,510.9 405.8,510.2 407.3,509.6 408.8,508.9 410.3,508.3 411.8,507.6 413.3,507.0 414.8,506.4 416.3,505.8 417.8,505.2 419.3,504.6 420.9,504.0 422.4,503.4 424.0,502.8 425.5,502.3 427.1,501.7 428.7,501.1 430.2,500.6 431.8,500.1 433.4,499.5 435.0,499.0 436.6,498.5 438.2,498.0 439.9,497.5 441.5,497.0 443.1,496.5 444.8,496.0 446.4,495.6 448.0,495.1 449.7,494.6 451.4,494.2 453.0,493.8 454.7,493.3 456.4,492.9 458.0,492.5 459.7,492.1 461.4,491.7 463.1,491.3 464.8,490.9 466.5,490.6 468.2,490.2 469.9,489.8 471.6,489.5 473.3,489.1 475.1,488.8 476.8,488.5 478.5,488.2 480.2,487.9 482.0,487.6 483.7,487.3 485.5,487.0 487.2,486.7 489.0,486.4 490.7,486.2 492.5,485.9 494.2,485.7 496.0,485.4 497.7,485.2 499.5,485.0 501.3,484.8 503.1,484.6 504.8,484.4 506.6,484.2 508.4,484.0 510.1,483.9 511.9,483.7 513.7,483.6 515.5,483.4 517.3,483.3 519.1,483.1 520.8,483.0 522.6,482.9 524.4,482.8 526.2,482.7 528.0,482.6 529.8,482.6 531.6,482.5 533.4,482.4 535.2,482.4 537.0,482.3 538.8,482.3 540.5,482.3 542.3,482.3 544.1,482.2 545.9,482.2 547.7,482.2 549.5,482.3 551.3,482.3 553.1,482.3 554.9,482.4 556.7,482.4 558.4,482.5 560.2,482.5 562.0,482.6 563.8,482.7 565.6,482.8 567.4,482.9 569.1,483.0 570.9,483.1 572.7,483.2 574.5,483.4 576.2,483.5 578.0,483.6 579.8,483.8 581.5,484.0 583.3,484.1 585.1,484.3 586.8,484.5 588.6,484.7 590.3,484.9 592.1,485.1 593.8,485.4 595.6,485.6 597.3,485.8 599.0,486.1 600.8,486.3 602.5,486.6 604.2,486.9 606.0,487.1 607.7,487.4 609.4,487.7 611.1,488.0 612.8,488.4 614.5,488.7 616.2,489.0 617.9,489.3 619.6,489.7 621.3,490.0 622.9,490.4 624.6,490.8 626.3,491.2 627.9,491.5 629.6,491.9 631.2,492.3 632.9,492.7 634.5,493.2 636.2,493.6 637.8,494.0 639.4,494.5 641.0,494.9 642.7,495.4 644.3,495.8 645.9,496.3 647.5,496.8 649.0,497.3 650.6,497.8 652.2,498.3 653.8,498.8 655.3,499.3 656.9,499.8 658.4,500.4 660.0,500.9 661.5,501.5 663.0,502.0 664.5,502.6 666.0,503.2 667.5,503.7 669.0,504.3 670.5,504.9 672.0,505.5 673.5,506.1 674.9,506.7 676.4,507.4 677.8,508.0 679.3,508.6 680.7,509.3 682.1,509.9 683.5,510.6 684.9,511.3 686.3,511.9 687.7,512.6 689.1,513.3 690.4,514.0 691.8,514.7 693.1,515.4 694.5,516.1 695.8,516.9 697.1,517.6 698.4,518.3 699.7,519.1 701.0,519.8 702.3,520.6 703.6,521.3 704.8,522.1 706.1,522.9 707.3,523.7 708.5,524.5 709.7,525.3 711.0,526.1 712.1,526.9 713.3,527.7 714.5,528.5 715.7,529.3 716.8,530.2 717.9,531.0 719.1,531.9 720.2,532.7 721.3,533.6 722.4,534.4 723.4,535.3 724.5,536.2 725.6,537.1 726.6,538.0 727.6,538.9 728.7,539.8 729.7,540.7 730.7,541.6 731.6,542.5 732.6,543.4 733.6,544.3 734.5,545.3 735.4,546.2 736.3,547.2 737.2,548.1 738.1,549.1 739.0,550.0 739.9,551.0 740.7,552.0 741.6,552.9 742.4,553.9 743.2,554.9 744.0,555.9 744.8,556.9 745.5,557.9 746.3,558.9 747.0,559.9 747.7,560.9 748.5,561.9 749.1,562.9 749.8,564.0 750.5,565.0 751.1,566.0 751.8,567.1 752.4,568.1 753.0,569.1 753.6,570.2 754.2,571.3 754.7,572.3 755.3,573.4 755.8,574.4 756.3,575.5 756.8,576.6 757.3,577.7 757.8,578.7 758.3,579.8 758.7,580.9 759.1,582.0 759.5,583.1 759.9,584.2 760.3,585.3 760.6,586.4 761.0,587.5 761.3,588.6 761.6,589.7 761.9,590.8 762.0,591.1 761.8,591.5Z" fill="url(#innerg)"/>
<clipPath id="holec"><path d="M730.1,634.6 731.2,633.5 732.3,632.5 733.4,631.5 734.5,630.5 735.6,629.5 736.6,628.4 737.7,627.4 738.7,626.4 739.7,625.3 740.7,624.3 741.6,623.2 742.6,622.2 743.5,621.1 744.4,620.1 745.3,619.0 746.2,617.9 747.0,616.9 747.9,615.8 748.7,614.7 749.5,613.6 750.3,612.5 751.1,611.4 751.8,610.4 752.5,609.3 753.3,608.2 754.0,607.1 754.6,606.0 755.3,604.9 755.9,603.8 756.6,602.6 757.2,601.5 757.8,600.4 758.3,599.3 758.9,598.2 759.4,597.1 759.9,596.0 760.4,594.8 760.9,593.7 761.4,592.6 761.8,591.5 762.0,591.1 761.9,590.8 761.6,589.7 761.3,588.6 761.0,587.5 760.6,586.4 760.3,585.3 759.9,584.2 759.5,583.1 759.1,582.0 758.7,580.9 758.3,579.8 757.8,578.7 757.3,577.7 756.8,576.6 756.3,575.5 755.8,574.4 755.3,573.4 754.7,572.3 754.2,571.3 753.6,570.2 753.0,569.1 752.4,568.1 751.8,567.1 751.1,566.0 750.5,565.0 749.8,564.0 749.1,562.9 748.5,561.9 747.7,560.9 747.0,559.9 746.3,558.9 745.5,557.9 744.8,556.9 744.0,555.9 743.2,554.9 742.4,553.9 741.6,552.9 740.7,552.0 739.9,551.0 739.0,550.0 738.1,549.1 737.2,548.1 736.3,547.2 735.4,546.2 734.5,545.3 733.6,544.3 732.6,543.4 731.6,542.5 730.7,541.6 729.7,540.7 728.7,539.8 727.6,538.9 726.6,538.0 725.6,537.1 724.5,536.2 723.4,535.3 722.4,534.4 721.3,533.6 720.2,532.7 719.1,531.9 717.9,531.0 716.8,530.2 715.7,529.3 714.5,528.5 713.3,527.7 712.1,526.9 711.0,526.1 709.7,525.3 708.5,524.5 707.3,523.7 706.1,522.9 704.8,522.1 703.6,521.3 702.3,520.6 701.0,519.8 699.7,519.1 698.4,518.3 697.1,517.6 695.8,516.9 694.5,516.1 693.1,515.4 691.8,514.7 690.4,514.0 689.1,513.3 687.7,512.6 686.3,511.9 684.9,511.3 683.5,510.6 682.1,509.9 680.7,509.3 679.3,508.6 677.8,508.0 676.4,507.4 674.9,506.7 673.5,506.1 672.0,505.5 670.5,504.9 669.0,504.3 667.5,503.7 666.0,503.2 664.5,502.6 663.0,502.0 661.5,501.5 660.0,500.9 658.4,500.4 656.9,499.8 655.3,499.3 653.8,498.8 652.2,498.3 650.6,497.8 649.0,497.3 647.5,496.8 645.9,496.3 644.3,495.8 642.7,495.4 641.0,494.9 639.4,494.5 637.8,494.0 636.2,493.6 634.5,493.2 632.9,492.7 631.2,492.3 629.6,491.9 627.9,491.5 626.3,491.2 624.6,490.8 622.9,490.4 621.3,490.0 619.6,489.7 617.9,489.3 616.2,489.0 614.5,488.7 612.8,488.4 611.1,488.0 609.4,487.7 607.7,487.4 606.0,487.1 604.2,486.9 602.5,486.6 600.8,486.3 599.0,486.1 597.3,485.8 595.6,485.6 593.8,485.4 592.1,485.1 590.3,484.9 588.6,484.7 586.8,484.5 585.1,484.3 583.3,484.1 581.5,484.0 579.8,483.8 578.0,483.6 576.2,483.5 574.5,483.4 572.7,483.2 570.9,483.1 569.1,483.0 567.4,482.9 565.6,482.8 563.8,482.7 562.0,482.6 560.2,482.5 558.4,482.5 556.7,482.4 554.9,482.4 553.1,482.3 551.3,482.3 549.5,482.3 547.7,482.2 545.9,482.2 544.1,482.2 542.3,482.3 540.5,482.3 538.8,482.3 537.0,482.3 535.2,482.4 533.4,482.4 531.6,482.5 529.8,482.6 528.0,482.6 526.2,482.7 524.4,482.8 522.6,482.9 520.8,483.0 519.1,483.1 517.3,483.3 515.5,483.4 513.7,483.6 511.9,483.7 510.1,483.9 508.4,484.0 506.6,484.2 504.8,484.4 503.1,484.6 501.3,484.8 499.5,485.0 497.7,485.2 496.0,485.4 494.2,485.7 492.5,485.9 490.7,486.2 489.0,486.4 487.2,486.7 485.5,487.0 483.7,487.3 482.0,487.6 480.2,487.9 478.5,488.2 476.8,488.5 475.1,488.8 473.3,489.1 471.6,489.5 469.9,489.8 468.2,490.2 466.5,490.6 464.8,490.9 463.1,491.3 461.4,491.7 459.7,492.1 458.0,492.5 456.4,492.9 454.7,493.3 453.0,493.8 451.4,494.2 449.7,494.6 448.0,495.1 446.4,495.6 444.8,496.0 443.1,496.5 441.5,497.0 439.9,497.5 438.2,498.0 436.6,498.5 435.0,499.0 433.4,499.5 431.8,500.1 430.2,500.6 428.7,501.1 427.1,501.7 425.5,502.3 424.0,502.8 422.4,503.4 420.9,504.0 419.3,504.6 417.8,505.2 416.3,505.8 414.8,506.4 413.3,507.0 411.8,507.6 410.3,508.3 408.8,508.9 407.3,509.6 405.8,510.2 404.4,510.9 402.9,511.6 401.5,512.2 400.0,512.9 398.6,513.6 397.2,514.3 395.8,515.0 394.4,515.7 393.0,516.5 391.6,517.2 390.3,517.9 388.9,518.7 387.5,519.4 386.2,520.2 384.9,520.9 383.5,521.7 382.2,522.5 380.9,523.3 379.6,524.0 378.3,524.8 377.1,525.6 375.8,526.4 374.6,527.3 373.3,528.1 372.1,528.9 370.9,529.7 369.6,530.6 368.5,531.4 367.3,532.3 366.1,533.1 364.9,534.0 363.8,534.9 362.6,535.7 361.5,536.6 360.4,537.5 359.3,538.4 358.2,539.3 357.1,540.2 356.0,541.1 355.0,542.0 353.9,542.9 352.9,543.9 351.9,544.8 350.8,545.7 349.9,546.7 348.9,547.6 347.9,548.6 346.9,549.5 346.0,550.5 345.1,551.5 344.1,552.4 343.2,553.4 342.3,554.4 341.5,555.4 340.6,556.4 339.7,557.4 338.9,558.4 338.1,559.4 337.3,560.4 336.5,561.4 335.7,562.4 334.9,563.5 334.2,564.5 333.4,565.5 332.7,566.6 332.0,567.6 331.3,568.7 330.6,569.7 329.9,570.8 329.3,571.8 328.7,572.9 328.0,573.9 327.4,575.0 326.8,576.1 326.3,577.2 325.7,578.2 325.1,579.3 324.6,580.4 324.1,581.5 323.6,582.6 323.1,583.7 322.6,584.8 322.2,585.9 321.8,587.0 321.3,588.1 320.9,589.2 320.5,590.3 320.2,591.4 319.8,592.5 319.5,593.7 319.1,594.8 318.8,595.9 318.5,597.0 318.3,598.2 318.1,599.0 318.5,599.9 319.0,601.1 319.5,602.2 320.0,603.3 320.5,604.4 321.1,605.5 321.7,606.6 322.3,607.7 322.9,608.8 323.6,609.9 324.2,611.0 324.9,612.1 325.6,613.2 326.3,614.3 327.0,615.3 327.8,616.4 328.5,617.5 329.3,618.6 330.1,619.6 330.9,620.7 331.8,621.8 332.6,622.8 333.5,623.9 334.4,624.9 335.3,626.0 336.2,627.0 337.2,628.1 338.1,629.1 339.1,630.1 340.1,631.1 341.1,632.2 342.2,633.2 343.2,634.2 344.3,635.2 345.3,636.2 346.4,637.2 347.6,638.2 348.7,639.1 349.8,640.1 351.0,641.1 352.2,642.1 353.4,643.0 354.6,644.0 355.8,644.9 357.1,645.9 358.4,646.8 359.6,647.7 360.9,648.6 362.3,649.6 363.6,650.5 364.9,651.4 366.3,652.3 367.7,653.2 369.1,654.0 370.5,654.9 371.9,655.8 373.3,656.6 374.8,657.5 376.3,658.3 377.8,659.2 379.3,660.0 380.8,660.8 382.3,661.7 383.8,662.5 385.4,663.3 387.0,664.1 388.6,664.8 390.2,665.6 391.8,666.4 393.4,667.1 395.0,667.9 396.7,668.6 398.4,669.4 400.1,670.1 401.8,670.8 403.5,671.5 405.2,672.2 406.9,672.9 408.7,673.6 410.4,674.2 412.2,674.9 414.0,675.6 415.8,676.2 417.6,676.8 419.4,677.5 421.2,678.1 423.1,678.7 424.9,679.3 426.8,679.8 428.6,680.4 430.5,681.0 432.4,681.5 434.3,682.1 436.2,682.6 438.2,683.1 440.1,683.7 442.0,684.2 444.0,684.6 446.0,685.1 447.9,685.6 449.9,686.1 451.9,686.5 453.9,687.0 455.9,687.4 457.9,687.8 459.9,688.2 462.0,688.6 464.0,689.0 466.0,689.4 468.1,689.7 470.1,690.1 472.2,690.4 474.3,690.8 476.4,691.1 478.4,691.4 480.5,691.7 482.6,692.0 484.7,692.2 486.8,692.5 488.9,692.7 491.1,693.0 493.2,693.2 495.3,693.4 497.4,693.6 499.6,693.8 501.7,694.0 503.8,694.2 506.0,694.3 508.1,694.5 510.3,694.6 512.4,694.8 514.6,694.9 516.8,695.0 518.9,695.1 521.1,695.1 523.2,695.2 525.4,695.3 527.6,695.3 529.7,695.3 531.9,695.4 534.1,695.4 536.3,695.4 538.4,695.3 540.6,695.3 542.8,695.3 544.9,695.2 547.1,695.2 549.3,695.1 551.4,695.0 553.6,694.9 555.8,694.8 557.9,694.7 560.1,694.5 562.3,694.4 564.4,694.2 566.6,694.1 568.7,693.9 570.9,693.7 573.0,693.5 575.2,693.3 577.3,693.1 579.4,692.8 581.6,692.6 583.7,692.3 585.8,692.0 587.9,691.8 590.0,691.5 592.2,691.2 594.3,690.8 596.4,690.5 598.5,690.2 600.5,689.8 602.6,689.5 604.7,689.1 606.8,688.7 608.8,688.3 610.9,687.9 612.9,687.5 615.0,687.1 617.0,686.6 619.0,686.2 621.0,685.7 623.1,685.3 625.1,684.8 627.1,684.3 629.0,683.8 631.0,683.3 633.0,682.8 634.9,682.2 636.9,681.7 638.8,681.2 640.8,680.6 642.7,680.0 644.6,679.4 646.5,678.9 648.4,678.3 650.3,677.6 652.1,677.0 654.0,676.4 655.8,675.8 657.7,675.1 659.5,674.5 661.3,673.8 663.1,673.1 664.9,672.4 666.7,671.7 668.5,671.0 670.2,670.3 672.0,669.6 673.7,668.9 675.4,668.1 677.1,667.4 678.8,666.6 680.5,665.9 682.1,665.1 683.8,664.3 685.4,663.5 687.1,662.7 688.7,661.9 690.3,661.1 691.9,660.3 693.4,659.5 695.0,658.6 696.5,657.8 698.0,656.9 699.6,656.1 701.1,655.2 702.5,654.3 704.0,653.5 705.5,652.6 706.9,651.7 708.3,650.8 709.7,649.9 711.1,649.0 712.5,648.1 713.9,647.1 715.2,646.2 716.5,645.3 717.8,644.3 719.1,643.4 720.4,642.4 721.7,641.4 722.9,640.5 724.2,639.5 725.4,638.5 726.6,637.5 727.8,636.5 728.9,635.6Z"/></clipPath>
<g clip-path="url(#holec)"><path d="M762.3,590.3 762.7,589.2 763.1,588.1 763.4,586.9 763.8,585.8 764.1,584.7 764.5,583.6 764.8,582.4 765.1,581.3 765.3,580.2 765.6,579.0 765.8,577.9 766.0,576.8 766.2,575.6 766.4,574.5 766.6,573.4 766.7,572.2 766.8,571.1 766.9,570.0 767.0,568.8 767.1,567.7 767.1,566.6 767.2,565.5 767.2,564.3 767.2,563.2 767.2,562.1 767.2,561.0 767.1,559.8 767.1,558.7 767.0,557.6 766.9,556.5 766.7,555.4 766.6,554.2 766.5,553.1 766.3,552.0 766.1,550.9 765.9,549.8 765.7,548.7 765.5,547.6 765.2,546.5 764.9,545.4 764.6,544.3 764.3,543.2 764.0,542.1 763.7,541.0 763.3,540.0 763.0,538.9 762.6,537.8 762.2,536.7 761.8,535.6 761.3,534.6 760.9,533.5 760.4,532.4 760.0,531.4 759.5,530.3 758.9,529.3 758.4,528.2 757.9,527.2 757.3,526.1 756.7,525.1 756.2,524.0 755.6,523.0 754.9,522.0 754.3,521.0 753.7,519.9 753.0,518.9 752.3,517.9 751.6,516.9 750.9,515.9 750.2,514.9 749.5,513.9 748.7,512.9 747.9,511.9 747.2,511.0 746.4,510.0 745.6,509.0 744.7,508.0 743.9,507.1 743.1,506.1 742.2,505.2 741.3,504.2 740.4,503.3 739.5,502.3 738.6,501.4 737.7,500.5 736.7,499.6 735.8,498.6 734.8,497.7 733.8,496.8 732.8,495.9 731.8,495.0 730.8,494.1 729.8,493.2 728.7,492.4 727.7,491.5 726.6,490.6 725.5,489.8 724.4,488.9 723.3,488.1 722.2,487.2 721.0,486.4 719.9,485.5 718.7,484.7 717.6,483.9 716.4,483.1 715.2,482.3 714.0,481.5 712.8,480.7 711.6,479.9 710.3,479.1 709.1,478.3 707.8,477.6 706.6,476.8 705.3,476.0 704.0,475.3 702.7,474.5 701.4,473.8 700.1,473.1 698.8,472.4 697.4,471.6 696.1,470.9 694.7,470.2 693.4,469.5 692.0,468.8 690.6,468.2 689.2,467.5 687.8,466.8 686.4,466.1 685.0,465.5 683.5,464.8 682.1,464.2 680.6,463.6 679.2,462.9 677.7,462.3 676.2,461.7 674.8,461.1 673.3,460.5 671.8,459.9 670.3,459.3 668.7,458.7 667.2,458.2 665.7,457.6 664.1,457.1 662.6,456.5 661.0,456.0 659.5,455.4 657.9,454.9 656.3,454.4 654.8,453.9 653.2,453.4 651.6,452.9 650.0,452.4 648.4,451.9 646.7,451.5 645.1,451.0 643.5,450.5 641.9,450.1 640.2,449.6 638.6,449.2 636.9,448.8 635.3,448.4 633.6,448.0 631.9,447.5 630.2,447.2 628.6,446.8 626.9,446.4 625.2,446.0 623.5,445.7 621.8,445.3 620.1,445.0 618.4,444.6 616.6,444.3 614.9,444.0 613.2,443.6 611.5,443.3 609.7,443.0 608.0,442.7 606.3,442.5 604.5,442.2 602.8,441.9 601.0,441.7 599.3,441.4 597.5,441.2 595.7,440.9 594.0,440.7 592.2,440.5 590.4,440.3 588.6,440.1 586.9,439.9 585.1,439.7 583.3,439.5 581.5,439.3 579.7,439.2 577.9,439.0 576.1,438.9 574.3,438.7 572.5,438.6 570.7,438.5 568.9,438.4 567.1,438.3 565.3,438.2 563.5,438.1 561.7,438.0 559.9,437.9 558.1,437.9 556.3,437.8 554.5,437.7 552.6,437.7 550.8,437.7 549.0,437.7 547.2,437.6 545.4,437.6 543.6,437.6 541.7,437.6 539.9,437.7 538.1,437.7 536.3,437.7 534.5,437.8 532.7,437.8 530.8,437.9 529.0,437.9 527.2,438.0 525.4,438.1 523.6,438.2 521.8,438.3 519.9,438.4 518.1,438.5 516.3,438.6 514.5,438.8 512.7,438.9 510.9,439.1 509.1,439.2 507.3,439.4 505.5,439.6 503.7,439.7 501.9,439.9 500.1,440.1 498.3,440.3 496.5,440.5 494.7,440.8 492.9,441.0 491.2,441.2 489.4,441.5 487.6,441.7 485.8,442.0 484.1,442.3 482.3,442.5 480.5,442.8 478.8,443.1 477.0,443.4 475.2,443.7 473.5,444.1 471.8,444.4 470.0,444.7 468.3,445.1 466.5,445.4 464.8,445.8 463.1,446.1 461.4,446.5 459.6,446.9 457.9,447.3 456.2,447.7 454.5,448.1 452.8,448.5 451.1,448.9 449.4,449.4 447.8,449.8 446.1,450.2 444.4,450.7 442.7,451.1 441.1,451.6 439.4,452.1 437.8,452.6 436.1,453.1 434.5,453.6 432.9,454.1 431.3,454.6 429.6,455.1 428.0,455.6 426.4,456.2 424.8,456.7 423.2,457.3 421.7,457.8 420.1,458.4 418.5,459.0 417.0,459.5 415.4,460.1 413.9,460.7 412.3,461.3 410.8,461.9 409.3,462.5 407.7,463.2 406.2,463.8 404.7,464.4 403.2,465.1 401.8,465.7 400.3,466.4 398.8,467.1 397.4,467.7 395.9,468.4 394.5,469.1 393.0,469.8 391.6,470.5 390.2,471.2 388.8,471.9 387.4,472.6 386.0,473.4 384.7,474.1 383.3,474.8 381.9,475.6 380.6,476.3 379.3,477.1 377.9,477.9 376.6,478.6 375.3,479.4 374.0,480.2 372.7,481.0 371.5,481.8 370.2,482.6 369.0,483.4 367.7,484.2 366.5,485.0 365.3,485.9 364.1,486.7 362.9,487.6 361.7,488.4 360.5,489.3 359.3,490.1 358.2,491.0 357.1,491.9 355.9,492.7 354.8,493.6 353.7,494.5 352.6,495.4 351.6,496.3 350.5,497.2 349.4,498.1 348.4,499.0 347.4,499.9 346.4,500.9 345.4,501.8 344.4,502.7 343.4,503.7 342.4,504.6 341.5,505.6 340.5,506.5 339.6,507.5 338.7,508.5 337.8,509.4 336.9,510.4 336.1,511.4 335.2,512.4 334.4,513.4 333.6,514.4 332.7,515.4 331.9,516.4 331.2,517.4 330.4,518.4 329.6,519.4 328.9,520.4 328.2,521.4 327.5,522.5 326.8,523.5 326.1,524.5 325.4,525.6 324.8,526.6 324.1,527.7 323.5,528.7 322.9,529.8 322.3,530.8 321.8,531.9 321.2,532.9 320.7,534.0 320.1,535.1 319.6,536.2 319.1,537.2 318.6,538.3 318.2,539.4 317.7,540.5 317.3,541.6 316.9,542.7 316.5,543.8 316.1,544.9 315.7,546.0 315.4,547.1 315.1,548.2 314.7,549.3 314.4,550.4 314.2,551.5 313.9,552.6 313.6,553.7 313.4,554.8 313.2,555.9 313.0,557.1 312.8,558.2 312.6,559.3 312.5,560.4 312.4,561.5 312.3,562.7 312.2,563.8 312.1,564.9 312.0,566.1 312.0,567.2 312.0,568.3 311.9,569.4 312.0,570.6 312.0,571.7 312.0,572.8 312.1,574.0 312.2,575.1 312.3,576.2 312.4,577.4 312.5,578.5 312.7,579.6 312.8,580.8 313.0,581.9 313.2,583.1 313.4,584.2 313.7,585.3 313.9,586.4 314.2,587.6 314.5,588.7 314.8,589.8 315.2,591.0 315.5,592.1 315.9,593.2 316.3,594.3 316.7,595.5 317.1,596.6 317.5,597.7 318.0,598.8 318.5,599.9 318.1,599.0 318.3,598.2 318.5,597.0 318.8,595.9 319.1,594.8 319.5,593.7 319.8,592.5 320.2,591.4 320.5,590.3 320.9,589.2 321.3,588.1 321.8,587.0 322.2,585.9 322.6,584.8 323.1,583.7 323.6,582.6 324.1,581.5 324.6,580.4 325.1,579.3 325.7,578.2 326.3,577.2 326.8,576.1 327.4,575.0 328.0,573.9 328.7,572.9 329.3,571.8 329.9,570.8 330.6,569.7 331.3,568.7 332.0,567.6 332.7,566.6 333.4,565.5 334.2,564.5 334.9,563.5 335.7,562.4 336.5,561.4 337.3,560.4 338.1,559.4 338.9,558.4 339.7,557.4 340.6,556.4 341.5,555.4 342.3,554.4 343.2,553.4 344.1,552.4 345.1,551.5 346.0,550.5 346.9,549.5 347.9,548.6 348.9,547.6 349.9,546.7 350.8,545.7 351.9,544.8 352.9,543.9 353.9,542.9 355.0,542.0 356.0,541.1 357.1,540.2 358.2,539.3 359.3,538.4 360.4,537.5 361.5,536.6 362.6,535.7 363.8,534.9 364.9,534.0 366.1,533.1 367.3,532.3 368.5,531.4 369.6,530.6 370.9,529.7 372.1,528.9 373.3,528.1 374.6,527.3 375.8,526.4 377.1,525.6 378.3,524.8 379.6,524.0 380.9,523.3 382.2,522.5 383.5,521.7 384.9,520.9 386.2,520.2 387.5,519.4 388.9,518.7 390.3,517.9 391.6,517.2 393.0,516.5 394.4,515.7 395.8,515.0 397.2,514.3 398.6,513.6 400.0,512.9 401.5,512.2 402.9,511.6 404.4,510.9 405.8,510.2 407.3,509.6 408.8,508.9 410.3,508.3 411.8,507.6 413.3,507.0 414.8,506.4 416.3,505.8 417.8,505.2 419.3,504.6 420.9,504.0 422.4,503.4 424.0,502.8 425.5,502.3 427.1,501.7 428.7,501.1 430.2,500.6 431.8,500.1 433.4,499.5 435.0,499.0 436.6,498.5 438.2,498.0 439.9,497.5 441.5,497.0 443.1,496.5 444.8,496.0 446.4,495.6 448.0,495.1 449.7,494.6 451.4,494.2 453.0,493.8 454.7,493.3 456.4,492.9 458.0,492.5 459.7,492.1 461.4,491.7 463.1,491.3 464.8,490.9 466.5,490.6 468.2,490.2 469.9,489.8 471.6,489.5 473.3,489.1 475.1,488.8 476.8,488.5 478.5,488.2 480.2,487.9 482.0,487.6 483.7,487.3 485.5,487.0 487.2,486.7 489.0,486.4 490.7,486.2 492.5,485.9 494.2,485.7 496.0,485.4 497.7,485.2 499.5,485.0 501.3,484.8 503.1,484.6 504.8,484.4 506.6,484.2 508.4,484.0 510.1,483.9 511.9,483.7 513.7,483.6 515.5,483.4 517.3,483.3 519.1,483.1 520.8,483.0 522.6,482.9 524.4,482.8 526.2,482.7 528.0,482.6 529.8,482.6 531.6,482.5 533.4,482.4 535.2,482.4 537.0,482.3 538.8,482.3 540.5,482.3 542.3,482.3 544.1,482.2 545.9,482.2 547.7,482.2 549.5,482.3 551.3,482.3 553.1,482.3 554.9,482.4 556.7,482.4 558.4,482.5 560.2,482.5 562.0,482.6 563.8,482.7 565.6,482.8 567.4,482.9 569.1,483.0 570.9,483.1 572.7,483.2 574.5,483.4 576.2,483.5 578.0,483.6 579.8,483.8 581.5,484.0 583.3,484.1 585.1,484.3 586.8,484.5 588.6,484.7 590.3,484.9 592.1,485.1 593.8,485.4 595.6,485.6 597.3,485.8 599.0,486.1 600.8,486.3 602.5,486.6 604.2,486.9 606.0,487.1 607.7,487.4 609.4,487.7 611.1,488.0 612.8,488.4 614.5,488.7 616.2,489.0 617.9,489.3 619.6,489.7 621.3,490.0 622.9,490.4 624.6,490.8 626.3,491.2 627.9,491.5 629.6,491.9 631.2,492.3 632.9,492.7 634.5,493.2 636.2,493.6 637.8,494.0 639.4,494.5 641.0,494.9 642.7,495.4 644.3,495.8 645.9,496.3 647.5,496.8 649.0,497.3 650.6,497.8 652.2,498.3 653.8,498.8 655.3,499.3 656.9,499.8 658.4,500.4 660.0,500.9 661.5,501.5 663.0,502.0 664.5,502.6 666.0,503.2 667.5,503.7 669.0,504.3 670.5,504.9 672.0,505.5 673.5,506.1 674.9,506.7 676.4,507.4 677.8,508.0 679.3,508.6 680.7,509.3 682.1,509.9 683.5,510.6 684.9,511.3 686.3,511.9 687.7,512.6 689.1,513.3 690.4,514.0 691.8,514.7 693.1,515.4 694.5,516.1 695.8,516.9 697.1,517.6 698.4,518.3 699.7,519.1 701.0,519.8 702.3,520.6 703.6,521.3 704.8,522.1 706.1,522.9 707.3,523.7 708.5,524.5 709.7,525.3 711.0,526.1 712.1,526.9 713.3,527.7 714.5,528.5 715.7,529.3 716.8,530.2 717.9,531.0 719.1,531.9 720.2,532.7 721.3,533.6 722.4,534.4 723.4,535.3 724.5,536.2 725.6,537.1 726.6,538.0 727.6,538.9 728.7,539.8 729.7,540.7 730.7,541.6 731.6,542.5 732.6,543.4 733.6,544.3 734.5,545.3 735.4,546.2 736.3,547.2 737.2,548.1 738.1,549.1 739.0,550.0 739.9,551.0 740.7,552.0 741.6,552.9 742.4,553.9 743.2,554.9 744.0,555.9 744.8,556.9 745.5,557.9 746.3,558.9 747.0,559.9 747.7,560.9 748.5,561.9 749.1,562.9 749.8,564.0 750.5,565.0 751.1,566.0 751.8,567.1 752.4,568.1 753.0,569.1 753.6,570.2 754.2,571.3 754.7,572.3 755.3,573.4 755.8,574.4 756.3,575.5 756.8,576.6 757.3,577.7 757.8,578.7 758.3,579.8 758.7,580.9 759.1,582.0 759.5,583.1 759.9,584.2 760.3,585.3 760.6,586.4 761.0,587.5 761.3,588.6 761.6,589.7 761.9,590.8 762.0,591.1 761.8,591.5Z" transform="translate(0 2)" fill="#000" fill-opacity="0.13" filter="url(#blur3)"/></g>
<path d="M1.00,157.43 30.81,145.00M1.00,201.18 130.29,145.00M1.00,248.73 229.66,145.00M1.00,300.60 328.93,145.00M1.00,357.41 428.10,145.00M1.00,419.89 527.16,145.00M1.00,963.78 39.98,989.00M1.00,488.95 626.12,145.00M1.00,820.86 282.32,989.00M1.00,565.68 724.98,145.00M1.00,698.37 524.32,989.00M1.00,651.43 823.74,145.00M1.00,592.23 765.98,989.00M1.00,747.90 243.08,589.49M369.50,506.77 374.27,503.66M524.32,405.47 922.39,145.00M1.00,499.36 243.51,617.36M554.99,768.92 1007.31,989.00M1.00,857.21 267.11,671.39M337.53,622.22 567.09,461.92M639.58,411.30 1020.95,145.00M1.00,417.42 252.55,532.69M322.44,564.72 590.33,687.48M703.53,739.36 1200.00,966.87M171.19,989.00 451.01,763.34M539.31,692.13 739.89,530.37M797.88,483.60 1200.00,159.31M1.00,279.42 376.01,433.39M464.74,469.82 756.08,589.43M833.68,621.30 1200.00,771.69M350.38,989.00 607.99,763.83M836.80,563.84 1200.00,246.39M1.00,220.78 482.15,408.57M666.68,480.60 672.42,482.84M834.52,546.11 1200.00,688.75M529.38,989.00 1200.00,349.28M1.00,167.73 1200.00,613.71M708.20,989.00 1200.00,472.73M72.79,145.00 1200.00,545.50M886.83,989.00 1200.00,623.57M205.49,145.00 1200.00,483.21M1065.28,989.00 1200.00,812.09M338.00,145.00 1200.00,426.12M470.33,145.00 1200.00,373.60M602.48,145.00 1200.00,325.12M734.45,145.00 1200.00,280.24M866.23,145.00 1200.00,238.56M997.83,145.00 1200.00,199.75M1129.26,145.00 1200.00,163.53" fill="none" stroke="#000" stroke-opacity="0.095" stroke-width="1.15"/>
<ellipse cx="540.3" cy="578.7" rx="8.9" ry="4.7" fill="none" stroke="#b9b9b9" stroke-width="2.4"/>
<path d="M1.00,344.59 302.46,475.14M373.16,505.76 706.45,650.11M789.59,686.11 1200.00,863.86" fill="none" stroke="#ff8585" stroke-width="1.2"/>
<path d="M1.00,982.13 341.26,727.44M414.26,672.80 668.59,482.43M725.08,440.15 1119.40,145.00" fill="none" stroke="#7df27d" stroke-width="1.2"/>
<path d="M300.0,479.1 298.8,480.0 297.7,480.9 296.6,481.9 295.5,482.8 294.4,483.7 293.3,484.6 292.2,485.6 291.2,486.5 290.1,487.5 289.1,488.4 288.0,489.4 287.0,490.3 286.0,491.3 285.0,492.3 284.0,493.2 283.0,494.2 282.0,495.2 281.1,496.2 280.1,497.2 279.2,498.2 278.2,499.2 277.3,500.2 276.4,501.2 275.5,502.2 274.6,503.2 273.7,504.2 272.9,505.2 272.0,506.3 271.2,507.3 270.4,508.3 269.5,509.4 268.7,510.4 267.9,511.4 267.2,512.5 266.4,513.5 265.6,514.6 264.9,515.7 264.1,516.7 263.4,517.8 262.7,518.9 262.0,519.9 261.3,521.0 260.6,522.1 260.0,523.2 259.3,524.3 258.7,525.3 258.1,526.4 257.4,527.5 256.8,528.6 256.3,529.7 255.7,530.8 255.1,531.9 254.6,533.1 254.0,534.2 253.5,535.3 253.0,536.4 252.5,537.5 252.0,538.6 251.5,539.8 251.1,540.9 250.6,542.0 250.2,543.2 249.8,544.3 249.4,545.4 249.0,546.6 248.6,547.7 248.2,548.9 247.9,550.0 247.6,551.2 247.2,552.3 246.9,553.5 246.6,554.6 246.3,555.8 246.1,556.9 245.8,558.1 245.6,559.3 245.4,560.4 245.1,561.6 244.9,562.8 244.8,563.9 244.6,565.1 244.4,566.3 244.3,567.4 244.2,568.6 244.1,569.8 244.0,571.0 243.9,572.1 243.8,573.3 243.8,574.5 243.7,575.7 243.7,576.9 243.7,578.0 243.7,579.2 243.7,580.4 243.7,581.6 243.8,582.8 243.8,584.0 243.9,585.1 244.0,586.3 244.1,587.5 244.2,588.7 244.4,589.9 244.5,591.1 244.7,592.3 244.9,593.5 245.1,594.6 245.3,595.8 245.5,597.0 245.8,598.2 246.0,599.4 246.3,600.6 246.6,601.8 246.9,603.0 247.2,604.1 247.6,605.3 247.9,606.5 248.3,607.7 248.6,608.9 249.0,610.1 249.5,611.2 249.9,612.4 250.3,613.6 250.8,614.8 251.3,615.9 251.7,617.1 252.2,618.3 252.8,619.5 253.3,620.6 253.9,621.8 254.4,623.0 255.0,624.1 255.6,625.3 256.2,626.5 256.8,627.6 257.5,628.8 258.1,629.9 258.8,631.1 259.5,632.2 260.2,633.4 260.9,634.5 261.7,635.7 262.4,636.8 263.2,638.0 264.0,639.1 264.8,640.3 265.6,641.4 266.4,642.5 267.3,643.6 268.1,644.8 269.0,645.9 269.9,647.0 270.8,648.1 271.7,649.2 272.6,650.3 273.6,651.4 274.6,652.5 275.5,653.6 276.5,654.7 277.6,655.8 278.6,656.9 279.6,658.0 280.7,659.1 281.8,660.2 282.8,661.2 283.9,662.3 285.1,663.4 286.2,664.4 287.3,665.5 288.5,666.5 289.7,667.6 290.9,668.6 292.1,669.6 293.3,670.7 294.5,671.7 295.8,672.7 297.1,673.7 298.3,674.8 299.6,675.8 300.9,676.8 302.3,677.8 303.6,678.8 304.9,679.7 306.3,680.7 307.7,681.7 309.1,682.7 310.5,683.6 311.9,684.6 313.3,685.6 314.8,686.5 316.3,687.4 317.7,688.4 319.2,689.3 320.7,690.2 322.2,691.2 323.8,692.1 325.3,693.0 326.9,693.9 328.4,694.8 330.0,695.6 331.6,696.5 333.2,697.4 334.9,698.3 336.5,699.1 338.1,700.0 339.8,700.8 341.5,701.7 343.1,702.5 344.8,703.3 346.6,704.1 348.3,705.0 350.0,705.8 351.8,706.5 353.5,707.3 355.3,708.1 357.1,708.9 358.9,709.7 360.7,710.4 362.5,711.2 364.3,711.9 366.1,712.6 368.0,713.4 369.8,714.1 371.7,714.8 373.6,715.5 375.5,716.2 377.4,716.9 379.3,717.6 381.2,718.2 383.2,718.9 385.1,719.6 387.1,720.2 389.0,720.8 391.0,721.5 393.0,722.1 395.0,722.7 397.0,723.3 399.0,723.9 401.0,724.5 403.0,725.1 405.1,725.6 407.1,726.2 409.2,726.7 411.2,727.3 413.3,727.8 415.4,728.3 417.5,728.9 419.6,729.4 421.7,729.9 423.8,730.3 425.9,730.8 428.0,731.3 430.2,731.7 432.3,732.2 434.5,732.6 436.6,733.1 438.8,733.5 440.9,733.9 443.1,734.3 445.3,734.7 447.5,735.1 449.7,735.4 451.9,735.8 454.1,736.2 456.3,736.5 458.5,736.8 460.7,737.2 463.0,737.5 465.2,737.8 467.4,738.1 469.7,738.4 471.9,738.6 474.2,738.9 476.4,739.1 478.7,739.4 481.0,739.6 483.2,739.9 485.5,740.1 487.8,740.3 490.0,740.5 492.3,740.6 494.6,740.8 496.9,741.0 499.2,741.1 501.5,741.3 503.8,741.4 506.1,741.5 508.4,741.6 510.7,741.7 513.0,741.8 515.3,741.9 517.6,742.0 519.9,742.0 522.2,742.1 524.5,742.1 526.8,742.2 529.2,742.2 531.5,742.2 533.8,742.2 536.1,742.2 538.4,742.2 540.7,742.1 543.0,742.1 545.3,742.0 547.7,742.0 550.0,741.9 552.3,741.8 554.6,741.7 556.9,741.6 559.2,741.5 561.5,741.4 563.8,741.2 566.1,741.1 568.4,740.9 570.7,740.8 573.0,740.6 575.3,740.4 577.6,740.2 579.9,740.0 582.2,739.8 584.5,739.6 586.8,739.3 589.0,739.1 591.3,738.8 593.6,738.6 595.8,738.3 598.1,738.0 600.4,737.7 602.6,737.4 604.9,737.1 607.1,736.8 609.4,736.4 611.6,736.1 613.8,735.7 616.1,735.4 618.3,735.0 620.5,734.6 622.7,734.2 624.9,733.8 627.1,733.4 629.3,733.0 631.5,732.6 633.7,732.1 635.9,731.7 638.0,731.2 640.2,730.7 642.3,730.3 644.5,729.8 646.6,729.3 648.8,728.8 650.9,728.2 653.0,727.7 655.1,727.2 657.2,726.6 659.3,726.1 661.4,725.5 663.5,725.0 665.6,724.4 667.6,723.8 669.7,723.2 671.7,722.6 673.8,722.0 675.8,721.4 677.8,720.7 679.8,720.1 681.8,719.5 683.8,718.8 685.8,718.1 687.8,717.5 689.7,716.8 691.7,716.1 693.6,715.4 695.6,714.7 697.5,714.0 699.4,713.3 701.3,712.5 703.2,711.8 705.1,711.1 707.0,710.3 708.8,709.5 710.7,708.8 712.5,708.0 714.3,707.2 716.2,706.4 718.0,705.6 719.8,704.8 721.5,704.0 723.3,703.2 725.1,702.4 726.8,701.5 728.6,700.7 730.3,699.9 732.0,699.0 733.7,698.1 735.4,697.3 737.0,696.4 738.7,695.5 740.4,694.6 742.0,693.8 743.6,692.9 745.2,691.9 746.8,691.0 748.4,690.1 750.0,689.2 751.6,688.3 753.1,687.3 754.6,686.4 756.2,685.4 757.7,684.5 759.2,683.5 760.6,682.6 762.1,681.6 763.6,680.6 765.0,679.6 766.4,678.7 767.8,677.7 769.2,676.7 770.6,675.7 772.0,674.7 773.4,673.6 774.7,672.6 776.0,671.6 777.3,670.6 778.6,669.6 779.9,668.5 781.2,667.5 782.5,666.4 783.7,665.4 784.9,664.3 786.2,663.3 787.4,662.2 788.5,661.1 789.7,660.1 790.9,659.0 792.0,657.9 793.1,656.8 794.2,655.8 795.3,654.7 796.4,653.6 797.5,652.5 798.5,651.4 799.6,650.3 800.6,649.2 801.6,648.1 802.6,646.9 803.6,645.8 804.5,644.7 805.5,643.6 806.4,642.5 807.3,641.3 808.2,640.2 809.1,639.1 810.0,637.9 810.9,636.8 811.7,635.7 812.5,634.5 813.3,633.4 814.1,632.2 814.9,631.1 815.7,629.9 816.4,628.8 817.2,627.6 817.9,626.4 818.6,625.3 819.3,624.1 820.0,623.0 820.6,621.8 821.3,620.6 821.9,619.5 822.5,618.3 823.1,617.1 823.7,615.9 824.2,614.8 824.8,613.6 825.3,612.4 825.9,611.2 826.4,610.1 826.8,608.9 827.3,607.7 827.8,606.5 828.2,605.3 828.7,604.2 829.1,603.0 829.5,601.8 829.9,600.6 830.2,599.4 830.6,598.2 830.9,597.1 831.2,595.9 831.6,594.7 831.8,593.5 832.1,592.3 832.4,591.1 832.6,589.9 832.9,588.8 833.1,587.6 833.3,586.4 833.5,585.2 833.7,584.0 833.8,582.8 834.0,581.7 834.1,580.5 834.2,579.3 834.3,578.1 834.4,576.9 834.5,575.8 834.5,574.6 834.6,573.4 834.6,572.2 834.6,571.1 834.6,569.9 834.6,568.7 834.5,567.5 834.5,566.4 834.4,565.2 834.4,564.0 834.3,562.9 834.2,561.7 834.1,560.5 833.9,559.4 833.8,558.2 833.6,557.1 833.4,555.9 833.3,554.7 833.1,553.6 832.8,552.4 832.6,551.3 832.4,550.1 832.1,549.0 831.8,547.9 831.6,546.7 831.3,545.6 831.0,544.4 830.6,543.3 830.3,542.2 829.9,541.1 829.6,539.9 829.2,538.8 828.8,537.7 828.4,536.6 828.0,535.4 827.5,534.3 827.1,533.2 826.6,532.1 826.2,531.0 825.7,529.9 825.2,528.8 824.7,527.7 824.2,526.6 823.6,525.5 823.1,524.4 822.5,523.4 822.0,522.3 821.4,521.2 820.8,520.1 820.2,519.1 819.5,518.0 818.9,516.9 818.3,515.9 817.6,514.8 816.9,513.8 816.2,512.7 815.5,511.7 814.8,510.6 814.1,509.6 813.4,508.5 812.6,507.5 811.9,506.5 811.1,505.5 810.3,504.4 809.6,503.4 808.8,502.4 807.9,501.4 807.1,500.4 806.3,499.4 805.4,498.4 804.6,497.4 803.7,496.4 802.8,495.4 801.9,494.4 801.0,493.5 800.1,492.5 799.2,491.5 798.3,490.6 797.3,489.6 796.4,488.7 795.4,487.7 794.4,486.8 793.4,485.8 792.4,484.9 791.4,483.9 790.4,483.0 789.4,482.1 788.4,481.2 787.3,480.3 786.3,479.4 785.2,478.4 784.1,477.5 783.0,476.7 781.9,475.8 780.8,474.9 779.7,474.0 778.6,473.1 777.4,472.2M783.9,654.4 785.1,653.3 786.2,652.3 787.3,651.2 788.4,650.1 789.5,649.1 790.6,648.0 791.7,647.0 792.7,645.9 793.8,644.8 794.8,643.7 795.8,642.6 796.8,641.6 797.8,640.5 798.7,639.4 799.7,638.3 800.6,637.2 801.5,636.1 802.4,635.0 803.3,633.9 804.2,632.8 805.0,631.7 805.9,630.5 806.7,629.4 807.5,628.3 808.3,627.2 809.1,626.1 809.9,624.9 810.6,623.8 811.4,622.7 812.1,621.6 812.8,620.4 813.5,619.3 814.2,618.2 814.9,617.0 815.5,615.9 816.2,614.7 816.8,613.6 817.4,612.4 818.0,611.3 818.5,610.2 819.1,609.0 819.7,607.9 820.2,606.7 820.7,605.6 821.2,604.4 821.7,603.2 822.2,602.1 822.6,600.9 823.1,599.8 823.5,598.6 823.9,597.5 824.3,596.3 824.7,595.2 825.0,594.0 825.4,592.8 825.7,591.7 826.0,590.5 826.4,589.4 826.6,588.2 826.9,587.0 827.2,585.9 827.4,584.7 827.7,583.6 827.9,582.4 828.1,581.2 828.3,580.1 828.5,578.9 828.6,577.8 828.8,576.6 828.9,575.4 829.0,574.3 829.1,573.1 829.2,572.0 829.3,570.8 829.3,569.7 829.4,568.5 829.4,567.4 829.4,566.2 829.4,565.1 829.4,563.9 829.4,562.8 829.3,561.6 829.3,560.5 829.2,559.3 829.1,558.2 829.0,557.0 828.9,555.9 828.8,554.8 828.7,553.6 828.5,552.5 828.4,551.4 828.2,550.2 828.0,549.1 827.8,548.0 827.5,546.9 827.3,545.7 827.1,544.6 826.8,543.5 826.5,542.4 826.2,541.3 825.9,540.1 825.6,539.0 825.3,537.9 825.0,536.8 824.6,535.7 824.2,534.6 823.8,533.5 823.5,532.4 823.0,531.3 822.6,530.2 822.2,529.1 821.7,528.1 821.3,527.0 820.8,525.9 820.3,524.8 819.8,523.7 819.3,522.7 818.8,521.6 818.3,520.5 817.7,519.5 817.2,518.4 816.6,517.4 816.0,516.3 815.4,515.3 814.8,514.2 814.2,513.2 813.6,512.1 812.9,511.1 812.2,510.1 811.6,509.0 810.9,508.0 810.2,507.0 809.5,506.0 808.8,504.9 808.1,503.9 807.3,502.9 806.6,501.9 805.8,500.9 805.0,499.9 804.3,498.9 803.5,497.9 802.7,496.9 801.8,496.0 801.0,495.0 800.2,494.0 799.3,493.0 798.5,492.1 797.6,491.1 796.7,490.2 795.8,489.2 794.9,488.3 794.0,487.3 793.1,486.4 792.1,485.4 791.2,484.5 790.2,483.6 789.2,482.6 788.3,481.7 787.3,480.8 786.3,479.9 785.3,479.0 784.3,478.1 783.2,477.2 782.2,476.3 781.1,475.4 780.1,474.5 779.0,473.7 777.9,472.8 776.8,471.9 775.8,471.0 774.6,470.2 773.5,469.3 772.4,468.5 771.3,467.6 770.1,466.8 769.0,466.0 767.8,465.1 766.6,464.3 765.5,463.5 764.3,462.7 763.1,461.9 761.9,461.0 760.7,460.2 759.4,459.5 758.2,458.7 757.0,457.9 755.7,457.1 754.5,456.3 753.2,455.5 751.9,454.8 750.6,454.0 749.4,453.3 748.1,452.5 746.7,451.8 745.4,451.0 744.1,450.3 742.8,449.6 741.4,448.9 740.1,448.1 738.8,447.4 737.4,446.7 736.0,446.0 734.6,445.3 733.3,444.6 731.9,443.9 730.5,443.3 729.1,442.6 727.7,441.9 726.2,441.3 724.8,440.6 723.4,440.0 722.0,439.3 720.5,438.7 719.1,438.0 717.6,437.4 716.1,436.8 714.7,436.2 713.2,435.6 711.7,435.0 710.2,434.4 708.7,433.8 707.2,433.2 705.7,432.6 704.2,432.0 702.7,431.4 701.1,430.9 699.6,430.3 698.0,429.8 696.5,429.2 695.0,428.7 693.4,428.1 691.8,427.6 690.3,427.1 688.7,426.6 687.1,426.0 685.5,425.5 683.9,425.0 682.3,424.5 680.7,424.1 679.1,423.6 677.5,423.1 675.9,422.6 674.3,422.2 672.7,421.7 671.0,421.2 669.4,420.8 667.8,420.4 666.1,419.9 664.5,419.5 662.8,419.1 661.2,418.7 659.5,418.2 657.8,417.8 656.2,417.4 654.5,417.1 652.8,416.7 651.1,416.3 649.4,415.9 647.8,415.5 646.1,415.2 644.4,414.8 642.7,414.5 641.0,414.1 639.3,413.8 637.5,413.5 635.8,413.1 634.1,412.8 632.4,412.5 630.7,412.2 628.9,411.9 627.2,411.6 625.5,411.3 623.7,411.1 622.0,410.8 620.2,410.5 618.5,410.2 616.8,410.0 615.0,409.7 613.2,409.5 611.5,409.3 609.7,409.0 608.0,408.8 606.2,408.6 604.4,408.4 602.7,408.2 600.9,408.0 599.1,407.8 597.3,407.6 595.6,407.4 593.8,407.2 592.0,407.1 590.2,406.9 588.4,406.8 586.7,406.6 584.9,406.5 583.1,406.3 581.3,406.2 579.5,406.1 577.7,406.0 575.9,405.9 574.1,405.8 572.3,405.7 570.5,405.6 568.7,405.5 566.9,405.4 565.1,405.3 563.3,405.3 561.5,405.2 559.7,405.2 557.9,405.1 556.1,405.1 554.3,405.0 552.5,405.0 550.6,405.0 548.8,405.0 547.0,405.0 545.2,405.0 543.4,405.0 541.6,405.0 539.8,405.0 538.0,405.0 536.2,405.1 534.4,405.1 532.5,405.1 530.7,405.2 528.9,405.2 527.1,405.3 525.3,405.4 523.5,405.5 521.7,405.5 519.9,405.6 518.1,405.7 516.3,405.8 514.5,405.9 512.7,406.0 510.9,406.2 509.1,406.3 507.3,406.4 505.5,406.6 503.7,406.7 501.9,406.9 500.1,407.0 498.3,407.2 496.5,407.3 494.7,407.5 492.9,407.7 491.1,407.9 489.3,408.1 487.5,408.3 485.7,408.5 483.9,408.7 482.2,408.9 480.4,409.2 478.6,409.4 476.8,409.6 475.1,409.9 473.3,410.1 471.5,410.4 469.7,410.7 468.0,410.9 466.2,411.2 464.5,411.5 462.7,411.8 460.9,412.1 459.2,412.4 457.4,412.7 455.7,413.0 454.0,413.3 452.2,413.7 450.5,414.0 448.7,414.3 447.0,414.7 445.3,415.0 443.6,415.4 441.8,415.8 440.1,416.1 438.4,416.5 436.7,416.9 435.0,417.3 433.3,417.7 431.6,418.1 429.9,418.5 428.2,418.9 426.5,419.3 424.8,419.8 423.1,420.2 421.4,420.6 419.8,421.1 418.1,421.5 416.4,422.0 414.8,422.4 413.1,422.9 411.5,423.4 409.8,423.9 408.2,424.4 406.5,424.8 404.9,425.3 403.3,425.8 401.7,426.4 400.0,426.9 398.4,427.4 396.8,427.9 395.2,428.5 393.6,429.0 392.0,429.6 390.4,430.1 388.8,430.7 387.3,431.2 385.7,431.8 384.1,432.4 382.6,433.0 381.0,433.5 379.5,434.1 377.9,434.7 376.4,435.3 374.8,435.9 373.3,436.6 371.8,437.2 370.3,437.8 368.8,438.4 367.3,439.1 365.8,439.7 364.3,440.4 362.8,441.0 361.3,441.7 359.9,442.4 358.4,443.0 356.9,443.7 355.5,444.4 354.1,445.1 352.6,445.8 351.2,446.5 349.8,447.2 348.4,447.9 346.9,448.6 345.5,449.3 344.2,450.1 342.8,450.8 341.4,451.5 340.0,452.3 338.7,453.0 337.3,453.8 336.0,454.5 334.6,455.3 333.3,456.1 332.0,456.9 330.6,457.6 329.3,458.4 328.0,459.2 326.7,460.0 325.5,460.8 324.2,461.6 322.9,462.4 321.7,463.2 320.4,464.1 319.2,464.9 317.9,465.7 316.7,466.5 315.5,467.4 314.3,468.2 313.1,469.1 311.9,469.9 310.7,470.8 309.5,471.7 308.4,472.5 307.2,473.4 306.1,474.3 305.0,475.2 303.8,476.1 302.7,477.0 301.6,477.9 300.5,478.8 299.4,479.7 298.3,480.6 297.3,481.5 296.2,482.4 295.2,483.3 294.1,484.3 293.1,485.2 292.1,486.1 291.1,487.1 290.1,488.0 289.1,489.0 288.1,489.9 287.2,490.9 286.2,491.8 285.3,492.8 284.3,493.8 283.4,494.8 282.5,495.7 281.6,496.7 280.7,497.7 279.8,498.7 279.0,499.7 278.1,500.7 277.3,501.7 276.4,502.7 275.6,503.7 274.8,504.7 274.0,505.7 273.2,506.8 272.4,507.8 271.6,508.8 270.9,509.8 270.1,510.9 269.4,511.9 268.7,513.0 268.0,514.0 267.3,515.1 266.6,516.1 265.9,517.2 265.3,518.2 264.6,519.3 264.0,520.3 263.4,521.4 262.8,522.5 262.2,523.6 261.6,524.6 261.0,525.7 260.4,526.8 259.9,527.9 259.3,529.0 258.8,530.1 258.3,531.2 257.8,532.2 257.3,533.3 256.8,534.4 256.4,535.6 255.9,536.7 255.5,537.8 255.1,538.9 254.7,540.0 254.3,541.1 253.9,542.2 253.5,543.3 253.2,544.5 252.8,545.6 252.5,546.7 252.2,547.8 251.9,549.0 251.6,550.1 251.3,551.2 251.1,552.4 250.8,553.5 250.6,554.6 250.4,555.8 250.2,556.9 250.0,558.1 249.8,559.2 249.6,560.4 249.5,561.5 249.4,562.7 249.2,563.8 249.1,565.0 249.0,566.1 249.0,567.3 248.9,568.4 248.9,569.6 248.8,570.7 248.8,571.9 248.8,573.0 248.8,574.2 248.8,575.4 248.9,576.5 248.9,577.7 249.0,578.8 249.1,580.0 249.1,581.2 249.3,582.3 249.4,583.5 249.5,584.6 249.7,585.8 249.8,587.0 250.0,588.1 250.2,589.3 250.4,590.5 250.7,591.6 250.9,592.8 251.2,593.9 251.4,595.1 251.7,596.3 252.0,597.4 252.4,598.6 252.7,599.7 253.0,600.9 253.4,602.1 253.8,603.2 254.2,604.4 254.6,605.5 255.0,606.7 255.4,607.8 255.9,609.0 256.4,610.1 256.8,611.3 257.3,612.4 257.9,613.6 258.4,614.7 258.9,615.9 259.5,617.0 260.1,618.2 260.7,619.3 261.3,620.4 261.9,621.6 262.5,622.7 263.2,623.8 263.8,625.0 264.5,626.1 265.2,627.2 265.9,628.3 266.7,629.5 267.4,630.6 268.1,631.7 268.9,632.8 269.7,633.9 270.5,635.0 271.3,636.1 272.2,637.2 273.0,638.3 273.9,639.4 274.7,640.5 275.6,641.6 276.5,642.7 277.5,643.8 278.4,644.9 279.4,645.9 280.3,647.0 281.3,648.1 282.3,649.1 283.3,650.2 284.3,651.3 285.4,652.3 286.4,653.4 287.5,654.4 288.6,655.5 289.7,656.5 290.8,657.5 291.9,658.6 293.1,659.6 294.2,660.6 295.4,661.6 296.6,662.6 297.8,663.7 299.0,664.7 300.3,665.7 301.5,666.7 302.8,667.6 304.0,668.6 305.3,669.6 306.6,670.6 307.9,671.6 309.3,672.5 310.6,673.5 312.0,674.4 313.3,675.4 314.7,676.3 316.1,677.3 317.5,678.2 318.9,679.1 320.4,680.0 321.8,680.9 323.3,681.9 324.8,682.8 326.3,683.7 327.8,684.5 329.3,685.4 330.8,686.3 332.4,687.2 333.9,688.0 335.5,688.9 337.1,689.8 338.7,690.6 340.3,691.4 341.9,692.3 343.5,693.1 345.1,693.9 346.8,694.7 348.5,695.5 350.1,696.3 351.8,697.1 353.5,697.9 355.3,698.7 357.0,699.5 358.7,700.2 360.5,701.0 362.2,701.7 364.0,702.5 365.8,703.2 367.6,703.9 369.4,704.6 371.2,705.4 373.0,706.1 374.9,706.8 376.7,707.4 378.6,708.1 380.4,708.8 382.3,709.5 384.2,710.1 386.1,710.8 388.0,711.4 389.9,712.0 391.8,712.6 393.8,713.3 395.7,713.9 397.7,714.5 399.6,715.1 401.6,715.6 403.6,716.2 405.6,716.8 407.6,717.3 409.6,717.9 411.6,718.4 413.6,718.9 415.7,719.5 417.7,720.0 419.8,720.5 421.8,721.0 423.9,721.4 426.0,721.9 428.0,722.4 430.1,722.8 432.2,723.3 434.3,723.7 436.4,724.2 438.5,724.6 440.7,725.0 442.8,725.4 444.9,725.8 447.1,726.2 449.2,726.5 451.4,726.9 453.5,727.2 455.7,727.6 457.8,727.9 460.0,728.3 462.2,728.6 464.4,728.9 466.6,729.2 468.8,729.5 471.0,729.7 473.2,730.0 475.4,730.3 477.6,730.5 479.8,730.7 482.0,731.0 484.3,731.2 486.5,731.4 488.7,731.6 490.9,731.8 493.2,732.0 495.4,732.1 497.7,732.3 499.9,732.4 502.2,732.6 504.4,732.7 506.7,732.8 508.9,732.9 511.2,733.0 513.4,733.1 515.7,733.2 518.0,733.3 520.2,733.3 522.5,733.4 524.8,733.4 527.0,733.5 529.3,733.5 531.6,733.5 533.8,733.5 536.1,733.5 538.4,733.5 540.6,733.4 542.9,733.4 545.2,733.3 547.4,733.3 549.7,733.2 552.0,733.1 554.2,733.0 556.5,732.9 558.8,732.8 561.0,732.7 563.3,732.6 565.6,732.4 567.8,732.3 570.1,732.1 572.3,731.9 574.6,731.8 576.8,731.6 579.1,731.4 581.3,731.2 583.6,730.9 585.8,730.7 588.0,730.5 590.3,730.2 592.5,730.0 594.7,729.7 596.9,729.4 599.1,729.1 601.4,728.8 603.6,728.5 605.8,728.2 608.0,727.9 610.2,727.5 612.3,727.2 614.5,726.8 616.7,726.5 618.9,726.1 621.1,725.7 623.2,725.3 625.4,724.9 627.5,724.5 629.7,724.1 631.8,723.6 633.9,723.2 636.1,722.8 638.2,722.3 640.3,721.8 642.4,721.4 644.5,720.9 646.6,720.4 648.7,719.9 650.8,719.4 652.8,718.8 654.9,718.3 657.0,717.8 659.0,717.2 661.1,716.7 663.1,716.1 665.1,715.5 667.1,715.0 669.1,714.4 671.1,713.8 673.1,713.2 675.1,712.5 677.1,711.9 679.1,711.3 681.0,710.7 683.0,710.0 684.9,709.4 686.8,708.7 688.7,708.0 690.6,707.3 692.5,706.7 694.4,706.0 696.3,705.3 698.2,704.5 700.0,703.8 701.9,703.1 703.7,702.4 705.6,701.6 707.4,700.9 709.2,700.1 711.0,699.4 712.8,698.6 714.5,697.8 716.3,697.0 718.0,696.2 719.8,695.4 721.5,694.6 723.2,693.8 724.9,693.0 726.6,692.2 728.3,691.3 730.0,690.5 731.6,689.7 733.3,688.8 734.9,687.9 736.5,687.1 738.1,686.2 739.7,685.3 741.3,684.4 742.9,683.6 744.5,682.7 746.0,681.8 747.5,680.8 749.1,679.9 750.6,679.0 752.1,678.1 753.5,677.2 755.0,676.2 756.5,675.3 757.9,674.3 759.3,673.4 760.8,672.4 762.2,671.5 763.5,670.5 764.9,669.5 766.3,668.5 767.6,667.6 769.0,666.6 770.3,665.6 771.6,664.6 772.9,663.6 774.2,662.6 775.4,661.6 776.7,660.5 777.9,659.5 779.1,658.5 780.4,657.5 781.6,656.4 782.7,655.4ZM760.8,644.5 761.9,643.6 762.9,642.7 764.0,641.7 765.0,640.8 766.0,639.8 767.0,638.8 767.9,637.9 768.9,636.9 769.9,635.9 770.8,635.0 771.7,634.0 772.7,633.0 773.6,632.0 774.4,631.1 775.3,630.1 776.2,629.1 777.0,628.1 777.9,627.1 778.7,626.1 779.5,625.1 780.3,624.1 781.1,623.1 781.8,622.1 782.6,621.1 783.3,620.1 784.1,619.1 784.8,618.0 785.5,617.0 786.2,616.0 786.9,615.0 787.5,614.0 788.2,612.9 788.8,611.9 789.4,610.9 790.0,609.8 790.6,608.8 791.2,607.8 791.8,606.7 792.3,605.7 792.9,604.7 793.4,603.6 793.9,602.6 794.4,601.6 794.9,600.5 795.4,599.5 795.8,598.4 796.3,597.4 796.7,596.3 797.1,595.3 797.5,594.2 797.9,593.2 798.3,592.1 798.7,591.1 799.0,590.0 799.4,589.0 799.7,587.9 800.0,586.9 800.3,585.8 800.6,584.8 800.8,583.7 801.1,582.7 801.3,581.6 801.6,580.6 801.8,579.5 802.0,578.5 802.2,577.4 802.4,576.4 802.5,575.3 802.7,574.3 802.8,573.2 802.9,572.2 803.1,571.1 803.2,570.1 803.2,569.0 803.3,568.0 803.4,566.9 803.4,565.9 803.5,564.8 803.5,563.8 803.5,562.7 803.5,561.7 803.5,560.6 803.4,559.6 803.4,558.6 803.3,557.5 803.3,556.5 803.2,555.4 803.1,554.4 803.0,553.4 802.9,552.3 802.7,551.3 802.6,550.3 802.4,549.3 802.2,548.2 802.1,547.2 801.9,546.2 801.7,545.2 801.4,544.1 801.2,543.1 801.0,542.1 800.7,541.1 800.4,540.1 800.2,539.1 799.9,538.0 799.6,537.0 799.2,536.0 798.9,535.0 798.6,534.0 798.2,533.0 797.8,532.0 797.5,531.0 797.1,530.0 796.7,529.1 796.3,528.1 795.8,527.1 795.4,526.1 794.9,525.1 794.5,524.1 794.0,523.2 793.5,522.2 793.0,521.2 792.5,520.3 792.0,519.3 791.5,518.3 791.0,517.4 790.4,516.4 789.8,515.5 789.3,514.5 788.7,513.6 788.1,512.6 787.5,511.7 786.9,510.8 786.2,509.8 785.6,508.9 785.0,508.0 784.3,507.0 783.6,506.1 782.9,505.2 782.2,504.3 781.5,503.4 780.8,502.5 780.1,501.6 779.4,500.7 778.6,499.8 777.9,498.9 777.1,498.0 776.3,497.1 775.6,496.2 774.8,495.3 774.0,494.5 773.1,493.6 772.3,492.7 771.5,491.9 770.6,491.0 769.8,490.1 768.9,489.3 768.1,488.4 767.2,487.6 766.3,486.7 765.4,485.9 764.5,485.1 763.6,484.3 762.6,483.4 761.7,482.6 760.7,481.8 759.8,481.0 758.8,480.2 757.8,479.4 756.9,478.6 755.9,477.8 754.9,477.0 753.9,476.2 752.8,475.4 751.8,474.6 750.8,473.9 749.7,473.1 748.7,472.3 747.6,471.6 746.5,470.8 745.5,470.1 744.4,469.3 743.3,468.6 742.2,467.8 741.1,467.1 740.0,466.4 738.8,465.6 737.7,464.9 736.6,464.2 735.4,463.5 734.2,462.8 733.1,462.1 731.9,461.4 730.7,460.7 729.5,460.0 728.3,459.3 727.1,458.7 725.9,458.0 724.7,457.3 723.5,456.7 722.3,456.0 721.0,455.4 719.8,454.7 718.5,454.1 717.3,453.4 716.0,452.8 714.7,452.2 713.4,451.6 712.1,450.9 710.9,450.3 709.6,449.7 708.2,449.1 706.9,448.5 705.6,447.9 704.3,447.3 703.0,446.8 701.6,446.2 700.3,445.6 698.9,445.0 697.6,444.5 696.2,443.9 694.8,443.4 693.5,442.8 692.1,442.3 690.7,441.8 689.3,441.2 687.9,440.7 686.5,440.2 685.1,439.7 683.7,439.2 682.3,438.7 680.8,438.2 679.4,437.7 678.0,437.2 676.5,436.7 675.1,436.3 673.6,435.8 672.2,435.3 670.7,434.9 669.2,434.4 667.8,434.0 666.3,433.5 664.8,433.1 663.3,432.7 661.9,432.2 660.4,431.8 658.9,431.4 657.4,431.0 655.9,430.6 654.3,430.2 652.8,429.8 651.3,429.4 649.8,429.0 648.3,428.7 646.7,428.3 645.2,427.9 643.7,427.6 642.1,427.2 640.6,426.9 639.0,426.5 637.5,426.2 635.9,425.9 634.3,425.5 632.8,425.2 631.2,424.9 629.6,424.6 628.1,424.3 626.5,424.0 624.9,423.7 623.3,423.4 621.7,423.2 620.1,422.9 618.6,422.6 617.0,422.4 615.4,422.1 613.8,421.9 612.2,421.6 610.5,421.4 608.9,421.2 607.3,420.9 605.7,420.7 604.1,420.5 602.5,420.3 600.9,420.1 599.2,419.9 597.6,419.7 596.0,419.5 594.4,419.3 592.7,419.2 591.1,419.0 589.5,418.8 587.8,418.7 586.2,418.5 584.5,418.4 582.9,418.3 581.3,418.1 579.6,418.0 578.0,417.9 576.3,417.8 574.7,417.7 573.0,417.6 571.4,417.5 569.7,417.4 568.1,417.3 566.4,417.2 564.7,417.1 563.1,417.1 561.4,417.0 559.8,417.0 558.1,416.9 556.4,416.9 554.8,416.8 553.1,416.8 551.5,416.8 549.8,416.8 548.1,416.7 546.5,416.7 544.8,416.7 543.1,416.7 541.5,416.8 539.8,416.8 538.2,416.8 536.5,416.8 534.8,416.9 533.2,416.9 531.5,416.9 529.8,417.0 528.2,417.1 526.5,417.1 524.8,417.2 523.2,417.3 521.5,417.3 519.9,417.4 518.2,417.5 516.5,417.6 514.9,417.7 513.2,417.8 511.6,418.0 509.9,418.1 508.3,418.2 506.6,418.3 505.0,418.5 503.3,418.6 501.6,418.8 500.0,418.9 498.4,419.1 496.7,419.3 495.1,419.5 493.4,419.6 491.8,419.8 490.1,420.0 488.5,420.2 486.9,420.4 485.2,420.6 483.6,420.8 482.0,421.1 480.3,421.3 478.7,421.5 477.1,421.8 475.5,422.0 473.8,422.3 472.2,422.5 470.6,422.8 469.0,423.1 467.4,423.3 465.8,423.6 464.2,423.9 462.6,424.2 461.0,424.5 459.4,424.8 457.8,425.1 456.2,425.4 454.6,425.7 453.0,426.1 451.4,426.4 449.8,426.7 448.3,427.1 446.7,427.4 445.1,427.8 443.5,428.2 442.0,428.5 440.4,428.9 438.9,429.3 437.3,429.7 435.8,430.0 434.2,430.4 432.7,430.8 431.1,431.2 429.6,431.7 428.1,432.1 426.6,432.5 425.0,432.9 423.5,433.4 422.0,433.8 420.5,434.2 419.0,434.7 417.5,435.2 416.0,435.6 414.5,436.1 413.0,436.6 411.5,437.0 410.1,437.5 408.6,438.0 407.1,438.5 405.6,439.0 404.2,439.5 402.7,440.0 401.3,440.5 399.8,441.1 398.4,441.6 397.0,442.1 395.5,442.7 394.1,443.2 392.7,443.7 391.3,444.3 389.9,444.9 388.5,445.4 387.1,446.0 385.7,446.6 384.3,447.1 382.9,447.7 381.6,448.3 380.2,448.9 378.9,449.5 377.5,450.1 376.2,450.7 374.8,451.4 373.5,452.0 372.1,452.6 370.8,453.2 369.5,453.9 368.2,454.5 366.9,455.2 365.6,455.8 364.3,456.5 363.0,457.1 361.8,457.8 360.5,458.5 359.2,459.1 358.0,459.8 356.7,460.5 355.5,461.2 354.3,461.9 353.0,462.6 351.8,463.3 350.6,464.0 349.4,464.7 348.2,465.4 347.0,466.2 345.8,466.9 344.6,467.6 343.5,468.4 342.3,469.1 341.2,469.8 340.0,470.6 338.9,471.4 337.8,472.1 336.7,472.9 335.5,473.6 334.4,474.4 333.3,475.2 332.3,476.0 331.2,476.8 330.1,477.6 329.1,478.4 328.0,479.2 327.0,480.0 325.9,480.8 324.9,481.6 323.9,482.4 322.9,483.2 321.9,484.0 320.9,484.9 319.9,485.7 318.9,486.5 318.0,487.4 317.0,488.2 316.1,489.1 315.1,489.9 314.2,490.8 313.3,491.6 312.4,492.5 311.5,493.4 310.6,494.3 309.7,495.1 308.8,496.0 308.0,496.9 307.1,497.8 306.3,498.7 305.5,499.6 304.7,500.5 303.8,501.4 303.0,502.3 302.3,503.2 301.5,504.1 300.7,505.0 299.9,505.9 299.2,506.8 298.5,507.8 297.7,508.7 297.0,509.6 296.3,510.6 295.6,511.5 294.9,512.5 294.3,513.4 293.6,514.3 292.9,515.3 292.3,516.2 291.7,517.2 291.0,518.2 290.4,519.1 289.8,520.1 289.3,521.1 288.7,522.0 288.1,523.0 287.6,524.0 287.0,525.0 286.5,525.9 286.0,526.9 285.5,527.9 285.0,528.9 284.5,529.9 284.0,530.9 283.6,531.9 283.1,532.9 282.7,533.9 282.2,534.9 281.8,535.9 281.4,536.9 281.0,537.9 280.7,538.9 280.3,539.9 279.9,540.9 279.6,542.0 279.3,543.0 278.9,544.0 278.6,545.0 278.4,546.0 278.1,547.1 277.8,548.1 277.5,549.1 277.3,550.2 277.1,551.2 276.9,552.2 276.6,553.3 276.5,554.3 276.3,555.3 276.1,556.4 276.0,557.4 275.8,558.5 275.7,559.5 275.6,560.5 275.5,561.6 275.4,562.6 275.3,563.7 275.2,564.7 275.2,565.8 275.1,566.8 275.1,567.9 275.1,568.9 275.1,570.0 275.1,571.0 275.1,572.1 275.2,573.1 275.2,574.2 275.3,575.2 275.4,576.3 275.5,577.3 275.6,578.4 275.7,579.5 275.8,580.5 276.0,581.6 276.1,582.6 276.3,583.7 276.5,584.7 276.7,585.8 276.9,586.8 277.1,587.9 277.4,588.9 277.6,590.0 277.9,591.0 278.2,592.1 278.5,593.1 278.8,594.2 279.1,595.2 279.4,596.3 279.8,597.3 280.1,598.4 280.5,599.4 280.9,600.5 281.3,601.5 281.7,602.6 282.1,603.6 282.6,604.7 283.0,605.7 283.5,606.7 284.0,607.8 284.5,608.8 285.0,609.8 285.5,610.9 286.1,611.9 286.6,612.9 287.2,614.0 287.8,615.0 288.4,616.0 289.0,617.0 289.6,618.0 290.2,619.1 290.9,620.1 291.5,621.1 292.2,622.1 292.9,623.1 293.6,624.1 294.3,625.1 295.1,626.1 295.8,627.1 296.6,628.1 297.3,629.1 298.1,630.1 298.9,631.1 299.7,632.1 300.5,633.1 301.4,634.0 302.2,635.0 303.1,636.0 304.0,636.9 304.9,637.9 305.8,638.9 306.7,639.8 307.6,640.8 308.6,641.7 309.5,642.7 310.5,643.6 311.5,644.6 312.5,645.5 313.5,646.5 314.5,647.4 315.5,648.3 316.6,649.2 317.7,650.2 318.7,651.1 319.8,652.0 320.9,652.9 322.0,653.8 323.2,654.7 324.3,655.6 325.5,656.5 326.6,657.4 327.8,658.2 329.0,659.1 330.2,660.0 331.4,660.8 332.6,661.7 333.9,662.6 335.1,663.4 336.4,664.3 337.6,665.1 338.9,665.9 340.2,666.8 341.5,667.6 342.9,668.4 344.2,669.2 345.5,670.0 346.9,670.8 348.3,671.6 349.6,672.4 351.0,673.2 352.4,674.0 353.9,674.8 355.3,675.5 356.7,676.3 358.2,677.1 359.6,677.8 361.1,678.6 362.6,679.3 364.1,680.0 365.6,680.8 367.1,681.5 368.6,682.2 370.1,682.9 371.7,683.6 373.2,684.3 374.8,685.0 376.4,685.7 378.0,686.3 379.6,687.0 381.2,687.7 382.8,688.3 384.4,689.0 386.0,689.6 387.7,690.3 389.3,690.9 391.0,691.5 392.7,692.1 394.4,692.7 396.1,693.3 397.8,693.9 399.5,694.5 401.2,695.1 402.9,695.7 404.6,696.2 406.4,696.8 408.1,697.3 409.9,697.9 411.7,698.4 413.4,698.9 415.2,699.4 417.0,699.9 418.8,700.5 420.6,700.9 422.4,701.4 424.3,701.9 426.1,702.4 427.9,702.8 429.8,703.3 431.6,703.8 433.5,704.2 435.3,704.6 437.2,705.0 439.1,705.5 441.0,705.9 442.9,706.3 444.8,706.7 446.7,707.0 448.6,707.4 450.5,707.8 452.4,708.1 454.3,708.5 456.3,708.8 458.2,709.2 460.1,709.5 462.1,709.8 464.0,710.1 466.0,710.4 467.9,710.7 469.9,711.0 471.9,711.3 473.9,711.5 475.8,711.8 477.8,712.0 479.8,712.3 481.8,712.5 483.8,712.7 485.8,712.9 487.8,713.1 489.8,713.3 491.8,713.5 493.8,713.7 495.8,713.9 497.8,714.0 499.9,714.2 501.9,714.3 503.9,714.4 505.9,714.6 508.0,714.7 510.0,714.8 512.0,714.9 514.1,715.0 516.1,715.0 518.1,715.1 520.2,715.2 522.2,715.2 524.2,715.3 526.3,715.3 528.3,715.3 530.4,715.4 532.4,715.4 534.5,715.4 536.5,715.4 538.5,715.3 540.6,715.3 542.6,715.3 544.7,715.2 546.7,715.2 548.8,715.1 550.8,715.0 552.8,715.0 554.9,714.9 556.9,714.8 559.0,714.7 561.0,714.5 563.0,714.4 565.1,714.3 567.1,714.1 569.1,714.0 571.2,713.8 573.2,713.7 575.2,713.5 577.2,713.3 579.3,713.1 581.3,712.9 583.3,712.7 585.3,712.5 587.3,712.2 589.3,712.0 591.3,711.7 593.3,711.5 595.3,711.2 597.3,710.9 599.3,710.7 601.3,710.4 603.2,710.1 605.2,709.8 607.2,709.4 609.1,709.1 611.1,708.8 613.1,708.4 615.0,708.1 617.0,707.7 618.9,707.4 620.8,707.0 622.8,706.6 624.7,706.2 626.6,705.8 628.5,705.4 630.4,705.0 632.3,704.6 634.2,704.1 636.1,703.7 638.0,703.2 639.9,702.8 641.8,702.3 643.6,701.8 645.5,701.4 647.3,700.9 649.2,700.4 651.0,699.9 652.9,699.4 654.7,698.8 656.5,698.3 658.3,697.8 660.1,697.2 661.9,696.7 663.7,696.1 665.5,695.6 667.2,695.0 669.0,694.4 670.7,693.8 672.5,693.2 674.2,692.6 676.0,692.0 677.7,691.4 679.4,690.8 681.1,690.2 682.8,689.5 684.5,688.9 686.1,688.3 687.8,687.6 689.5,686.9 691.1,686.3 692.7,685.6 694.4,684.9 696.0,684.2 697.6,683.5 699.2,682.8 700.8,682.1 702.4,681.4 703.9,680.7 705.5,679.9 707.0,679.2 708.6,678.5 710.1,677.7 711.6,677.0 713.1,676.2 714.6,675.5 716.1,674.7 717.6,673.9 719.0,673.1 720.5,672.3 721.9,671.6 723.4,670.8 724.8,670.0 726.2,669.1 727.6,668.3 729.0,667.5 730.3,666.7 731.7,665.9 733.1,665.0 734.4,664.2 735.7,663.3 737.0,662.5 738.3,661.6 739.6,660.8 740.9,659.9 742.2,659.0 743.4,658.2 744.7,657.3 745.9,656.4 747.1,655.5 748.3,654.6 749.5,653.7 750.7,652.8 751.9,651.9 753.1,651.0 754.2,650.1 755.3,649.2 756.5,648.3 757.6,647.3 758.7,646.4 759.7,645.5ZM755.7,642.4 756.8,641.5 757.8,640.5 758.8,639.6 759.8,638.7 760.8,637.8 761.8,636.8 762.7,635.9 763.7,634.9 764.6,634.0 765.5,633.0 766.4,632.1 767.3,631.1 768.2,630.2 769.1,629.2 770.0,628.3 770.8,627.3 771.6,626.3 772.5,625.4 773.3,624.4 774.1,623.4 774.8,622.4 775.6,621.5 776.4,620.5 777.1,619.5 777.8,618.5 778.5,617.5 779.3,616.5 779.9,615.5 780.6,614.5 781.3,613.5 781.9,612.5 782.6,611.5 783.2,610.5 783.8,609.5 784.4,608.5 785.0,607.5 785.6,606.5 786.1,605.5 786.7,604.5 787.2,603.5 787.7,602.4 788.2,601.4 788.7,600.4 789.2,599.4 789.7,598.4 790.1,597.4 790.6,596.3 791.0,595.3 791.4,594.3 791.8,593.3 792.2,592.2 792.6,591.2 792.9,590.2 793.3,589.2 793.6,588.1 793.9,587.1 794.2,586.1 794.5,585.1 794.8,584.0 795.1,583.0 795.3,582.0 795.6,580.9 795.8,579.9 796.0,578.9 796.2,577.9 796.4,576.8 796.6,575.8 796.8,574.8 796.9,573.7 797.0,572.7 797.2,571.7 797.3,570.7 797.4,569.6 797.5,568.6 797.6,567.6 797.6,566.6 797.7,565.5 797.7,564.5 797.7,563.5 797.7,562.5 797.7,561.4 797.7,560.4 797.7,559.4 797.7,558.4 797.6,557.4 797.5,556.4 797.5,555.3 797.4,554.3 797.3,553.3 797.2,552.3 797.0,551.3 796.9,550.3 796.7,549.3 796.6,548.3 796.4,547.3 796.2,546.3 796.0,545.3 795.8,544.3 795.6,543.3 795.3,542.3 795.1,541.3 794.8,540.3 794.6,539.3 794.3,538.3 794.0,537.3 793.7,536.3 793.4,535.4 793.0,534.4 792.7,533.4 792.3,532.4 792.0,531.5 791.6,530.5 791.2,529.5 790.8,528.6 790.4,527.6 790.0,526.6 789.5,525.7 789.1,524.7 788.6,523.8 788.2,522.8 787.7,521.9 787.2,520.9 786.7,520.0 786.2,519.0 785.6,518.1 785.1,517.2 784.6,516.2 784.0,515.3 783.4,514.4 782.9,513.4 782.3,512.5 781.7,511.6 781.1,510.7 780.4,509.8 779.8,508.9 779.2,508.0 778.5,507.1 777.8,506.2 777.2,505.3 776.5,504.4 775.8,503.5 775.1,502.6 774.4,501.7 773.6,500.8 772.9,500.0 772.2,499.1 771.4,498.2 770.7,497.3 769.9,496.5 769.1,495.6 768.3,494.8 767.5,493.9 766.7,493.1 765.9,492.2 765.0,491.4 764.2,490.6 763.3,489.7 762.5,488.9 761.6,488.1 760.7,487.3 759.8,486.4 758.9,485.6 758.0,484.8 757.1,484.0 756.2,483.2 755.3,482.4 754.3,481.6 753.4,480.8 752.4,480.1 751.4,479.3 750.4,478.5 749.5,477.7 748.5,477.0 747.5,476.2 746.5,475.4 745.4,474.7 744.4,473.9 743.4,473.2 742.3,472.4 741.3,471.7 740.2,471.0 739.1,470.2 738.1,469.5 737.0,468.8 735.9,468.1 734.8,467.4 733.7,466.7 732.5,466.0 731.4,465.3 730.3,464.6 729.2,463.9 728.0,463.2 726.8,462.5 725.7,461.9 724.5,461.2 723.3,460.5 722.2,459.9 721.0,459.2 719.8,458.6 718.6,457.9 717.3,457.3 716.1,456.7 714.9,456.0 713.7,455.4 712.4,454.8 711.2,454.2 709.9,453.6 708.7,452.9 707.4,452.3 706.1,451.8 704.9,451.2 703.6,450.6 702.3,450.0 701.0,449.4 699.7,448.9 698.4,448.3 697.0,447.7 695.7,447.2 694.4,446.6 693.1,446.1 691.7,445.5 690.4,445.0 689.0,444.5 687.7,444.0 686.3,443.4 684.9,442.9 683.6,442.4 682.2,441.9 680.8,441.4 679.4,440.9 678.0,440.4 676.6,440.0 675.2,439.5 673.8,439.0 672.4,438.5 671.0,438.1 669.5,437.6 668.1,437.2 666.7,436.7 665.2,436.3 663.8,435.9 662.3,435.4 660.9,435.0 659.4,434.6 658.0,434.2 656.5,433.8 655.0,433.4 653.6,433.0 652.1,432.6 650.6,432.2 649.1,431.8 647.6,431.5 646.1,431.1 644.6,430.7 643.1,430.4 641.6,430.0 640.1,429.7 638.6,429.3 637.1,429.0 635.5,428.7 634.0,428.3 632.5,428.0 630.9,427.7 629.4,427.4 627.9,427.1 626.3,426.8 624.8,426.5 623.2,426.2 621.7,426.0 620.1,425.7 618.6,425.4 617.0,425.2 615.4,424.9 613.9,424.7 612.3,424.4 610.7,424.2 609.2,423.9 607.6,423.7 606.0,423.5 604.4,423.3 602.8,423.1 601.2,422.9 599.7,422.7 598.1,422.5 596.5,422.3 594.9,422.1 593.3,421.9 591.7,421.8 590.1,421.6 588.5,421.4 586.9,421.3 585.3,421.1 583.7,421.0 582.1,420.9 580.4,420.7 578.8,420.6 577.2,420.5 575.6,420.4 574.0,420.3 572.4,420.2 570.7,420.1 569.1,420.0 567.5,419.9 565.9,419.8 564.3,419.8 562.6,419.7 561.0,419.6 559.4,419.6 557.8,419.5 556.1,419.5 554.5,419.5 552.9,419.4 551.2,419.4 549.6,419.4 548.0,419.4 546.4,419.4 544.7,419.4 543.1,419.4 541.5,419.4 539.8,419.4 538.2,419.4 536.6,419.5 534.9,419.5 533.3,419.5 531.7,419.6 530.0,419.6 528.4,419.7 526.8,419.7 525.1,419.8 523.5,419.9 521.9,420.0 520.3,420.1 518.6,420.1 517.0,420.2 515.4,420.4 513.8,420.5 512.1,420.6 510.5,420.7 508.9,420.8 507.3,421.0 505.6,421.1 504.0,421.2 502.4,421.4 500.8,421.5 499.2,421.7 497.6,421.9 496.0,422.0 494.3,422.2 492.7,422.4 491.1,422.6 489.5,422.8 487.9,423.0 486.3,423.2 484.7,423.4 483.1,423.6 481.5,423.9 479.9,424.1 478.3,424.3 476.7,424.6 475.1,424.8 473.6,425.1 472.0,425.3 470.4,425.6 468.8,425.9 467.2,426.1 465.7,426.4 464.1,426.7 462.5,427.0 461.0,427.3 459.4,427.6 457.8,427.9 456.3,428.2 454.7,428.5 453.2,428.9 451.6,429.2 450.1,429.5 448.5,429.9 447.0,430.2 445.5,430.6 443.9,431.0 442.4,431.3 440.9,431.7 439.4,432.1 437.8,432.4 436.3,432.8 434.8,433.2 433.3,433.6 431.8,434.0 430.3,434.4 428.8,434.9 427.3,435.3 425.8,435.7 424.4,436.1 422.9,436.6 421.4,437.0 419.9,437.5 418.5,437.9 417.0,438.4 415.6,438.8 414.1,439.3 412.7,439.8 411.2,440.3 409.8,440.8 408.3,441.2 406.9,441.7 405.5,442.2 404.1,442.7 402.7,443.3 401.3,443.8 399.8,444.3 398.5,444.8 397.1,445.4 395.7,445.9 394.3,446.4 392.9,447.0 391.5,447.5 390.2,448.1 388.8,448.7 387.5,449.2 386.1,449.8 384.8,450.4 383.4,451.0 382.1,451.6 380.8,452.2 379.5,452.8 378.2,453.4 376.8,454.0 375.5,454.6 374.3,455.2 373.0,455.8 371.7,456.5 370.4,457.1 369.1,457.7 367.9,458.4 366.6,459.0 365.4,459.7 364.1,460.3 362.9,461.0 361.7,461.7 360.5,462.3 359.2,463.0 358.0,463.7 356.8,464.4 355.6,465.1 354.5,465.8 353.3,466.5 352.1,467.2 351.0,467.9 349.8,468.6 348.7,469.3 347.5,470.0 346.4,470.8 345.3,471.5 344.1,472.2 343.0,473.0 341.9,473.7 340.8,474.5 339.7,475.2 338.7,476.0 337.6,476.8 336.5,477.5 335.5,478.3 334.4,479.1 333.4,479.8 332.4,480.6 331.4,481.4 330.4,482.2 329.3,483.0 328.4,483.8 327.4,484.6 326.4,485.4 325.4,486.2 324.5,487.1 323.5,487.9 322.6,488.7 321.6,489.5 320.7,490.4 319.8,491.2 318.9,492.0 318.0,492.9 317.1,493.7 316.3,494.6 315.4,495.4 314.5,496.3 313.7,497.2 312.8,498.0 312.0,498.9 311.2,499.8 310.4,500.6 309.6,501.5 308.8,502.4 308.0,503.3 307.2,504.2 306.5,505.1 305.7,506.0 305.0,506.9 304.3,507.8 303.6,508.7 302.8,509.6 302.1,510.5 301.5,511.4 300.8,512.3 300.1,513.3 299.5,514.2 298.8,515.1 298.2,516.0 297.5,517.0 296.9,517.9 296.3,518.9 295.7,519.8 295.2,520.7 294.6,521.7 294.0,522.6 293.5,523.6 292.9,524.5 292.4,525.5 291.9,526.5 291.4,527.4 290.9,528.4 290.4,529.4 290.0,530.3 289.5,531.3 289.0,532.3 288.6,533.3 288.2,534.2 287.8,535.2 287.4,536.2 287.0,537.2 286.6,538.2 286.2,539.2 285.9,540.2 285.5,541.2 285.2,542.1 284.9,543.1 284.6,544.1 284.3,545.1 284.0,546.1 283.7,547.1 283.5,548.2 283.2,549.2 283.0,550.2 282.8,551.2 282.6,552.2 282.4,553.2 282.2,554.2 282.0,555.2 281.9,556.3 281.7,557.3 281.6,558.3 281.5,559.3 281.3,560.3 281.2,561.3 281.2,562.4 281.1,563.4 281.0,564.4 281.0,565.4 280.9,566.5 280.9,567.5 280.9,568.5 280.9,569.6 280.9,570.6 281.0,571.6 281.0,572.6 281.1,573.7 281.1,574.7 281.2,575.7 281.3,576.8 281.4,577.8 281.5,578.8 281.7,579.8 281.8,580.9 282.0,581.9 282.2,582.9 282.3,584.0 282.5,585.0 282.7,586.0 283.0,587.1 283.2,588.1 283.5,589.1 283.7,590.1 284.0,591.2 284.3,592.2 284.6,593.2 284.9,594.3 285.3,595.3 285.6,596.3 286.0,597.3 286.3,598.3 286.7,599.4 287.1,600.4 287.5,601.4 287.9,602.4 288.4,603.4 288.8,604.5 289.3,605.5 289.8,606.5 290.3,607.5 290.8,608.5 291.3,609.5 291.8,610.5 292.4,611.5 292.9,612.5 293.5,613.5 294.1,614.5 294.7,615.5 295.3,616.5 295.9,617.5 296.5,618.5 297.2,619.5 297.9,620.5 298.5,621.5 299.2,622.4 299.9,623.4 300.6,624.4 301.4,625.4 302.1,626.3 302.9,627.3 303.6,628.3 304.4,629.2 305.2,630.2 306.0,631.2 306.9,632.1 307.7,633.1 308.5,634.0 309.4,635.0 310.3,635.9 311.2,636.9 312.1,637.8 313.0,638.7 313.9,639.7 314.8,640.6 315.8,641.5 316.8,642.4 317.7,643.3 318.7,644.2 319.7,645.2 320.7,646.1 321.8,647.0 322.8,647.9 323.9,648.7 324.9,649.6 326.0,650.5 327.1,651.4 328.2,652.3 329.3,653.1 330.4,654.0 331.6,654.9 332.7,655.7 333.9,656.6 335.1,657.4 336.3,658.3 337.5,659.1 338.7,659.9 339.9,660.8 341.1,661.6 342.4,662.4 343.6,663.2 344.9,664.0 346.2,664.9 347.5,665.6 348.8,666.4 350.1,667.2 351.4,668.0 352.8,668.8 354.1,669.6 355.5,670.3 356.9,671.1 358.2,671.9 359.6,672.6 361.0,673.3 362.5,674.1 363.9,674.8 365.3,675.5 366.8,676.3 368.2,677.0 369.7,677.7 371.2,678.4 372.7,679.1 374.2,679.8 375.7,680.5 377.2,681.1 378.7,681.8 380.3,682.5 381.8,683.1 383.4,683.8 384.9,684.4 386.5,685.1 388.1,685.7 389.7,686.3 391.3,686.9 392.9,687.6 394.6,688.2 396.2,688.8 397.8,689.4 399.5,689.9 401.1,690.5 402.8,691.1 404.5,691.6 406.2,692.2 407.9,692.8 409.6,693.3 411.3,693.8 413.0,694.4 414.7,694.9 416.5,695.4 418.2,695.9 420.0,696.4 421.7,696.9 423.5,697.4 425.2,697.8 427.0,698.3 428.8,698.8 430.6,699.2 432.4,699.7 434.2,700.1 436.0,700.5 437.8,700.9 439.7,701.4 441.5,701.8 443.3,702.2 445.2,702.5 447.0,702.9 448.9,703.3 450.8,703.7 452.6,704.0 454.5,704.4 456.4,704.7 458.3,705.0 460.2,705.4 462.1,705.7 464.0,706.0 465.9,706.3 467.8,706.6 469.7,706.9 471.6,707.1 473.5,707.4 475.5,707.7 477.4,707.9 479.3,708.1 481.3,708.4 483.2,708.6 485.1,708.8 487.1,709.0 489.0,709.2 491.0,709.4 493.0,709.6 494.9,709.8 496.9,709.9 498.9,710.1 500.8,710.2 502.8,710.4 504.8,710.5 506.8,710.6 508.7,710.7 510.7,710.8 512.7,710.9 514.7,711.0 516.7,711.1 518.7,711.2 520.6,711.2 522.6,711.3 524.6,711.3 526.6,711.3 528.6,711.4 530.6,711.4 532.6,711.4 534.6,711.4 536.6,711.4 538.6,711.4 540.6,711.3 542.6,711.3 544.6,711.3 546.6,711.2 548.6,711.1 550.6,711.1 552.5,711.0 554.5,710.9 556.5,710.8 558.5,710.7 560.5,710.6 562.5,710.5 564.5,710.3 566.5,710.2 568.4,710.1 570.4,709.9 572.4,709.7 574.4,709.6 576.3,709.4 578.3,709.2 580.3,709.0 582.2,708.8 584.2,708.6 586.2,708.3 588.1,708.1 590.1,707.9 592.0,707.6 594.0,707.4 595.9,707.1 597.9,706.8 599.8,706.5 601.7,706.2 603.7,705.9 605.6,705.6 607.5,705.3 609.4,705.0 611.3,704.7 613.2,704.3 615.1,704.0 617.0,703.6 618.9,703.2 620.8,702.9 622.7,702.5 624.6,702.1 626.4,701.7 628.3,701.3 630.1,700.9 632.0,700.5 633.8,700.0 635.7,699.6 637.5,699.1 639.3,698.7 641.2,698.2 643.0,697.8 644.8,697.3 646.6,696.8 648.4,696.3 650.2,695.8 651.9,695.3 653.7,694.8 655.5,694.3 657.2,693.8 659.0,693.2 660.7,692.7 662.5,692.1 664.2,691.6 665.9,691.0 667.6,690.4 669.3,689.9 671.0,689.3 672.7,688.7 674.4,688.1 676.1,687.5 677.7,686.9 679.4,686.3 681.0,685.6 682.7,685.0 684.3,684.4 685.9,683.7 687.5,683.1 689.1,682.4 690.7,681.7 692.3,681.1 693.9,680.4 695.4,679.7 697.0,679.0 698.5,678.3 700.1,677.6 701.6,676.9 703.1,676.2 704.6,675.5 706.1,674.7 707.6,674.0 709.1,673.3 710.5,672.5 712.0,671.8 713.4,671.0 714.8,670.3 716.3,669.5 717.7,668.7 719.1,667.9 720.5,667.2 721.8,666.4 723.2,665.6 724.6,664.8 725.9,664.0 727.2,663.2 728.6,662.4 729.9,661.5 731.2,660.7 732.5,659.9 733.7,659.1 735.0,658.2 736.2,657.4 737.5,656.5 738.7,655.7 739.9,654.8 741.1,654.0 742.3,653.1 743.5,652.2 744.7,651.3 745.9,650.5 747.0,649.6 748.1,648.7 749.3,647.8 750.4,646.9 751.5,646.0 752.5,645.1 753.6,644.2 754.7,643.3ZM733.8,633.0 734.7,632.2 735.7,631.4 736.6,630.6 737.5,629.8 738.4,628.9 739.3,628.1 740.2,627.2 741.0,626.4 741.9,625.6 742.7,624.7 743.5,623.9 744.4,623.0 745.2,622.2 746.0,621.3 746.8,620.4 747.5,619.6 748.3,618.7 749.0,617.8 749.8,617.0 750.5,616.1 751.2,615.2 751.9,614.3 752.6,613.5 753.3,612.6 754.0,611.7 754.6,610.8 755.3,609.9 755.9,609.0 756.5,608.1 757.2,607.2 757.8,606.4 758.3,605.5 758.9,604.6 759.5,603.7 760.0,602.8 760.6,601.8 761.1,600.9 761.6,600.0 762.1,599.1 762.6,598.2 763.1,597.3 763.6,596.4 764.0,595.5 764.5,594.6 764.9,593.7 765.3,592.7 765.8,591.8 766.2,590.9 766.5,590.0 766.9,589.1 767.3,588.1 767.6,587.2 768.0,586.3 768.3,585.4 768.6,584.5 768.9,583.5 769.2,582.6 769.5,581.7 769.8,580.8 770.0,579.8 770.3,578.9 770.5,578.0 770.7,577.1 771.0,576.1 771.2,575.2 771.3,574.3 771.5,573.4 771.7,572.4 771.8,571.5 772.0,570.6 772.1,569.6 772.2,568.7 772.3,567.8 772.4,566.9 772.5,565.9 772.6,565.0 772.6,564.1 772.7,563.2 772.7,562.3 772.8,561.3 772.8,560.4 772.8,559.5 772.8,558.6 772.7,557.7 772.7,556.7 772.7,555.8 772.6,554.9 772.6,554.0 772.5,553.1 772.4,552.2 772.3,551.2 772.2,550.3 772.1,549.4 771.9,548.5 771.8,547.6 771.6,546.7 771.5,545.8 771.3,544.9 771.1,544.0 770.9,543.1 770.7,542.2 770.5,541.3 770.2,540.4 770.0,539.5 769.8,538.6 769.5,537.7 769.2,536.8 768.9,535.9 768.6,535.1 768.3,534.2 768.0,533.3 767.7,532.4 767.4,531.5 767.0,530.7 766.6,529.8 766.3,528.9 765.9,528.0 765.5,527.2 765.1,526.3 764.7,525.4 764.3,524.6 763.8,523.7 763.4,522.9 763.0,522.0 762.5,521.2 762.0,520.3 761.5,519.5 761.1,518.6 760.6,517.8 760.0,516.9 759.5,516.1 759.0,515.3 758.5,514.4 757.9,513.6 757.3,512.8 756.8,512.0 756.2,511.1 755.6,510.3 755.0,509.5 754.4,508.7 753.8,507.9 753.2,507.1 752.5,506.3 751.9,505.5 751.2,504.7 750.6,503.9 749.9,503.1 749.2,502.3 748.5,501.5 747.8,500.8 747.1,500.0 746.4,499.2 745.7,498.4 744.9,497.7 744.2,496.9 743.4,496.1 742.7,495.4 741.9,494.6 741.1,493.9 740.3,493.1 739.5,492.4 738.7,491.6 737.9,490.9 737.1,490.2 736.3,489.4 735.4,488.7 734.6,488.0 733.7,487.3 732.9,486.6 732.0,485.8 731.1,485.1 730.2,484.4 729.3,483.7 728.4,483.0 727.5,482.3 726.6,481.7 725.7,481.0 724.8,480.3 723.8,479.6 722.9,478.9 721.9,478.3 720.9,477.6 720.0,476.9 719.0,476.3 718.0,475.6 717.0,475.0 716.0,474.3 715.0,473.7 714.0,473.1 713.0,472.4 712.0,471.8 710.9,471.2 709.9,470.6 708.8,469.9 707.8,469.3 706.7,468.7 705.6,468.1 704.6,467.5 703.5,466.9 702.4,466.3 701.3,465.8 700.2,465.2 699.1,464.6 698.0,464.0 696.8,463.5 695.7,462.9 694.6,462.3 693.4,461.8 692.3,461.2 691.2,460.7 690.0,460.1 688.8,459.6 687.7,459.1 686.5,458.6 685.3,458.0 684.1,457.5 682.9,457.0 681.7,456.5 680.5,456.0 679.3,455.5 678.1,455.0 676.9,454.5 675.7,454.0 674.4,453.5 673.2,453.1 671.9,452.6 670.7,452.1 669.4,451.7 668.2,451.2 666.9,450.8 665.7,450.3 664.4,449.9 663.1,449.4 661.8,449.0 660.6,448.6 659.3,448.2 658.0,447.7 656.7,447.3 655.4,446.9 654.1,446.5 652.7,446.1 651.4,445.7 650.1,445.3 648.8,445.0 647.5,444.6 646.1,444.2 644.8,443.8 643.4,443.5 642.1,443.1 640.7,442.8 639.4,442.4 638.0,442.1 636.7,441.7 635.3,441.4 633.9,441.1 632.6,440.8 631.2,440.4 629.8,440.1 628.4,439.8 627.1,439.5 625.7,439.2 624.3,438.9 622.9,438.6 621.5,438.4 620.1,438.1 618.7,437.8 617.3,437.6 615.9,437.3 614.4,437.0 613.0,436.8 611.6,436.5 610.2,436.3 608.8,436.1 607.3,435.8 605.9,435.6 604.5,435.4 603.0,435.2 601.6,435.0 600.2,434.8 598.7,434.6 597.3,434.4 595.8,434.2 594.4,434.0 592.9,433.8 591.5,433.7 590.0,433.5 588.6,433.3 587.1,433.2 585.7,433.0 584.2,432.9 582.7,432.7 581.3,432.6 579.8,432.5 578.3,432.4 576.9,432.2 575.4,432.1 573.9,432.0 572.5,431.9 571.0,431.8 569.5,431.7 568.0,431.6 566.6,431.6 565.1,431.5 563.6,431.4 562.1,431.3 560.6,431.3 559.2,431.2 557.7,431.2 556.2,431.1 554.7,431.1 553.2,431.1 551.7,431.0 550.3,431.0 548.8,431.0 547.3,431.0 545.8,431.0 544.3,431.0 542.8,431.0 541.3,431.0 539.9,431.0 538.4,431.0 536.9,431.1 535.4,431.1 533.9,431.1 532.4,431.2 530.9,431.2 529.4,431.3 528.0,431.3 526.5,431.4 525.0,431.5 523.5,431.5 522.0,431.6 520.5,431.7 519.1,431.8 517.6,431.9 516.1,432.0 514.6,432.1 513.1,432.2 511.7,432.3 510.2,432.4 508.7,432.6 507.2,432.7 505.7,432.8 504.3,433.0 502.8,433.1 501.3,433.3 499.9,433.4 498.4,433.6 496.9,433.8 495.5,433.9 494.0,434.1 492.5,434.3 491.1,434.5 489.6,434.7 488.2,434.9 486.7,435.1 485.3,435.3 483.8,435.5 482.4,435.8 480.9,436.0 479.5,436.2 478.0,436.5 476.6,436.7 475.2,436.9 473.7,437.2 472.3,437.5 470.9,437.7 469.4,438.0 468.0,438.3 466.6,438.5 465.2,438.8 463.7,439.1 462.3,439.4 460.9,439.7 459.5,440.0 458.1,440.3 456.7,440.6 455.3,441.0 453.9,441.3 452.5,441.6 451.1,442.0 449.7,442.3 448.3,442.6 447.0,443.0 445.6,443.4 444.2,443.7 442.9,444.1 441.5,444.5 440.1,444.8 438.8,445.2 437.4,445.6 436.1,446.0 434.7,446.4 433.4,446.8 432.0,447.2 430.7,447.6 429.4,448.0 428.0,448.4 426.7,448.9 425.4,449.3 424.1,449.7 422.8,450.2 421.5,450.6 420.2,451.1 418.9,451.5 417.6,452.0 416.3,452.4 415.0,452.9 413.7,453.4 412.5,453.9 411.2,454.4 409.9,454.8 408.7,455.3 407.4,455.8 406.2,456.3 404.9,456.8 403.7,457.4 402.5,457.9 401.2,458.4 400.0,458.9 398.8,459.5 397.6,460.0 396.4,460.5 395.2,461.1 394.0,461.6 392.8,462.2 391.6,462.7 390.5,463.3 389.3,463.9 388.1,464.4 387.0,465.0 385.8,465.6 384.7,466.2 383.5,466.8 382.4,467.4 381.3,468.0 380.1,468.6 379.0,469.2 377.9,469.8 376.8,470.4 375.7,471.0 374.6,471.6 373.6,472.3 372.5,472.9 371.4,473.5 370.3,474.2 369.3,474.8 368.2,475.5 367.2,476.1 366.2,476.8 365.1,477.4 364.1,478.1 363.1,478.8 362.1,479.4 361.1,480.1 360.1,480.8 359.1,481.5 358.2,482.2 357.2,482.9 356.2,483.6 355.3,484.3 354.3,485.0 353.4,485.7 352.5,486.4 351.5,487.1 350.6,487.8 349.7,488.5 348.8,489.3 347.9,490.0 347.0,490.7 346.2,491.5 345.3,492.2 344.4,492.9 343.6,493.7 342.7,494.4 341.9,495.2 341.1,496.0 340.3,496.7 339.5,497.5 338.7,498.3 337.9,499.0 337.1,499.8 336.3,500.6 335.5,501.4 334.8,502.1 334.0,502.9 333.3,503.7 332.6,504.5 331.8,505.3 331.1,506.1 330.4,506.9 329.7,507.7 329.1,508.5 328.4,509.3 327.7,510.2 327.1,511.0 326.4,511.8 325.8,512.6 325.1,513.5 324.5,514.3 323.9,515.1 323.3,516.0 322.7,516.8 322.1,517.6 321.6,518.5 321.0,519.3 320.4,520.2 319.9,521.0 319.4,521.9 318.9,522.7 318.3,523.6 317.8,524.4 317.3,525.3 316.9,526.2 316.4,527.0 315.9,527.9 315.5,528.8 315.0,529.6 314.6,530.5 314.2,531.4 313.8,532.3 313.4,533.2 313.0,534.0 312.6,534.9 312.2,535.8 311.9,536.7 311.5,537.6 311.2,538.5 310.9,539.4 310.6,540.3 310.2,541.2 310.0,542.1 309.7,543.0 309.4,543.9 309.1,544.8 308.9,545.7 308.6,546.6 308.4,547.5 308.2,548.4 308.0,549.3 307.8,550.2 307.6,551.1 307.4,552.1 307.3,553.0 307.1,553.9 307.0,554.8 306.9,555.7 306.7,556.6 306.6,557.6 306.5,558.5 306.5,559.4 306.4,560.3 306.3,561.2 306.3,562.2 306.2,563.1 306.2,564.0 306.2,564.9 306.2,565.9 306.2,566.8 306.2,567.7 306.2,568.6 306.3,569.6 306.3,570.5 306.4,571.4 306.5,572.4 306.6,573.3 306.7,574.2 306.8,575.1 306.9,576.1 307.1,577.0 307.2,577.9 307.4,578.8 307.5,579.8 307.7,580.7 307.9,581.6 308.1,582.6 308.3,583.5 308.6,584.4 308.8,585.3 309.1,586.3 309.3,587.2 309.6,588.1 309.9,589.0 310.2,589.9 310.5,590.9 310.8,591.8 311.2,592.7 311.5,593.6 311.9,594.5 312.3,595.5 312.7,596.4 313.1,597.3 313.5,598.2 313.9,599.1 314.3,600.0 314.8,600.9 315.2,601.8 315.7,602.7 316.2,603.6 316.7,604.5 317.2,605.4 317.7,606.3 318.2,607.2 318.8,608.1 319.3,609.0 319.9,609.9 320.4,610.8 321.0,611.7 321.6,612.6 322.2,613.5 322.9,614.3 323.5,615.2 324.1,616.1 324.8,617.0 325.5,617.8 326.2,618.7 326.9,619.6 327.6,620.4 328.3,621.3 329.0,622.2 329.7,623.0 330.5,623.9 331.3,624.7 332.0,625.6 332.8,626.4 333.6,627.3 334.4,628.1 335.3,628.9 336.1,629.8 336.9,630.6 337.8,631.4 338.7,632.3 339.5,633.1 340.4,633.9 341.3,634.7 342.2,635.5 343.2,636.3 344.1,637.1 345.0,637.9 346.0,638.7 347.0,639.5 347.9,640.3 348.9,641.1 349.9,641.9 350.9,642.6 352.0,643.4 353.0,644.2 354.0,644.9 355.1,645.7 356.2,646.5 357.2,647.2 358.3,648.0 359.4,648.7 360.5,649.4 361.6,650.2 362.8,650.9 363.9,651.6 365.1,652.4 366.2,653.1 367.4,653.8 368.6,654.5 369.8,655.2 371.0,655.9 372.2,656.6 373.4,657.3 374.6,657.9 375.9,658.6 377.1,659.3 378.4,660.0 379.6,660.6 380.9,661.3 382.2,661.9 383.5,662.6 384.8,663.2 386.1,663.9 387.4,664.5 388.8,665.1 390.1,665.7 391.5,666.3 392.8,666.9 394.2,667.5 395.6,668.1 396.9,668.7 398.3,669.3 399.7,669.9 401.1,670.5 402.6,671.0 404.0,671.6 405.4,672.2 406.9,672.7 408.3,673.2 409.8,673.8 411.3,674.3 412.7,674.8 414.2,675.4 415.7,675.9 417.2,676.4 418.7,676.9 420.2,677.4 421.7,677.9 423.3,678.3 424.8,678.8 426.4,679.3 427.9,679.7 429.5,680.2 431.0,680.6 432.6,681.1 434.2,681.5 435.7,681.9 437.3,682.4 438.9,682.8 440.5,683.2 442.1,683.6 443.8,684.0 445.4,684.4 447.0,684.7 448.6,685.1 450.3,685.5 451.9,685.8 453.6,686.2 455.2,686.5 456.9,686.9 458.5,687.2 460.2,687.5 461.9,687.8 463.5,688.1 465.2,688.4 466.9,688.7 468.6,689.0 470.3,689.3 472.0,689.6 473.7,689.8 475.4,690.1 477.1,690.3 478.9,690.6 480.6,690.8 482.3,691.1 484.0,691.3 485.8,691.5 487.5,691.7 489.2,691.9 491.0,692.1 492.7,692.3 494.5,692.4 496.2,692.6 498.0,692.8 499.7,692.9 501.5,693.1 503.2,693.2 505.0,693.3 506.8,693.5 508.5,693.6 510.3,693.7 512.1,693.8 513.8,693.9 515.6,694.0 517.4,694.0 519.2,694.1 520.9,694.2 522.7,694.2 524.5,694.3 526.3,694.3 528.1,694.3 529.8,694.3 531.6,694.4 533.4,694.4 535.2,694.4 537.0,694.4 538.8,694.3 540.5,694.3 542.3,694.3 544.1,694.3 545.9,694.2 547.7,694.2 549.5,694.1 551.2,694.0 553.0,693.9 554.8,693.9 556.6,693.8 558.3,693.7 560.1,693.6 561.9,693.4 563.7,693.3 565.4,693.2 567.2,693.0 569.0,692.9 570.8,692.7 572.5,692.6 574.3,692.4 576.0,692.2 577.8,692.1 579.6,691.9 581.3,691.7 583.1,691.5 584.8,691.2 586.5,691.0 588.3,690.8 590.0,690.6 591.8,690.3 593.5,690.1 595.2,689.8 596.9,689.5 598.7,689.3 600.4,689.0 602.1,688.7 603.8,688.4 605.5,688.1 607.2,687.8 608.9,687.5 610.6,687.2 612.3,686.8 614.0,686.5 615.7,686.1 617.3,685.8 619.0,685.4 620.7,685.1 622.3,684.7 624.0,684.3 625.6,683.9 627.3,683.5 628.9,683.1 630.5,682.7 632.2,682.3 633.8,681.9 635.4,681.5 637.0,681.0 638.6,680.6 640.2,680.1 641.8,679.7 643.4,679.2 645.0,678.8 646.5,678.3 648.1,677.8 649.7,677.3 651.2,676.8 652.8,676.3 654.3,675.8 655.8,675.3 657.3,674.8 658.9,674.3 660.4,673.7 661.9,673.2 663.4,672.7 664.9,672.1 666.3,671.5 667.8,671.0 669.3,670.4 670.7,669.8 672.2,669.3 673.6,668.7 675.0,668.1 676.5,667.5 677.9,666.9 679.3,666.3 680.7,665.7 682.1,665.1 683.4,664.4 684.8,663.8 686.2,663.2 687.5,662.5 688.9,661.9 690.2,661.2 691.5,660.6 692.9,659.9 694.2,659.2 695.5,658.6 696.8,657.9 698.1,657.2 699.3,656.5 700.6,655.8 701.8,655.1 703.1,654.4 704.3,653.7 705.5,653.0 706.8,652.3 708.0,651.6 709.2,650.9 710.3,650.1 711.5,649.4 712.7,648.7 713.8,647.9 715.0,647.2 716.1,646.4 717.2,645.7 718.4,644.9 719.5,644.1 720.5,643.4 721.6,642.6 722.7,641.8 723.8,641.0 724.8,640.3 725.9,639.5 726.9,638.7 727.9,637.9 728.9,637.1 729.9,636.3 730.9,635.5 731.9,634.7 732.8,633.9ZM685.1,663.7 686.4,663.1 687.7,662.4 689.0,661.8 690.3,661.1 691.5,660.5 692.8,659.8 694.0,659.1 695.3,658.5 696.5,657.8 697.7,657.1 699.0,656.4 700.2,655.7 701.4,655.0 702.5,654.3 703.7,653.6 704.9,652.9 706.0,652.2 707.2,651.5 708.3,650.8 709.5,650.1 710.6,649.3 711.7,648.6 712.8,647.9 713.9,647.1 714.9,646.4 716.0,645.6 717.1,644.9 718.1,644.1 719.1,643.4 720.2,642.6 721.2,641.8 722.2,641.1 723.2,640.3 724.2,639.5 725.1,638.7 726.1,637.9 727.1,637.1 728.0,636.3 728.9,635.6 729.9,634.8 730.8,634.0 731.7,633.1 732.6,632.3 733.4,631.5 734.3,630.7 735.2,629.9 736.0,629.1 736.8,628.2 737.7,627.4 738.5,626.6 739.3,625.8 740.1,624.9 740.9,624.1 741.6,623.2 742.4,622.4 743.1,621.5 743.9,620.7 744.6,619.9 745.3,619.0 746.0,618.1 746.7,617.3 747.4,616.4 748.0,615.6 748.7,614.7 749.3,613.8 750.0,613.0 750.6,612.1 751.2,611.2 751.8,610.4 752.4,609.5 753.0,608.6 753.5,607.7 754.1,606.8 754.6,606.0 755.2,605.1 755.7,604.2 756.2,603.3 756.7,602.4 757.2,601.5 757.6,600.6 758.1,599.8 758.6,598.9 759.0,598.0 759.4,597.1 759.8,596.2 760.2,595.3 760.6,594.4 761.0,593.5 761.4,592.6 761.8,591.7 762.1,590.8 762.4,589.9 762.8,589.0 763.1,588.1 763.4,587.2 763.7,586.3 763.9,585.4 764.2,584.5 764.5,583.6 764.7,582.7 764.9,581.7 765.2,580.8 765.4,579.9 765.6,579.0 765.8,578.1 765.9,577.2 766.1,576.3 766.3,575.4 766.4,574.5 766.5,573.6 766.6,572.7 766.7,571.8 766.8,570.9 766.9,570.0 767.0,569.1 767.1,568.2 767.1,567.3 767.2,566.4 767.2,565.5 767.2,564.6 767.2,563.7 767.2,562.8 767.2,561.9 767.2,561.0 767.1,560.1 767.1,559.2 767.0,558.3 766.9,557.4 766.9,556.5 766.8,555.6 766.7,554.7 766.6,553.8 766.4,552.9 766.3,552.0 766.1,551.1 766.0,550.3 765.8,549.4 765.6,548.5 765.5,547.6 765.3,546.7 765.0,545.8 764.8,545.0 764.6,544.1 764.3,543.2 764.1,542.3 763.8,541.5 763.6,540.6 763.3,539.7 763.0,538.9 762.7,538.0 762.4,537.1 762.0,536.3 761.7,535.4 761.3,534.6 761.0,533.7 760.6,532.9 760.2,532.0 759.9,531.2 759.5,530.3 759.0,529.5 758.6,528.6 758.2,527.8 757.8,527.0 757.3,526.1 756.9,525.3 756.4,524.5 755.9,523.6 755.4,522.8 754.9,522.0 754.4,521.2 753.9,520.4 753.4,519.5 752.9,518.7 752.3,517.9 751.8,517.1 751.2,516.3 750.6,515.5 750.0,514.7 749.5,513.9 748.9,513.1 748.2,512.3 747.6,511.5 747.0,510.8 746.4,510.0 745.7,509.2 745.1,508.4 744.4,507.7 743.7,506.9 743.1,506.1 742.4,505.4 741.7,504.6 741.0,503.8 740.2,503.1 739.5,502.3 738.8,501.6 738.0,500.8 737.3,500.1 736.5,499.4 735.8,498.6 735.0,497.9 734.2,497.2 733.4,496.5 732.6,495.7 731.8,495.0 731.0,494.3 730.2,493.6 729.3,492.9 728.5,492.2 727.7,491.5 726.8,490.8 725.9,490.1 725.1,489.4 724.2,488.7 723.3,488.1 722.4,487.4 721.5,486.7 720.6,486.0 719.7,485.4 718.7,484.7 717.8,484.1 716.9,483.4 715.9,482.8 715.0,482.1 714.0,481.5 713.0,480.8 712.1,480.2 711.1,479.6 710.1,479.0 709.1,478.3 708.1,477.7 707.1,477.1 706.1,476.5 705.1,475.9 704.0,475.3 703.0,474.7 701.9,474.1 700.9,473.5 699.8,472.9 698.8,472.4 697.7,471.8 696.6,471.2 695.5,470.6 694.5,470.1 693.4,469.5 692.3,469.0 691.2,468.4 690.0,467.9 688.9,467.3 687.8,466.8 686.7,466.3 685.5,465.8 684.4,465.2 683.2,464.7 682.1,464.2 680.9,463.7 679.8,463.2 678.6,462.7 677.4,462.2 676.2,461.7 675.1,461.2 673.9,460.7 672.7,460.3 671.5,459.8 670.3,459.3 669.0,458.9 667.8,458.4 666.6,458.0 665.4,457.5 664.1,457.1 662.9,456.6 661.7,456.2 660.4,455.8 659.2,455.3 657.9,454.9 656.7,454.5 655.4,454.1 654.1,453.7 652.8,453.3 651.6,452.9 650.3,452.5 649.0,452.1 647.7,451.7 646.4,451.4 645.1,451.0 643.8,450.6 642.5,450.3 641.2,449.9 639.9,449.6 638.6,449.2 637.2,448.9 635.9,448.5 634.6,448.2 633.3,447.9 631.9,447.5 630.6,447.2 629.2,446.9 627.9,446.6 626.5,446.3 625.2,446.0 623.8,445.7 622.5,445.4 621.1,445.2 619.7,444.9 618.4,444.6 617.0,444.3 615.6,444.1 614.2,443.8 612.9,443.6 611.5,443.3 610.1,443.1 608.7,442.9 607.3,442.6 605.9,442.4 604.5,442.2 603.1,442.0 601.7,441.8 600.3,441.5 598.9,441.4 597.5,441.2 596.1,441.0 594.7,440.8 593.3,440.6 591.8,440.4 590.4,440.3 589.0,440.1 587.6,439.9 586.1,439.8 584.7,439.6 583.3,439.5 581.9,439.4 580.4,439.2 579.0,439.1 577.6,439.0 576.1,438.9 574.7,438.8 573.3,438.6 571.8,438.5 570.4,438.5 568.9,438.4 567.5,438.3 566.0,438.2 564.6,438.1 563.1,438.1 561.7,438.0 560.3,437.9 558.8,437.9 557.4,437.8 555.9,437.8 554.5,437.7 553.0,437.7 551.5,437.7 550.1,437.7 548.6,437.6 547.2,437.6 545.7,437.6 544.3,437.6 542.8,437.6 541.4,437.6 539.9,437.7 538.5,437.7 537.0,437.7 535.6,437.7 534.1,437.8 532.7,437.8 531.2,437.9 529.7,437.9 528.3,438.0 526.8,438.0 525.4,438.1 523.9,438.2 522.5,438.2 521.0,438.3 519.6,438.4 518.1,438.5 516.7,438.6 515.2,438.7 513.8,438.8 512.3,438.9 510.9,439.1 509.5,439.2 508.0,439.3 506.6,439.4 505.1,439.6 503.7,439.7 502.3,439.9 500.8,440.0 499.4,440.2 497.9,440.4 496.5,440.5 495.1,440.7 493.7,440.9 492.2,441.1 490.8,441.3 489.4,441.5 488.0,441.7 486.5,441.9 485.1,442.1 483.7,442.3 482.3,442.5 480.9,442.8 479.5,443.0 478.1,443.2 476.7,443.5 475.2,443.7 473.8,444.0 472.5,444.3 471.1,444.5 469.7,444.8 468.3,445.1 466.9,445.3 465.5,445.6 464.1,445.9 462.7,446.2 461.4,446.5 460.0,446.8 458.6,447.1 457.2,447.4 455.9,447.8 454.5,448.1 453.2,448.4 451.8,448.8 450.5,449.1 449.1,449.4 447.8,449.8 446.4,450.1 445.1,450.5 443.7,450.9 442.4,451.2 441.1,451.6 439.8,452.0 438.4,452.4 437.1,452.8 435.8,453.2 434.5,453.6 433.2,454.0 431.9,454.4 430.6,454.8 429.3,455.2 428.0,455.6 426.7,456.1 425.5,456.5 424.2,456.9 422.9,457.4 421.7,457.8 420.4,458.3 419.1,458.7 417.9,459.2 416.6,459.6 415.4,460.1 414.2,460.6 412.9,461.1 411.7,461.6 410.5,462.0 409.3,462.5 408.0,463.0 406.8,463.5 405.6,464.0 404.4,464.6 403.2,465.1 402.1,465.6 400.9,466.1 399.7,466.7 398.5,467.2 397.4,467.7 396.2,468.3 395.1,468.8 393.9,469.4 392.8,469.9 391.6,470.5 390.5,471.1 389.4,471.6 388.3,472.2 387.1,472.8 386.0,473.4 384.9,473.9 383.8,474.5 382.8,475.1 381.7,475.7 380.6,476.3 379.5,476.9 378.5,477.6 377.4,478.2 376.4,478.8 375.3,479.4 374.3,480.0 373.3,480.7 372.2,481.3 371.2,482.0 370.2,482.6 369.2,483.2 368.2,483.9 367.2,484.6 366.2,485.2 365.3,485.9 364.3,486.5 363.3,487.2 362.4,487.9 361.4,488.6 360.5,489.3 359.6,489.9 358.7,490.6 357.7,491.3 356.8,492.0 355.9,492.7 355.0,493.4 354.2,494.1 353.3,494.9 352.4,495.6 351.6,496.3 350.7,497.0 349.9,497.7 349.0,498.5 348.2,499.2 347.4,499.9 346.6,500.7 345.8,501.4 345.0,502.2 344.2,502.9 343.4,503.7 342.6,504.4 341.9,505.2 341.1,506.0 340.4,506.7 339.6,507.5 338.9,508.3 338.2,509.0 337.5,509.8 336.8,510.6 336.1,511.4 335.4,512.2 334.7,513.0 334.0,513.8 333.4,514.6 332.7,515.4 332.1,516.2 331.5,517.0 330.9,517.8 330.2,518.6 329.6,519.4 329.0,520.2 328.5,521.0 327.9,521.8 327.3,522.7 326.8,523.5 326.2,524.3 325.7,525.2 325.2,526.0 324.6,526.8 324.1,527.7 323.6,528.5 323.2,529.3 322.7,530.2 322.2,531.0 321.8,531.9 321.3,532.7 320.9,533.6 320.4,534.4 320.0,535.3 319.6,536.2 319.2,537.0 318.8,537.9 318.5,538.7 318.1,539.6 317.7,540.5 317.4,541.4 317.1,542.2 316.7,543.1 316.4,544.0 316.1,544.9 315.8,545.7 315.5,546.6 315.3,547.5 315.0,548.4 314.7,549.3 314.5,550.1 314.3,551.0 314.0,551.9 313.8,552.8 313.6,553.7 313.5,554.6 313.3,555.5 313.1,556.4 313.0,557.3 312.8,558.2 312.7,559.1 312.6,560.0 312.4,560.9 312.3,561.8 312.3,562.7 312.2,563.6 312.1,564.5 312.1,565.4 312.0,566.3 312.0,567.2 312.0,568.1 311.9,569.0 311.9,569.9 312.0,570.8 312.0,571.7 312.0,572.6 312.1,573.5 312.1,574.4 312.2,575.3 312.3,576.2 312.4,577.2 312.5,578.1 312.6,579.0 312.7,579.9 312.8,580.8 313.0,581.7 313.1,582.6 313.3,583.5 313.5,584.4 313.7,585.3 313.9,586.2 314.1,587.1 314.3,588.0 314.6,588.9 314.8,589.8 315.1,590.7 315.4,591.6 315.7,592.5 316.0,593.4 316.3,594.3 316.6,595.2 316.9,596.1 317.3,597.0 317.6,597.9 318.0,598.8 318.4,599.7 318.8,600.6 319.2,601.5 319.6,602.4 320.0,603.3 320.4,604.2 320.9,605.1 321.3,605.9 321.8,606.8 322.3,607.7 322.8,608.6 323.3,609.5 323.8,610.3 324.4,611.2 324.9,612.1 325.4,613.0 326.0,613.8 326.6,614.7 327.2,615.6 327.8,616.4 328.4,617.3 329.0,618.1 329.6,619.0 330.3,619.9 330.9,620.7 331.6,621.6 332.3,622.4 333.0,623.2 333.7,624.1 334.4,624.9 335.1,625.8 335.9,626.6 336.6,627.4 337.4,628.3 338.1,629.1 338.9,629.9 339.7,630.7 340.5,631.5 341.3,632.4 342.2,633.2 343.0,634.0 343.8,634.8 344.7,635.6 345.6,636.4 346.4,637.2 347.3,638.0 348.2,638.8 349.2,639.5 350.1,640.3 351.0,641.1 352.0,641.9 352.9,642.6 353.9,643.4 354.9,644.2 355.8,644.9 356.8,645.7 357.9,646.4 358.9,647.2 359.9,647.9 360.9,648.6 362.0,649.4 363.1,650.1 364.1,650.8 365.2,651.6 366.3,652.3 367.4,653.0 368.5,653.7 369.6,654.4 370.8,655.1 371.9,655.8 373.1,656.5 374.2,657.2 375.4,657.8 376.6,658.5 377.8,659.2 379.0,659.8 380.2,660.5 381.4,661.2 382.6,661.8 383.8,662.5 385.1,663.1 386.3,663.7 387.6,664.4 388.9,665.0 390.2,665.6 391.5,666.2 392.8,666.8 394.1,667.4 395.4,668.0" fill="none" stroke="#141414" stroke-width="1.45" stroke-linejoin="round"/>
<path d="M249.5,635.8 249.7,637.0 249.8,638.3 250.0,639.5 250.2,640.7 250.4,641.9 250.6,643.1 250.8,644.3 251.1,645.5 251.3,646.7 251.6,647.9 251.9,649.1 252.2,650.3 252.5,651.5 252.8,652.7 253.2,653.9 253.6,655.1 253.9,656.3 254.3,657.5 254.7,658.7 255.2,659.9 255.6,661.1 256.1,662.3 256.5,663.5 257.0,664.7 257.5,665.9 258.0,667.1 258.6,668.3 259.1,669.5 259.7,670.6 260.2,671.8 260.8,673.0 261.4,674.2 262.1,675.4 262.7,676.5 263.3,677.7 264.0,678.9 264.7,680.1 265.4,681.2 266.1,682.4 266.8,683.5 267.6,684.7 268.3,685.9 269.1,687.0 269.9,688.2 270.7,689.3 271.5,690.5 272.4,691.6 273.2,692.7 274.1,693.9 275.0,695.0 275.8,696.2 276.8,697.3 277.7,698.4 278.6,699.5 279.6,700.6 280.5,701.8 281.5,702.9 282.5,704.0 283.5,705.1 284.6,706.2 285.6,707.3 286.7,708.4 287.8,709.4 288.8,710.5 289.9,711.6 291.1,712.7 292.2,713.7 293.3,714.8 294.5,715.9 295.7,716.9 296.9,718.0 298.1,719.0 299.3,720.1 300.5,721.1 301.8,722.1 303.0,723.2 304.3,724.2 305.6,725.2 306.9,726.2 308.2,727.2 309.5,728.2 310.9,729.2 312.3,730.2 313.6,731.2 315.0,732.2 316.4,733.1 317.8,734.1 319.3,735.1 320.7,736.0 322.1,737.0 323.6,737.9 325.1,738.9 326.6,739.8 328.1,740.7 329.6,741.6 331.2,742.5 332.7,743.4 334.3,744.3 335.8,745.2 337.4,746.1 339.0,747.0 340.6,747.9 342.2,748.7 343.9,749.6 345.5,750.4 347.2,751.3 348.8,752.1 350.5,752.9 352.2,753.8 353.9,754.6 355.7,755.4 357.4,756.2 359.1,757.0 360.9,757.8 362.6,758.5 364.4,759.3 366.2,760.1 368.0,760.8 369.8,761.6 371.6,762.3 373.5,763.0 375.3,763.7 377.1,764.5 379.0,765.2 380.9,765.9 382.8,766.5 384.7,767.2 386.6,767.9 388.5,768.6 390.4,769.2 392.3,769.9 394.3,770.5 396.2,771.1 398.2,771.7 400.1,772.4 402.1,773.0 404.1,773.6 406.1,774.1 408.1,774.7 410.1,775.3 412.1,775.8 414.2,776.4 416.2,776.9 418.3,777.5 420.3,778.0 422.4,778.5 424.4,779.0 426.5,779.5 428.6,780.0 430.7,780.4 432.8,780.9 434.9,781.4 437.0,781.8 439.1,782.2 441.3,782.7 443.4,783.1 445.5,783.5 447.7,783.9 449.8,784.3 452.0,784.6 454.1,785.0 456.3,785.4 458.5,785.7 460.7,786.0 462.8,786.4 465.0,786.7 467.2,787.0 469.4,787.3 471.6,787.6 473.8,787.9 476.1,788.1 478.3,788.4 480.5,788.6 482.7,788.9 485.0,789.1 487.2,789.3 489.4,789.5 491.7,789.7 493.9,789.9 496.2,790.1 498.4,790.2 500.7,790.4 502.9,790.5 505.2,790.7 507.4,790.8 509.7,790.9 511.9,791.0 514.2,791.1 516.5,791.2 518.7,791.3 521.0,791.3 523.3,791.4 525.6,791.4 527.8,791.4 530.1,791.5 532.4,791.5 534.6,791.5 536.9,791.5 539.2,791.4 541.5,791.4 543.7,791.4 546.0,791.3 548.3,791.2 550.6,791.2 552.8,791.1 555.1,791.0 557.4,790.9 559.6,790.8 561.9,790.6 564.2,790.5 566.4,790.4 568.7,790.2 571.0,790.0 573.2,789.8 575.5,789.7 577.7,789.5 580.0,789.3 582.2,789.0 584.5,788.8 586.7,788.6 589.0,788.3 591.2,788.1 593.4,787.8 595.7,787.5 597.9,787.2 600.1,786.9 602.3,786.6 604.5,786.3 606.7,786.0 608.9,785.6 611.1,785.3 613.3,784.9 615.5,784.5 617.7,784.2 619.9,783.8 622.1,783.4 624.2,783.0 626.4,782.5 628.5,782.1 630.7,781.7 632.8,781.2 635.0,780.8 637.1,780.3 639.2,779.8 641.4,779.4 643.5,778.9 645.6,778.4 647.7,777.8 649.8,777.3 651.8,776.8 653.9,776.2 656.0,775.7 658.1,775.1 660.1,774.6 662.2,774.0 664.2,773.4 666.2,772.8 668.2,772.2 670.3,771.6 672.3,771.0 674.3,770.3 676.2,769.7 678.2,769.1 680.2,768.4 682.1,767.7 684.1,767.1 686.0,766.4 688.0,765.7 689.9,765.0 691.8,764.3 693.7,763.6 695.6,762.9 697.5,762.1 699.4,761.4 701.2,760.6 703.1,759.9 704.9,759.1 706.7,758.4 708.6,757.6 710.4,756.8 712.2,756.0 714.0,755.2 715.7,754.4 717.5,753.6 719.3,752.8 721.0,751.9 722.7,751.1 724.4,750.3 726.2,749.4 727.8,748.5 729.5,747.7 731.2,746.8 732.9,745.9 734.5,745.0 736.2,744.2 737.8,743.3 739.4,742.3 741.0,741.4 742.6,740.5 744.1,739.6 745.7,738.7 747.3,737.7 748.8,736.8 750.3,735.8 751.8,734.9 753.3,733.9 754.8,733.0 756.3,732.0 757.7,731.0 759.2,730.0 760.6,729.0 762.0,728.0 763.4,727.0 764.8,726.0 766.2,725.0 767.6,724.0 768.9,723.0 770.3,722.0 771.6,720.9 772.9,719.9 774.2,718.9 775.5,717.8 776.7,716.8 778.0,715.7 779.2,714.6 780.5,713.6 781.7,712.5 782.9,711.4 784.1,710.4 785.2,709.3 786.4,708.2 787.5,707.1 788.6,706.0 789.8,704.9 790.8,703.8 791.9,702.7 793.0,701.6 794.0,700.5 795.1,699.4 796.1,698.2 797.1,697.1 798.1,696.0 799.1,694.9 800.1,693.7 801.0,692.6 801.9,691.5 802.9,690.3 803.8,689.2 804.7,688.0 805.5,686.9 806.4,685.7 807.2,684.6 808.1,683.4 808.9,682.3 809.7,681.1 810.5,679.9 811.2,678.8 812.0,677.6 812.7,676.4 813.5,675.2 814.2,674.1 814.9,672.9 815.6,671.7 816.2,670.5 816.9,669.3 817.5,668.2 818.1,667.0 818.7,665.8 819.3,664.6 819.9,663.4 820.5,662.2 821.0,661.0 821.5,659.8 822.1,658.6 822.6,657.4 823.0,656.2 823.5,655.0 824.0,653.8 824.4,652.6 824.8,651.4 825.2,650.2 825.6,649.0 826.0,647.8 826.4,646.6 826.7,645.4 827.1,644.2 827.4,643.0 827.7,641.8 828.0,640.6 828.3,639.4 828.5,638.2 828.8,637.0 829.0,635.8 829.2,634.6 829.4,633.4 829.6,632.2 829.8,631.0 830.0,629.8 830.1,628.6 830.2,627.4M762.1,591.5 761.9,590.6 761.6,589.7 761.4,588.8 761.1,587.9 760.9,587.0 760.6,586.2 760.3,585.3 760.0,584.4 759.7,583.5 759.4,582.6 759.0,581.8 758.7,580.9 758.3,580.0 758.0,579.2 757.6,578.3 757.2,577.4 756.8,576.6 756.4,575.7 756.0,574.9 755.6,574.0 755.2,573.2 754.7,572.3 754.3,571.5 753.8,570.6 753.4,569.8 752.9,568.9 752.4,568.1 751.9,567.3 751.4,566.4 750.9,565.6 750.4,564.8 749.8,564.0 749.3,563.1 748.7,562.3 748.2,561.5 747.6,560.7 747.0,559.9 746.4,559.1 745.8,558.3 745.2,557.5 744.6,556.7 744.0,555.9 743.3,555.1 742.7,554.3 742.1,553.5 741.4,552.7 740.7,552.0 740.0,551.2 739.4,550.4 738.7,549.6 738.0,548.9 737.2,548.1 736.5,547.3 735.8,546.6 735.1,545.8 734.3,545.1 733.6,544.3 732.8,543.6 732.0,542.9 731.2,542.1 730.5,541.4 729.7,540.7 728.9,539.9 728.0,539.2 727.2,538.5 726.4,537.8 725.6,537.1 724.7,536.4 723.9,535.7 723.0,535.0 722.2,534.3 721.3,533.6 720.4,532.9 719.5,532.2 718.6,531.5 717.7,530.9 716.8,530.2 715.9,529.5 715.0,528.8 714.0,528.2 713.1,527.5 712.1,526.9 711.2,526.2 710.2,525.6 709.3,524.9 708.3,524.3 707.3,523.7 706.3,523.1 705.3,522.4 704.3,521.8 703.3,521.2 702.3,520.6 701.3,520.0 700.3,519.4 699.2,518.8 698.2,518.2 697.1,517.6 696.1,517.0 695.0,516.4 694.0,515.9 692.9,515.3 691.8,514.7 690.7,514.2 689.6,513.6 688.5,513.0 687.4,512.5 686.3,511.9 685.2,511.4 684.1,510.9 683.0,510.3 681.8,509.8 680.7,509.3 679.6,508.8 678.4,508.3 677.3,507.7 676.1,507.2 674.9,506.7 673.8,506.3 672.6,505.8 671.4,505.3 670.2,504.8 669.0,504.3 667.8,503.9 666.6,503.4 665.4,502.9 664.2,502.5 663.0,502.0 661.8,501.6 660.6,501.1 659.3,500.7 658.1,500.3 656.9,499.8 655.6,499.4 654.4,499.0 653.1,498.6 651.9,498.2 650.6,497.8 649.4,497.4 648.1,497.0 646.8,496.6 645.5,496.2 644.3,495.8 643.0,495.5 641.7,495.1 640.4,494.7 639.1,494.4 637.8,494.0 636.5,493.7 635.2,493.3 633.9,493.0 632.6,492.7 631.2,492.3 629.9,492.0 628.6,491.7 627.3,491.4 625.9,491.1 624.6,490.8 623.3,490.5 621.9,490.2 620.6,489.9 619.2,489.6 617.9,489.3 616.5,489.1 615.2,488.8 613.8,488.5 612.5,488.3 611.1,488.0 609.7,487.8 608.4,487.6 607.0,487.3 605.6,487.1 604.2,486.9 602.8,486.6 601.5,486.4 600.1,486.2 598.7,486.0 597.3,485.8 595.9,485.6 594.5,485.4 593.1,485.3 591.7,485.1 590.3,484.9 588.9,484.7 587.5,484.6 586.1,484.4 584.7,484.3 583.3,484.1 581.9,484.0 580.5,483.9 579.1,483.7 577.7,483.6 576.2,483.5 574.8,483.4 573.4,483.3 572.0,483.2 570.6,483.1 569.1,483.0 567.7,482.9 566.3,482.8 564.9,482.7 563.4,482.7 562.0,482.6 560.6,482.5 559.2,482.5 557.7,482.4 556.3,482.4 554.9,482.4 553.4,482.3 552.0,482.3 550.6,482.3 549.1,482.3 547.7,482.2 546.3,482.2 544.8,482.2 543.4,482.2 542.0,482.3 540.5,482.3 539.1,482.3 537.7,482.3 536.2,482.3 534.8,482.4 533.4,482.4 531.9,482.5 530.5,482.5 529.1,482.6 527.6,482.7 526.2,482.7 524.8,482.8 523.3,482.9 521.9,483.0 520.5,483.0 519.1,483.1 517.6,483.2 516.2,483.4 514.8,483.5 513.4,483.6 511.9,483.7 510.5,483.8 509.1,484.0 507.7,484.1 506.2,484.2 504.8,484.4 503.4,484.5 502.0,484.7 500.6,484.9 499.2,485.0 497.7,485.2 496.3,485.4 494.9,485.6 493.5,485.8 492.1,486.0 490.7,486.2 489.3,486.4 487.9,486.6 486.5,486.8 485.1,487.0 483.7,487.3 482.3,487.5 480.9,487.7 479.6,488.0 478.2,488.2 476.8,488.5 475.4,488.7 474.0,489.0 472.7,489.3 471.3,489.6 469.9,489.8 468.5,490.1 467.2,490.4 465.8,490.7 464.5,491.0 463.1,491.3 461.7,491.6 460.4,491.9 459.0,492.3 457.7,492.6 456.4,492.9 455.0,493.3 453.7,493.6 452.3,493.9 451.0,494.3 449.7,494.6 448.4,495.0 447.1,495.4 445.7,495.7 444.4,496.1 443.1,496.5 441.8,496.9 440.5,497.3 439.2,497.7 437.9,498.1 436.6,498.5 435.3,498.9 434.1,499.3 432.8,499.7 431.5,500.2 430.2,500.6 429.0,501.0 427.7,501.5 426.5,501.9 425.2,502.4 424.0,502.8 422.7,503.3 421.5,503.8 420.3,504.2 419.0,504.7 417.8,505.2 416.6,505.7 415.4,506.2 414.2,506.6 413.0,507.1 411.8,507.6 410.6,508.2 409.4,508.7 408.2,509.2 407.0,509.7 405.8,510.2 404.7,510.8 403.5,511.3 402.3,511.8 401.2,512.4 400.0,512.9 398.9,513.5 397.8,514.0 396.6,514.6 395.5,515.2 394.4,515.7 393.3,516.3 392.2,516.9 391.1,517.5 390.0,518.1 388.9,518.7 387.8,519.3 386.7,519.9 385.7,520.5 384.6,521.1 383.5,521.7 382.5,522.3 381.4,522.9 380.4,523.6 379.4,524.2 378.3,524.8 377.3,525.5 376.3,526.1 375.3,526.8 374.3,527.4 373.3,528.1 372.3,528.7 371.3,529.4 370.4,530.1 369.4,530.7 368.5,531.4 367.5,532.1 366.6,532.8 365.6,533.5 364.7,534.2 363.8,534.9 362.9,535.6 361.9,536.3 361.0,537.0 360.2,537.7 359.3,538.4 358.4,539.1 357.5,539.8 356.7,540.6 355.8,541.3 355.0,542.0 354.1,542.8 353.3,543.5 352.5,544.2 351.7,545.0 350.8,545.7 350.1,546.5 349.3,547.2 348.5,548.0 347.7,548.8 346.9,549.5 346.2,550.3 345.4,551.1 344.7,551.9 344.0,552.6 343.2,553.4 342.5,554.2 341.8,555.0 341.1,555.8 340.4,556.6 339.7,557.4 339.1,558.2 338.4,559.0 337.8,559.8 337.1,560.6 336.5,561.4 335.8,562.2 335.2,563.1 334.6,563.9 334.0,564.7 333.4,565.5 332.8,566.4 332.3,567.2 331.7,568.0 331.2,568.9 330.6,569.7 330.1,570.5 329.6,571.4 329.0,572.2 328.5,573.1 328.0,573.9 327.5,574.8 327.1,575.7 326.6,576.5 326.1,577.4 325.7,578.2 325.3,579.1 324.8,580.0 324.4,580.8 324.0,581.7 323.6,582.6 323.2,583.5 322.8,584.3 322.5,585.2 322.1,586.1 321.8,587.0 321.4,587.9 321.1,588.8 320.8,589.6 320.5,590.5 320.2,591.4 319.9,592.3 319.6,593.2 319.3,594.1 319.1,595.0 318.8,595.9 318.6,596.8 318.4,597.7 318.2,598.6" fill="none" stroke="#141414" stroke-width="2.4" stroke-linejoin="round"/>
<path d="" fill="none" stroke="#141414" stroke-width="1.55" stroke-linejoin="round"/>
<path d="M546.6,405.0 544.3,405.0 542.1,405.0 539.8,405.0 537.5,405.0 535.3,405.1 533.0,405.1 530.7,405.2 528.5,405.3 526.2,405.3 524.0,405.4 521.7,405.5 519.4,405.6 517.2,405.8 514.9,405.9 512.7,406.0 510.4,406.2 508.2,406.3 505.9,406.5 503.7,406.7 501.4,406.9 499.2,407.1 496.9,407.3 494.7,407.5 492.4,407.8 490.2,408.0 488.0,408.2 485.7,408.5 483.5,408.8 481.3,409.1 479.0,409.3 476.8,409.6 474.6,410.0 472.4,410.3 470.2,410.6 468.0,410.9 465.8,411.3 463.6,411.6 461.4,412.0 459.2,412.4 457.0,412.8 454.8,413.2 452.6,413.6 450.5,414.0 448.3,414.4 446.1,414.9 444.0,415.3 441.8,415.8 439.7,416.2 437.5,416.7 435.4,417.2 433.3,417.7 431.1,418.2 429.0,418.7 426.9,419.2 424.8,419.8 422.7,420.3 420.6,420.8 418.5,421.4 416.4,422.0 414.4,422.6 412.3,423.1 410.2,423.7 408.2,424.4 406.1,425.0 404.1,425.6 402.1,426.2 400.0,426.9 398.0,427.5 396.0,428.2 394.0,428.9 392.0,429.6 390.0,430.2 388.1,430.9 386.1,431.7 384.1,432.4 382.2,433.1 380.2,433.8 378.3,434.6 376.4,435.3 374.5,436.1 372.6,436.9 370.7,437.7 368.8,438.4 366.9,439.2 365.0,440.1 363.2,440.9 361.3,441.7 359.5,442.5 357.7,443.4 355.9,444.2 354.1,445.1 352.3,446.0 350.5,446.8 348.7,447.7 346.9,448.6 345.2,449.5 343.5,450.4 341.7,451.4 340.0,452.3 338.3,453.2 336.6,454.2 334.9,455.1 333.3,456.1 331.6,457.0 330.0,458.0 328.4,459.0 326.7,460.0 325.1,461.0 323.5,462.0 322.0,463.0 320.4,464.1 318.9,465.1 317.3,466.1 315.8,467.2 314.3,468.2 312.8,469.3 311.3,470.4 309.8,471.4 308.4,472.5 306.9,473.6 305.5,474.7 304.1,475.8 300.3,478.9 298.8,480.0 297.4,481.2 296.0,482.3 294.7,483.5 293.3,484.6 292.0,485.8 290.6,487.0 289.3,488.2 288.0,489.4 286.7,490.6 285.5,491.8 284.2,493.0 283.0,494.2 281.8,495.4 280.6,496.7 279.4,497.9 278.2,499.2 277.1,500.4 276.0,501.7 274.8,502.9 273.7,504.2 272.7,505.5 271.6,506.8 270.6,508.1 269.5,509.4 268.5,510.7 267.5,512.0 266.6,513.3 265.6,514.6 264.7,515.9 263.8,517.3 262.9,518.6 262.0,519.9 261.1,521.3 260.3,522.6 259.5,524.0 258.7,525.3 257.9,526.7 257.1,528.1 256.4,529.5 255.7,530.8 255.0,532.2 254.3,533.6 253.6,535.0 253.0,536.4 252.4,537.8 251.8,539.2 251.2,540.6 250.6,542.0 250.1,543.4 249.6,544.9 249.1,546.3 248.6,547.7 248.2,549.1 247.7,550.6 247.3,552.0 246.9,553.5 246.6,554.9 246.2,556.4 245.9,557.8 245.6,559.3 245.3,560.7 245.0,562.2 244.8,563.6 244.6,565.1 244.4,566.6 244.2,568.0 244.1,569.5 244.0,571.0 243.9,572.4 243.8,573.9 243.7,575.4 243.7,576.9 243.7,578.3 243.7,579.8 243.7,581.3 243.8,582.8 243.9,584.3 244.0,585.7 244.1,587.2 244.2,588.7 249.5,635.8 249.7,637.3 249.9,638.9 250.1,640.4 250.4,641.9 250.6,643.4 250.9,644.9 251.3,646.4 251.6,647.9 252.0,649.4 252.3,650.9 252.8,652.4 253.2,653.9 253.6,655.4 254.1,656.9 254.6,658.4 255.2,659.9 255.7,661.4 256.3,662.9 256.9,664.4 257.5,665.9 258.2,667.4 258.8,668.9 259.5,670.3 260.2,671.8 261.0,673.3 261.7,674.8 262.5,676.2 263.3,677.7 264.2,679.2 265.0,680.6 265.9,682.1 266.8,683.5 267.8,685.0 268.7,686.4 269.7,687.9 270.7,689.3 271.7,690.8 272.8,692.2 273.9,693.6 275.0,695.0 276.1,696.4 277.2,697.8 278.4,699.2 279.6,700.6 280.8,702.0 282.0,703.4 283.3,704.8 284.6,706.2 285.9,707.5 287.2,708.9 288.6,710.3 289.9,711.6 291.3,712.9 292.8,714.3 294.2,715.6 295.7,716.9 297.2,718.2 298.7,719.6 300.2,720.8 301.8,722.1 303.3,723.4 304.9,724.7 306.6,726.0 308.2,727.2 309.9,728.5 311.6,729.7 313.3,730.9 315.0,732.2 316.8,733.4 318.5,734.6 320.3,735.8 322.1,737.0 324.0,738.2 325.8,739.3 327.7,740.5 329.6,741.6 331.5,742.8 333.5,743.9 335.4,745.0 337.4,746.1 339.4,747.2 341.4,748.3 343.5,749.4 345.5,750.4 347.6,751.5 349.7,752.5 351.8,753.6 353.9,754.6 356.1,755.6 358.2,756.6 360.4,757.6 362.6,758.5 364.9,759.5 367.1,760.4 369.4,761.4 371.6,762.3 373.9,763.2 376.2,764.1 378.5,765.0 380.9,765.9 383.2,766.7 385.6,767.6 388.0,768.4 390.4,769.2 392.8,770.0 395.2,770.8 397.7,771.6 400.1,772.4 402.6,773.1 405.1,773.8 407.6,774.6 410.1,775.3 412.6,776.0 415.2,776.7 417.7,777.3 420.3,778.0 422.9,778.6 425.5,779.2 428.1,779.8 430.7,780.4 433.3,781.0 436.0,781.6 438.6,782.1 441.3,782.7 443.9,783.2 446.6,783.7 449.3,784.2 452.0,784.6 454.7,785.1 457.4,785.5 460.1,786.0 462.8,786.4 465.6,786.8 468.3,787.2 471.1,787.5 473.8,787.9 476.6,788.2 479.4,788.5 482.2,788.8 485.0,789.1 487.7,789.4 490.5,789.6 493.3,789.9 496.2,790.1 499.0,790.3 501.8,790.5 504.6,790.6 507.4,790.8 510.2,790.9 513.1,791.1 515.9,791.2 518.7,791.3 521.6,791.3 524.4,791.4 527.3,791.4 530.1,791.5 532.9,791.5 535.8,791.5 538.6,791.4 541.5,791.4 544.3,791.3 547.2,791.3 550.0,791.2 552.8,791.1 555.7,791.0 558.5,790.8 561.3,790.7 564.2,790.5 567.0,790.3 569.8,790.1 572.7,789.9 575.5,789.7 578.3,789.4 581.1,789.1 583.9,788.9 586.7,788.6 589.5,788.3 592.3,787.9 595.1,787.6 597.9,787.2 600.7,786.8 603.4,786.5 606.2,786.0 608.9,785.6 611.7,785.2 614.4,784.7 617.2,784.3 619.9,783.8 622.6,783.3 625.3,782.8 628.0,782.2 630.7,781.7 633.4,781.1 636.0,780.5 638.7,780.0 641.4,779.4 644.0,778.7 646.6,778.1 649.2,777.4 651.8,776.8 654.4,776.1 657.0,775.4 659.6,774.7 662.2,774.0 664.7,773.3 667.2,772.5 669.8,771.7 672.3,771.0 674.8,770.2 677.2,769.4 679.7,768.6 682.1,767.7 684.6,766.9 687.0,766.0 689.4,765.2 691.8,764.3 694.2,763.4 696.5,762.5 698.9,761.6 701.2,760.6 703.5,759.7 705.8,758.7 708.1,757.8 710.4,756.8 712.6,755.8 714.8,754.8 717.1,753.8 719.3,752.8 721.4,751.7 723.6,750.7 725.7,749.6 727.8,748.5 730.0,747.5 732.0,746.4 734.1,745.3 736.2,744.2 738.2,743.0 740.2,741.9 742.2,740.8 744.1,739.6 746.1,738.4 748.0,737.3 749.9,736.1 751.8,734.9 753.7,733.7 755.6,732.5 757.4,731.3 759.2,730.0 761.0,728.8 762.7,727.5 764.5,726.3 766.2,725.0 767.9,723.8 769.6,722.5 771.3,721.2 772.9,719.9 774.5,718.6 776.1,717.3 777.7,716.0 779.2,714.6 780.8,713.3 782.3,712.0 783.8,710.6 785.2,709.3 786.7,707.9 788.1,706.6 789.5,705.2 790.8,703.8 792.2,702.4 793.5,701.0 794.8,699.6 796.1,698.2 797.4,696.8 798.6,695.4 799.8,694.0 801.0,692.6 802.2,691.2 803.3,689.7 804.4,688.3 805.5,686.9 806.6,685.4 807.7,684.0 808.7,682.5 809.7,681.1 810.7,679.6 811.6,678.2 812.6,676.7 813.5,675.2 814.4,673.8 815.2,672.3 816.1,670.8 816.9,669.3 817.7,667.9 818.4,666.4 819.2,664.9 819.9,663.4 820.6,661.9 821.3,660.4 821.9,658.9 822.6,657.4 823.2,655.9 823.7,654.4 824.3,652.9 824.8,651.4 825.3,649.9 825.8,648.4 826.3,646.9 826.7,645.4 827.2,643.9 827.6,642.4 827.9,640.9 828.3,639.4 828.6,637.9 828.9,636.4 829.2,634.9 829.4,633.4 829.7,631.9 829.9,630.4 830.1,628.9 830.2,627.4 830.4,625.9 834.2,579.0 834.3,577.5 834.4,576.1 834.5,574.6 834.6,573.1 834.6,571.6 834.6,570.2 834.6,568.7 834.5,567.2 834.5,565.8 834.4,564.3 834.3,562.9 834.1,561.4 834.0,560.0 833.8,558.5 833.6,557.1 833.4,555.6 833.2,554.2 832.9,552.7 832.6,551.3 832.3,549.9 832.0,548.4 831.6,547.0 831.3,545.6 830.9,544.2 830.5,542.7 830.0,541.3 829.6,539.9 829.1,538.5 828.6,537.1 828.1,535.7 827.5,534.3 827.0,532.9 826.4,531.6 825.8,530.2 825.2,528.8 824.6,527.4 823.9,526.1 823.2,524.7 822.5,523.4 821.8,522.0 821.1,520.7 820.3,519.3 819.5,518.0 818.7,516.7 817.9,515.3 817.1,514.0 816.2,512.7 815.4,511.4 814.5,510.1 813.6,508.8 812.6,507.5 811.7,506.2 810.7,504.9 809.8,503.7 808.8,502.4 807.7,501.1 806.7,499.9 805.7,498.6 804.6,497.4 803.5,496.2 802.4,494.9 801.3,493.7 800.1,492.5 799.0,491.3 797.8,490.1 796.6,488.9 795.4,487.7 794.2,486.5 792.9,485.3 791.7,484.2 790.4,483.0 789.1,481.9 787.8,480.7 786.5,479.6 785.2,478.4 783.8,477.3 782.5,476.2 781.1,475.1 779.7,474.0 778.3,472.9 776.9,471.8 775.4,470.7 771.6,467.8 770.1,466.8 768.7,465.7 767.2,464.7 765.8,463.7 764.3,462.7 762.8,461.7 761.3,460.6 759.7,459.6 758.2,458.7 756.7,457.7 755.1,456.7 753.5,455.7 751.9,454.8 750.3,453.8 748.7,452.9 747.1,452.0 745.4,451.0 743.8,450.1 742.1,449.2 740.4,448.3 738.8,447.4 737.0,446.5 735.3,445.7 733.6,444.8 731.9,443.9 730.1,443.1 728.4,442.3 726.6,441.4 724.8,440.6 723.0,439.8 721.2,439.0 719.4,438.2 717.6,437.4 715.8,436.6 713.9,435.9 712.1,435.1 710.2,434.4 708.3,433.6 706.4,432.9 704.6,432.2 702.7,431.4 700.7,430.7 698.8,430.0 696.9,429.3 695.0,428.7 693.0,428.0 691.0,427.3 689.1,426.7 687.1,426.0 685.1,425.4 683.1,424.8 681.1,424.2 679.1,423.6 677.1,423.0 675.1,422.4 673.1,421.8 671.0,421.2 669.0,420.7 666.9,420.1 664.9,419.6 662.8,419.1 660.7,418.6 658.7,418.0 656.6,417.5 654.5,417.1 652.4,416.6 650.3,416.1 648.2,415.6 646.1,415.2 643.9,414.7 641.8,414.3 639.7,413.9 637.5,413.5 635.4,413.1 633.2,412.7 631.1,412.3 628.9,411.9 626.8,411.5 624.6,411.2 622.4,410.8 620.2,410.5 618.1,410.2 615.9,409.9 613.7,409.6 611.5,409.3 609.3,409.0 607.1,408.7 604.9,408.4 602.7,408.2 600.5,407.9 598.2,407.7 596.0,407.5 593.8,407.2 591.6,407.0 589.3,406.8 587.1,406.7 584.9,406.5 582.6,406.3 580.4,406.1 578.1,406.0 575.9,405.9 573.7,405.7 571.4,405.6 569.2,405.5 566.9,405.4 564.6,405.3 562.4,405.2 560.1,405.2 557.9,405.1 555.6,405.1 553.4,405.0 551.1,405.0 548.8,405.0Z" fill="none" stroke="#141414" stroke-width="1.6"/>
<defs>
<linearGradient id="notchL" x1="730" y1="650" x2="775" y2="628" gradientUnits="userSpaceOnUse"><stop offset="0" stop-color="#5b5853"/><stop offset="1" stop-color="#a19e96"/></linearGradient>
<linearGradient id="notchD" x1="740" y1="660" x2="785" y2="635" gradientUnits="userSpaceOnUse"><stop offset="0" stop-color="#4a4742"/><stop offset="1" stop-color="#3a3834"/></linearGradient>
</defs>
<ellipse cx="758.6" cy="644.2" rx="28.6" ry="16.8" transform="rotate(8 758.6 644.2)" fill="url(#notchL)" stroke="#141414" stroke-width="1.4"/>
<path d="M738 654Q748 637 769.5 633.5Q782 636 786.5 648Q783 657 770 661Q752 663.5 740.5 659Z" fill="url(#notchD)"/>
<path d="M775 632.5Q784 636 787.3 645.5L785 650Q780 638 774.5 635Z" fill="#b7b4ac"/>
<path d="M738 654Q748 637 769.5 633.5M774.5 635Q782 641 786.5 649" fill="none" stroke="#141414" stroke-width="1.1"/>
<path d="M788.3 657.2L793.4 643.2L797.6 648.8L806.2 645.6L810.2 652.6L801.6 656.6L805.6 663.4Z" fill="#fff" stroke="#7a9ab8" stroke-width="4.6" stroke-linejoin="round"/>
<path d="M788.3 657.2L793.4 643.2L797.6 648.8L806.2 645.6L810.2 652.6L801.6 656.6L805.6 663.4Z" fill="#fff" stroke="#fff" stroke-width="3" stroke-linejoin="round"/>
<path d="M788.3 657.2L793.4 643.2L797.6 648.8L806.2 645.6L810.2 652.6L801.6 656.6L805.6 663.4Z" fill="#0a8fdc"/>

</g></svg><!-- window border -->
<div class="a" style="left:0;top:0;width:1202px;height:1px;background:#9a9a9a"></div>
<div class="a" style="left:0;top:0;width:295px;height:1px;background:#666"></div>
<div class="a" style="left:391px;top:0;width:48px;height:1px;background:#0a6ccf"></div>
<div class="a" style="left:0;top:0;width:1px;height:1040px;background:#7a7873"></div>

<div class="a" style="left:0;top:1039px;width:1202px;height:1px;background:#8e8e8e"></div>
<div class="a" style="left:1201px;top:0;width:1px;height:1040px;background:#8e8e8e"></div>
<!-- title bar -->
<div class="a" style="left:1px;top:1px;width:1199px;height:30px;background:#fff"></div>
<svg class="a" style="left:10px;top:7px" width="15" height="17" viewBox="0 0 15 17"><rect x="0.5" y="0" width="13" height="13" rx="2" fill="#f07b21"/><rect x="1.5" y="12" width="12" height="5" rx="1" fill="#a0410d"/><text x="7" y="10.5" font-size="10" font-weight="bold" fill="#fff" text-anchor="middle" font-family="Liberation Sans">F</text></svg>
<div class="t" style="left:30px;top:9px;font-size:13px;letter-spacing:-0.27px;color:#7a7a7a">Autodesk Fusion 360 (Personal - Not for Commercial Use)</div>
<div class="a" style="left:1082px;top:15px;width:10px;height:1px;background:#8e8e8e"></div>
<div class="a" style="left:1127px;top:10px;width:10px;height:10px;border:1px solid #6a6a6a"></div>
<svg class="a" style="left:1172px;top:9px" width="12" height="12"><path d="M1 1L11 11M11 1L1 11" stroke="#6a6a6a" stroke-width="1"/></svg>
<!-- tab bar -->
<div class="a" style="left:1px;top:31px;width:1199px;height:32px;background:#cbcbcb"></div>
<svg class="a" style="left:10px;top:40px" width="15" height="15" viewBox="0 0 15 15" fill="#5e5e5e"><rect x="0" y="0" width="4" height="4" rx=".6"/><rect x="5" y="0" width="4" height="4" rx=".6"/><rect x="10" y="0" width="4" height="4" rx=".6"/><rect x="0" y="5" width="4" height="4" rx=".6"/><rect x="5" y="5" width="4" height="4" rx=".6"/><rect x="10" y="5" width="4" height="4" rx=".6"/><rect x="0" y="10" width="4" height="4" rx=".6"/><rect x="5" y="10" width="4" height="4" rx=".6"/><rect x="10" y="10" width="4" height="4" rx=".6"/></svg>
<svg class="a" style="left:43px;top:39px" width="28" height="17" viewBox="0 0 28 17" fill="#5e5e5e"><path d="M1 0H9L13 4V16H1Z"/><path d="M9.5 0.5V3.5H12.5Z" fill="#cbcbcb"/><path d="M19 5H26L22.5 9.5Z"/></svg>
<svg class="a" style="left:88px;top:40px" width="15" height="15" viewBox="0 0 15 15"><path d="M0 1.5Q0 0 1.5 0H12.5Q14 0 14 1.5V14H1.5L0 12.5Z" fill="#5e5e5e"/><rect x="3" y="1.5" width="8" height="4" fill="#cbcbcb"/><rect x="4" y="8.5" width="6" height="5.5" fill="#cbcbcb"/><rect x="5.5" y="10" width="3" height="4" fill="#5e5e5e"/></svg>
<svg class="a" style="left:120px;top:40px" width="70" height="15" viewBox="0 0 70 15"><path d="M13 13V10Q13 5.5 8 5.5H3M6.5 1.5L2.5 5.5L6.5 9.5" fill="none" stroke="#5e5e5e" stroke-width="2"/><path d="M21 4H28L24.5 8.5Z" fill="#5e5e5e"/><path d="M41 13V10Q41 5.5 46 5.5H51M47.5 1.5L51.5 5.5L47.5 9.5" fill="none" stroke="#8e8e8e" stroke-width="2"/><path d="M60 4H67L63.5 8.5Z" fill="#8e8e8e"/></svg>
<!-- tabs -->
<div class="a" style="left:194px;top:35px;width:184px;height:28px;background:#bdbdbd;border-radius:4px 4px 0 0"></div>
<div class="a" style="left:382px;top:35px;width:184px;height:28px;background:#bdbdbd;border-radius:4px 4px 0 0"></div>
<div class="a" style="left:570px;top:35px;width:184px;height:28px;background:#f0f0f0;border-radius:4px 4px 0 0"></div>
<div class="a" style="left:758px;top:35px;width:183px;height:28px;background:#bdbdbd;border-radius:4px 4px 0 0"></div>
<div class="a" style="left:946px;top:35px;width:28px;height:28px;background:#bdbdbd;border-radius:4px 4px 0 0"></div>
<svg class="a" style="left:0;top:0" width="1202" height="70">
<g fill="#6a6a6a"><path d="M204.5 47V45.5Q204.5 41.8 208 41.8Q211.5 41.8 211.5 45.5V47" fill="none" stroke="#6a6a6a" stroke-width="1.6"/><rect x="202" y="46.5" width="12" height="9" rx="1"/></g>
<g stroke="#bdbdbd" stroke-width="1"><path d="M203.5 49.5H212.5M203.5 51.5H212.5M203.5 53.5H212.5"/></g>
<g fill="#6a6a6a"><path d="M402.5 47V45.5Q402.5 41.8 406 41.8Q409.5 41.8 409.5 45.5V47" fill="none" stroke="#6a6a6a" stroke-width="1.6"/><rect x="400" y="46.5" width="12" height="9" rx="1"/></g>
<g stroke="#bdbdbd" stroke-width="1"><path d="M401.5 49.5H410.5M401.5 51.5H410.5M401.5 53.5H410.5"/></g>
<g fill="#7d7d7d"><path d="M814.5 47V45.5Q814.5 41.8 818 41.8Q821.5 41.8 821.5 45.5V47" fill="none" stroke="#7d7d7d" stroke-width="1.6"/><rect x="812" y="46.5" width="12" height="9" rx="1"/></g>
<g stroke="#bdbdbd" stroke-width="1"><path d="M813.5 49.5H822.5M813.5 51.5H822.5M813.5 53.5H822.5"/></g>
<g stroke="#6a6a6a" stroke-width="1.4" fill="none"><path d="M364 44L372 52M372 44L364 52"/><path d="M551 44L559 52M559 44L551 52"/><path d="M738 44L746 52M746 44L738 52"/><path d="M926 44L934 52M934 44L926 52" stroke="#7d7d7d"/></g>
<path d="M615 43.5L622 40L630 43V51.5L623 56L615 52.5Z" fill="#7a7a7a"/><path d="M615 43.5L623 46.5L630 43L622 40Z" fill="#a0a0a0"/><path d="M623 46.5V56L630 51.5V43Z" fill="#505050"/>
<path d="M960 41.5V55M953.5 48.5H967" stroke="#6e6e6e" stroke-width="2.2"/>
<path d="M986 40H995L999 44V46L991 54L990 56H986Z" fill="#5e5e5e"/><path d="M995 40V44H999Z" fill="#cbcbcb"/><path d="M999.5 44.5L1001.5 46.5L993.5 54.5L990.5 55.5L991.5 52.5Z" fill="#5e5e5e" stroke="#cbcbcb" stroke-width=".8"/>
<circle cx="1071" cy="47" r="8" fill="#5e5e5e"/><circle cx="1071" cy="47" r="6.6" fill="none" stroke="#e6e6e6" stroke-width=".8"/><path d="M1071 42.5V48H1075" fill="none" stroke="#fff" stroke-width="1.1"/>
<path d="M1098 52.5H1110L1108 50V45Q1108 41.5 1104.5 40.5V39.5H1103.5V40.5Q1100 41.5 1100 45V50Z" fill="#5e5e5e"/><path d="M1102.5 54H1105.5L1104 55.5Z" fill="#5e5e5e"/><circle cx="1108.3" cy="42.5" r="2.8" fill="#1a8fe0"/>
<circle cx="1137" cy="47" r="8" fill="#5e5e5e"/><text x="1137" y="51.5" font-size="12.5" font-weight="bold" fill="#fff" text-anchor="middle" font-family="Liberation Sans">?</text>
<defs><linearGradient id="avg" x1="0" y1="0" x2="0" y2="1"><stop offset="0" stop-color="#9fb0c8"/><stop offset="1" stop-color="#7f93ad"/></linearGradient><clipPath id="avc"><circle cx="1176" cy="47" r="12"/></clipPath></defs>
<circle cx="1176" cy="47" r="12" fill="url(#avg)"/>
<g clip-path="url(#avc)" fill="#56657a"><path d="M1171 43Q1171 36 1176.5 36Q1182 36 1182 43Q1182 48 1179.5 51L1187 54Q1189 56 1189 60H1164Q1164 56 1166 54L1173.5 51Q1171 48 1171 43Z"/></g>
</svg>
<div class="t" style="left:221px;top:43px;font-size:12px;color:#6a6a6a">linear ball …5x8 (CTC) v2</div>
<div class="t" style="left:419px;top:43px;font-size:12px;color:#6a6a6a">45 bearing testing v6*</div>
<div class="t" style="left:636px;top:43px;font-size:12px;color:#3a3a3a">bearing v3*</div>
<div class="t" style="left:831px;top:43px;font-size:12px;color:#7d7d7d">Untitled*</div>
<div class="t" style="left:1005px;top:42px;font-size:10.6px;font-weight:bold;color:#444">9 of 10</div>
<!-- ribbon -->
<div class="a" style="left:1px;top:145px;width:1200px;height:3px;background:rgba(242,242,242,0.88)"></div>
<div class="a" style="left:1px;top:63px;width:1199px;height:82px;background:#f1f1f1;border-bottom:1px solid #d8d8d8"></div>
<div class="a" style="left:13px;top:74px;width:110px;height:61px;border:1px solid #d9d9d9;border-radius:5px"></div>
<div class="t" style="left:43px;top:98px;font-size:11px;font-weight:bold;color:#3a3a3a;letter-spacing:-0.1px">DESIGN</div>
<svg class="a" style="left:88px;top:102px" width="7" height="5"><path d="M0 0.5H6L3 4Z" fill="#333"/></svg>
<div class="t" style="left:152px;top:69px;font-size:11px;color:#1e9ad9">SOLID</div>
<div class="a" style="left:140px;top:84px;width:57px;height:3px;background:#1e9ad9;border-radius:1px"></div>
<div class="t" style="left:229px;top:69px;font-size:11px;color:#3c3c3c">SURFACE</div>
<div class="t" style="left:327px;top:69px;font-size:11px;color:#3c3c3c">MESH</div>
<div class="t" style="left:405px;top:69px;font-size:11px;color:#3c3c3c">SHEET METAL</div>
<div class="t" style="left:528px;top:69px;font-size:11px;color:#3c3c3c">PLASTIC</div>
<div class="t" style="left:621px;top:69px;font-size:11px;color:#3c3c3c">UTILITIES</div>
<div class="t" style="left:148px;top:129px;font-size:11px;color:#3c3c3c">CREATE</div>
<div class="t" style="left:331px;top:129px;font-size:11px;color:#3c3c3c">MODIFY</div>
<div class="t" style="left:507px;top:129px;font-size:11px;color:#3c3c3c">ASSEMBLE</div>
<div class="t" style="left:605px;top:129px;font-size:11px;color:#3c3c3c">CONSTRUCT</div>
<div class="t" style="left:708px;top:129px;font-size:11px;color:#3c3c3c">INSPECT</div>
<div class="t" style="left:823px;top:129px;font-size:11px;color:#3c3c3c">INSERT</div>
<div class="t" style="left:933px;top:129px;font-size:11px;color:#3c3c3c">SELECT</div>
<svg class="a" style="left:0;top:60px" width="1202" height="90" viewBox="0 60 1202 90">
<g fill="#333"><path d="M194 132H200L197 135.5Z"/><path d="M376 132H382L379 135.5Z"/><path d="M569 132H575L572 135.5Z"/><path d="M676 132H682L679 135.5Z"/><path d="M758 132H764L761 135.5Z"/><path d="M866 132H872L869 135.5Z"/><path d="M978 132H984L981 135.5Z"/></g>
<g fill="#d8d8d8"><rect x="223" y="90" width="1.2" height="50"/><rect x="491" y="90" width="1.2" height="50"/><rect x="590" y="90" width="1.2" height="50"/><rect x="694" y="90" width="1.2" height="50"/><rect x="777" y="90" width="1.2" height="50"/><rect x="918" y="90" width="1.2" height="50"/></g>
<!-- new component icon -->
<g id="nc">
<path d="M138.5 98.5L142.5 94.5H154L150.5 98.5Z" fill="#8ecbf5"/>
<rect x="138.5" y="98.5" width="12" height="11.5" fill="#62ade6"/>
<path d="M150.5 98.5L154 94.5V106L150.5 110Z" fill="#4692cf"/>
<rect x="138.5" y="110" width="12" height="11.5" fill="#dadada" stroke="#666" stroke-width="1"/>
<path d="M150.5 110L154 106.5H165.5L162 110Z" fill="#eee" stroke="#666" stroke-width="1"/>
<rect x="150.5" y="110" width="11.5" height="11.5" fill="#dadada" stroke="#666" stroke-width="1"/>
<path d="M162 110L165.5 106.5V118L162 121.5Z" fill="#bdbdbd" stroke="#666" stroke-width="1"/>
<path d="M161.5 90.5L163 95.5L167.5 93L165 97L170 98.5L165 100L167.5 104L163 101.5L161.5 106.5L160 101.5L155.5 104L158 100L153 98.5L158 97L155.5 93L160 95.5Z" fill="#f5a000"/>
</g>
<use href="#nc" x="366" y="0"/>
<!-- sketch icon -->
<g stroke="#5a5a5a" stroke-width="1.1" fill="none"><path d="M185 91.5H207M181.5 95V115M185 118.5H199M210 95V107"/><path d="M192 98.5H200M189.5 101V109M192 111.5Q200 109.5 202.5 101"/></g>
<g fill="#5a5a5a"><rect x="180" y="90" width="3" height="3"/><rect x="208.5" y="90" width="3" height="3"/><rect x="180" y="117" width="3" height="3"/><rect x="188" y="97" width="3" height="3"/><rect x="201" y="97" width="3" height="3"/><rect x="188" y="110" width="3" height="3"/></g>
<path d="M204.5 108.5H207.5V113.5H213V117H207.5V122H204.5V117H199V113.5H204.5Z" fill="#23a846"/>
<!-- press pull -->
<path d="M236.5 96L240.5 90.5H247V122H236.5Z" fill="#dcdcdc" stroke="#5a5a5a" stroke-width="1"/>
<path d="M243 96L248 90.5H258L252.5 96Z" fill="#8ecbf5"/><rect x="243" y="96" width="9.5" height="26" fill="#62ade6"/><path d="M252.5 96L258 90.5V116.5L252.5 122Z" fill="#4692cf"/>
<rect x="253" y="103.5" width="5" height="4" fill="#f1f1f1"/><path d="M254 105.5H261" stroke="#222" stroke-width="1.2"/><path d="M260 102.5L265 105.5L260 108.5Z" fill="#222"/>
<!-- fillet -->
<path d="M278.5 98L285.5 90.5H297L310 104V115L302.5 122H278.5Z" fill="#dcdcdc" stroke="#5a5a5a" stroke-width="1"/>
<path d="M302.5 109L310 102V115L302.5 122Z" fill="#bdbdbd"/>
<path d="M290 96.5Q301 98 302.5 110L310 103.5Q308 92 296 90.5Z" fill="#62ade6"/>
<path d="M285 98.5Q300 98 302.5 111" fill="none" stroke="#fafafa" stroke-width="1"/>
<!-- shell -->
<path d="M321.5 98L329.5 90.5H353V114.5L345 122H321.5Z" fill="#dcdcdc" stroke="#5a5a5a" stroke-width="1"/>
<path d="M345 98L353 90.5V114.5L345 122Z" fill="#bdbdbd"/><path d="M321.5 98L329.5 90.5H353L345 98Z" fill="#f0f0f0"/>
<path d="M321.5 98L329.5 90.5H353V114.5L345 122H321.5ZM321.5 98H345L353 90.5M345 98V122" fill="none" stroke="#5a5a5a" stroke-width="1"/>
<rect x="324" y="100.5" width="18.5" height="19" fill="#f1f1f1"/><rect x="325" y="102" width="7.5" height="15.5" fill="#4692cf"/><path d="M325 117.5L329 110.5H341V117.5Z" fill="#8ecbf5"/>
<!-- combine -->
<path d="M364 104.5L368 100.5H378V104.5Z" fill="#8ecbf5"/><rect x="364" y="104.5" width="18" height="17.5" fill="#62ade6"/><path d="M382 104.5V122L385.5 118.5V111Z" fill="#4692cf"/>
<path d="M374.5 94.5L378.5 90.5H396L392 94.5Z" fill="#8ecbf5"/><rect x="374.5" y="94.5" width="17.5" height="17.5" fill="#62ade6"/><path d="M392 94.5L396 90.5V108L392 112Z" fill="#4692cf"/>
<!-- split -->
<path d="M409.5 96L414 90.5H437L432.5 96Z" fill="#8ecbf5"/><rect x="409.5" y="96" width="23" height="10" fill="#62ade6"/><path d="M432.5 96L437 90.5V101L432.5 106Z" fill="#4692cf"/>
<path d="M407 108.5H431L439 100.5" fill="none" stroke="#1e88e5" stroke-width="1.2"/>
<path d="M409.5 111H432.5V120.5H409.5Z" fill="#dcdcdc" stroke="#5a5a5a" stroke-width="1"/><path d="M432.5 111L437 107V116.5L432.5 120.5Z" fill="#bdbdbd" stroke="#5a5a5a" stroke-width="1"/>
<!-- move -->
<g fill="#2b2b2b"><path d="M466 90.5L471 96.5H461Z"/><path d="M466 121.5L471 115.5H461Z"/><path d="M450.5 106L456.5 101V111Z"/><path d="M481.5 106L475.5 101V111Z"/><rect x="465" y="95" width="2" height="22"/><rect x="455" y="105" width="22" height="2"/></g>
<!-- joint -->
<path d="M549.5 101L556 93L558.5 92.5V104.5L552.5 111V118.5L549.5 119Z" fill="#c8c8c8" stroke="#5a5a5a" stroke-width="1"/>
<path d="M556 93.5Q556 92 558.5 92Q561 92 561 93.5V103.5Q561 105 558.5 105Q556 105 556 103.5Z" fill="#e6e6e6" stroke="#5a5a5a" stroke-width="1"/>
<path d="M570 94L576.5 101V119.5L570 113V110L565 110.5V103L570 102.5Z" fill="#dcdcdc" stroke="#5a5a5a" stroke-width="1"/>
<path d="M564.5 102Q564.5 100.5 567 100.5Q569.5 100.5 569.5 102V112.5Q569.5 114 567 114Q564.5 114 564.5 112.5Z" fill="#c0c0c0" stroke="#5a5a5a" stroke-width="1"/>
<path d="M558.5 105V110M567.5 96V103" stroke="#1e88e5" stroke-width="1"/>
<!-- construct -->
<path d="M628.5 99L636.5 90.5H645L637 99V121H628.5Z" fill="#dcdcdc" stroke="#5a5a5a" stroke-width="1"/>
<path d="M637 99L645.5 90.5V112.5L637 121Z" fill="#5cc47c" stroke="#3e9e5c" stroke-width=".5"/>
<path d="M649 99L657.5 90.5V112.5L649 121Z" fill="#e2986a" stroke="#d08050" stroke-width=".5"/>
<!-- inspect -->
<path d="M723.5 99V106M750.5 99V106M724 102.5H750" stroke="#444" stroke-width="1"/><path d="M724 102.5L727 100.5V104.5ZM750 102.5L747 100.5V104.5Z" fill="#444"/>
<rect x="723" y="107.5" width="28" height="6.5" fill="#f2a31c"/><path d="M726.5 107.5V110M730 107.5V109.5M733.5 107.5V110M737 107.5V109.5M740.5 107.5V110M744 107.5V109.5M747.5 107.5V110" stroke="#9a6a10" stroke-width=".6"/>
<!-- insert svg -->
<path d="M797 90.5H812L821.5 100V109H797Z" fill="#fff" stroke="#555" stroke-width="1"/><path d="M812 90.5V100H821.5Z" fill="#f0a31e" stroke="#f0a31e" stroke-width=".6"/>
<rect x="796" y="108.5" width="26" height="13.5" fill="#e9a11f"/><text x="814" y="119.6" font-size="9" font-weight="bold" fill="#fff" text-anchor="middle" font-family="Liberation Sans" letter-spacing="-.4">SVG</text><circle cx="800.6" cy="115.3" r="2.6" fill="none" stroke="#222" stroke-width="1.2" stroke-dasharray="1.1 .6"/>
<path d="M790 97.5H798.5V93L806.5 100L798.5 107V102.5H790Z" fill="#1e88e5"/>
<!-- insert mesh -->
<path d="M838.5 98L845 92H864V112.5L857.5 119H838.5Z" fill="#e4e4e8" stroke="#444" stroke-width="1"/><path d="M857.5 98L864 92V112.5L857.5 119Z" fill="#c9ccd4" stroke="#444" stroke-width="1"/><path d="M838.5 98H857.5L864 92" fill="none" stroke="#444" stroke-width="1"/>
<path d="M834 112Q836 104.5 845 104V100.5L851 106L845 111.5V108Q838 108 834 112Z" fill="#333"/>
<!-- image -->
<rect x="877" y="91" width="29" height="29" fill="#3b8dd0"/><rect x="878" y="92" width="27" height="27" fill="#7cc0f5"/><path d="M878 119V108Q883 100 890 106Q895 109 898 105Q902 102 905 109V119Z" fill="#3a8ccf"/><circle cx="898.5" cy="99" r="3" fill="#f8f2c0"/>
<!-- select -->
<rect x="942.5" y="90.5" width="27" height="21" fill="none" stroke="#2bb34b" stroke-width="1" stroke-dasharray="2.5 1.5"/>
<path d="M963.5 103.5V118L966.5 115.5L969 121L971 120L968.5 114.5H972.5Z" fill="#fff" stroke="#444" stroke-width="1"/>
</svg>
<!-- browser panel -->
<div class="a" style="left:5px;top:152px;width:300px;height:25px;background:#f1f1f1;border:1px solid #cfcfcf"></div>
<svg class="a" style="left:10px;top:160.5px" width="12" height="9"><path d="M5.5 0.5V8L0.5 4.25Z M10.5 0.5V8L5.5 4.25Z" fill="#2a2a2a"/></svg>
<div class="t" style="left:30px;top:159px;font-size:11px;color:#555">BROWSER</div>
<svg class="a" style="left:283px;top:159px" width="22" height="11"><circle cx="5.5" cy="5.5" r="4.8" fill="#222"/><rect x="3" y="4.8" width="5" height="1.5" fill="#fff"/><rect x="17" y="1" width="1" height="9" fill="#666"/><rect x="19" y="2" width="1" height="7" fill="#999"/></svg>
<!-- tree rows -->
<div class="a" style="left:41px;top:182px;width:153px;height:20px;background:#f0f0f0"></div>
<div class="a" style="left:43px;top:183px;width:3px;height:18px;background:#4fd1d9"></div>
<div class="a" style="left:71px;top:184px;width:98px;height:16px;background:#999"></div>
<div class="t" style="left:104px;top:187px;font-size:11px;font-weight:bold;color:#fff">bearing v3</div>
<div class="a" style="left:59px;top:206px;width:138px;height:20px;background:#f0f0f0"></div>
<div class="t" style="left:92px;top:211px;font-size:11px;color:#333">Document Settings</div>
<div class="a" style="left:59px;top:230px;width:110px;height:20px;background:#f0f0f0"></div>
<div class="t" style="left:92px;top:235px;font-size:11px;color:#333">Named Views</div>
<div class="a" style="left:59px;top:254px;width:99px;height:20px;background:#f0f0f0"></div>
<div class="t" style="left:117px;top:259px;font-size:11px;color:#333">Origin</div>
<div class="a" style="left:59px;top:278px;width:111px;height:20px;background:#f0f0f0"></div>
<div class="t" style="left:117px;top:283px;font-size:11px;color:#333">Analysis</div>
<div class="a" style="left:59px;top:302px;width:144px;height:20px;background:#f0f0f0"></div>
<div class="a" style="left:59px;top:303px;width:5px;height:18px;background:#b9e86a"></div>
<div class="t" style="left:122px;top:307px;font-size:11px;color:#333">Component1:1</div>
<div class="a" style="left:77px;top:326px;width:99px;height:20px;background:#f0f0f0"></div>
<div class="t" style="left:135px;top:331px;font-size:11px;color:#333">Origin</div>
<div class="a" style="left:77px;top:350px;width:103px;height:20px;background:#f0f0f0"></div>
<div class="t" style="left:135px;top:355px;font-size:11px;color:#333">Bodies</div>
<div class="a" style="left:77px;top:374px;width:115px;height:20px;background:#f0f0f0"></div>
<div class="t" style="left:135px;top:379px;font-size:11px;color:#333">Sketches</div>
<svg class="a" style="left:0;top:180px" width="310" height="220" viewBox="0 180 310 220">
<defs>
<g id="eye"><path d="M0 4.8Q8 -5 16 4.8Q8 14.6 0 4.8Z" fill="#a3a3a3"/><circle cx="8" cy="4.8" r="3" fill="none" stroke="#f0f0f0" stroke-width="1.1"/></g>
<g id="eyex"><path d="M0.3 4.5Q7.8 -3.3 15.3 4.5Q7.8 12.3 0.3 4.5Z" fill="none" stroke="#b0b0b0" stroke-width="1"/><circle cx="7.8" cy="4.5" r="2.8" fill="none" stroke="#b0b0b0" stroke-width="1"/><path d="M3 -1L12.5 10" stroke="#b0b0b0" stroke-width="1"/></g>
<g id="fold"><path d="M0 0H6L7.5 1.5H16V3H0Z" fill="#a0a0a0"/><rect x="0" y="3.6" width="16" height="9.2" fill="#a0a0a0"/></g>
<linearGradient id="trg" x1="0" y1="0" x2="1" y2="1"><stop offset="0" stop-color="#f4f4f4"/><stop offset="1" stop-color="#c4c4c4"/></linearGradient>
<linearGradient id="ltrg" x1="0" y1="1" x2="1" y2="0"><stop offset="0" stop-color="#333"/><stop offset="1" stop-color="#e0e0e0"/></linearGradient>
<path id="tri" d="M0.6 0.8Q0.6 0 1.4 0.5L8.8 6Q9.5 6.5 8.8 7L1.4 12.5Q0.6 13 0.6 12.2Z" fill="url(#trg)" stroke="#333" stroke-width="1.1"/>
<path id="ltri" d="M0.5 11.5L11.2 0.8V11.5Z" fill="url(#ltrg)" stroke="#333" stroke-width=".9" stroke-linejoin="round"/>
</defs>
<use href="#ltri" x="22" y="185.5"/>
<use href="#eye" x="49" y="188"/>
<path d="M75.5 186.5L77.5 184.5H82.5V190.5H80.5V199.5H75.5Z" fill="#e8ecf0" stroke="#444" stroke-width=".9"/><path d="M75.5 186.5H80.5V199.5M80.5 186.5L82.5 184.5" fill="none" stroke="#444" stroke-width=".8"/><path d="M80.5 192.5L82.5 190.5H89.5V197.5L87.5 199.5H80.5Z" fill="#e8ecf0" stroke="#444" stroke-width=".9"/><path d="M80.5 192.5H87.5V199.5M87.5 192.5L89.5 190.5" fill="none" stroke="#444" stroke-width=".8"/>
<circle cx="179" cy="192.3" r="5.8" fill="#fff" stroke="#333" stroke-width="1.1"/><circle cx="179" cy="192.3" r="2.3" fill="#222"/>
<use href="#tri" x="41.5" y="209.5"/>
<g transform="translate(70 216)" fill="#a0a0a0"><circle r="5.6"/><g id="teeth"><rect x="-1.6" y="-8" width="3.2" height="16"/><rect x="-1.6" y="-8" width="3.2" height="16" transform="rotate(45)"/><rect x="-1.6" y="-8" width="3.2" height="16" transform="rotate(90)"/><rect x="-1.6" y="-8" width="3.2" height="16" transform="rotate(135)"/></g><circle r="2.3" fill="#f0f0f0"/></g>
<use href="#tri" x="41.5" y="233.5"/>
<use href="#fold" x="62" y="233"/>
<use href="#tri" x="41.5" y="257.5"/>
<use href="#eyex" x="62" y="260"/>
<use href="#fold" x="87" y="257"/>
<use href="#tri" x="41.5" y="281.5"/>
<use href="#eyex" x="62" y="284"/>
<use href="#fold" x="87" y="281"/>
<use href="#ltri" x="39" y="305.5"/>
<use href="#eye" x="67" y="308"/>
<path d="M92.5 308.5L96.5 304.5H108V315.5L104 319.5H92.5Z" fill="#f6f7f9" stroke="#333" stroke-width="1.1"/><rect x="94" y="309" width="9.5" height="9.5" fill="#dfe2e7"/><path d="M104 309L107 306V315L104 318Z" fill="#d0d4dc"/>
<use href="#tri" x="59.5" y="329.5"/>
<use href="#eyex" x="80" y="332"/>
<use href="#fold" x="105" y="329"/>
<use href="#tri" x="59.5" y="353.5"/>
<use href="#eye" x="80" y="356"/>
<use href="#fold" x="105" y="353"/>
<use href="#tri" x="59.5" y="377.5"/>
<use href="#eye" x="80" y="380"/>
<use href="#fold" x="105" y="377"/>
</svg>
<!-- edit feature dialog -->
<div class="a" style="left:797px;top:272px;width:400px;height:313px;background:#f1f1f1;border:1px solid #cdcdcd"></div>
<div class="a" style="left:798px;top:296px;width:398px;height:1px;background:#d6d6d6"></div>
<svg class="a" style="left:798px;top:277px" width="22" height="14"><rect x="1" y="2" width="1" height="9" fill="#777"/><circle cx="16" cy="7" r="4.8" fill="#222"/><rect x="13.5" y="6.3" width="5" height="1.5" fill="#fff"/></svg>
<div class="t" style="left:822px;top:279px;font-size:11px;color:#555">EDIT FEATURE</div>
<svg class="a" style="left:1180px;top:279px" width="14" height="10"><path d="M1 1V9L6 5Z M6.5 1V9L11.5 5Z" fill="#222"/></svg>
<div class="a" style="left:807px;top:302px;width:358px;height:112px;background:#fff;border:1px solid #d4d4d4"></div>
<div class="a" style="left:808px;top:303px;width:355px;height:26px;background:#a9cffa"></div>
<div class="t" style="left:812px;top:311px;font-size:11px;color:#222">4 Edges</div>
<svg class="a" style="left:945px;top:306px" width="200" height="20">
<rect x="2" y="2" width="15" height="16" fill="#ececec"/><path d="M2 2.5H5M7 2.5L17 12M17 14V18" fill="none" stroke="#555" stroke-width="1"/><path d="M7 2.5L17 12" stroke="#1e88e5" stroke-width="1.2"/>
<rect x="112" y="2" width="15" height="16" fill="#cfe3fb"/><path d="M112 2.5H115M117 2.5L127 12M127 14V18" fill="none" stroke="#9ab" stroke-width="1"/><path d="M117 2.5L127 12" stroke="#62a8e8" stroke-width="1.2"/>
</svg>
<div class="a" style="left:963px;top:304px;width:62px;height:23px;background:#fff;border:1px solid #cfd7e0"></div>
<div class="t" style="left:966px;top:311px;font-size:11px;color:#222">.5</div>
<div class="a" style="left:1073px;top:304px;width:62px;height:23px;background:#fff;border:1px solid #cfd7e0"></div>
<div class="t" style="left:1076px;top:311px;font-size:11px;color:#9a9a9a">0.5 mm</div>
<svg class="a" style="left:814px;top:391px" width="42" height="15"><path d="M8 1.5V12.5M2.5 7H13.5" stroke="#555" stroke-width="2"/><path d="M30 3L38 11M38 3L30 11" stroke="#555" stroke-width="2"/></svg>
<div class="t" style="left:810px;top:427px;font-size:11px;color:#333">Type</div>
<div class="a" style="left:933px;top:419px;width:232px;height:27px;background:#fff;border:1px solid #d6d6d6;border-radius:2px"></div>
<svg class="a" style="left:935px;top:423px" width="20" height="20"><rect x="2" y="2" width="14" height="15" fill="#ececec"/><path d="M1.5 1.5H5M6.5 1.5L16 11M16 12.5V17" fill="none" stroke="#555" stroke-width="1"/><path d="M6.5 1.5L16 11" stroke="#1e88e5" stroke-width="1.2"/></svg>
<div class="t" style="left:957px;top:427px;font-size:11px;color:#222">Equal Distance</div>
<svg class="a" style="left:1152px;top:429px" width="8" height="6"><path d="M0.5 0.5H7.5L4 5Z" fill="#222"/></svg>
<div class="t" style="left:810px;top:457px;font-size:11px;color:#333">Edges/Faces/Features</div>
<div class="a" style="left:933px;top:448px;width:60px;height:28px;background:#0696d7;border-radius:1px"></div>
<svg class="a" style="left:938px;top:452px" width="14" height="20"><path d="M2.5 2V15.5L5.8 12.6L8.4 18L10.6 17L8 11.6H12.5Z" fill="#fff" stroke="#555" stroke-width=".9"/></svg>
<div class="t" style="left:955px;top:457px;font-size:11px;color:#fff">Select</div>
<div class="t" style="left:810px;top:487px;font-size:11px;color:#333">Tangent Chain</div>
<div class="a" style="left:938px;top:485px;width:14px;height:14px;background:#dcdcdc;border:1px solid #555;border-radius:2.5px"></div>
<svg class="a" style="left:938px;top:485px" width="14" height="14"><path d="M3.3 7.3L5.8 10.3L10.8 3.3" fill="none" stroke="#222" stroke-width="1.3"/></svg>
<div class="a" style="left:798px;top:512px;width:385px;height:1px;background:#b9b9b9"></div>
<div class="t" style="left:810px;top:527px;font-size:11px;color:#333">Corner Type</div>
<div class="a" style="left:933px;top:519px;width:232px;height:27px;background:#fff;border:1px solid #d6d6d6;border-radius:2px"></div>
<svg class="a" style="left:936px;top:524px" width="18" height="18"><path d="M1 3L8 6.5V16H3L1 15Z" fill="#c8c8c8"/><path d="M16 3L9 6.5V16H14L16 15Z" fill="#c8c8c8"/><path d="M1 3L5 1L8.5 3.5L12 1L16 3L9 6.5H8Z" fill="#8fc8f0"/><path d="M1 3L8 6.5V16H5.5V8Z" fill="#5aa8e0"/><path d="M16 3L9 6.5V16H11.5V8Z" fill="#5aa8e0"/></svg>
<div class="t" style="left:957px;top:527px;font-size:11px;color:#222">Chamfer</div>
<svg class="a" style="left:1152px;top:529px" width="8" height="6"><path d="M0.5 0.5H7.5L4 5Z" fill="#222"/></svg>
<div class="a" style="left:798px;top:548px;width:398px;height:1px;background:#c8c8c8"></div>
<svg class="a" style="left:805px;top:560px" width="14" height="14"><circle cx="7" cy="7" r="6" fill="#111"/><rect x="6" y="5.5" width="2.2" height="5" fill="#fff"/><rect x="5" y="5.5" width="2" height="1.2" fill="#fff"/><rect x="5" y="9.6" width="4.2" height="1.1" fill="#fff"/><circle cx="7.1" cy="3.7" r="1.1" fill="#fff"/></svg>
<div class="a" style="left:1055px;top:557px;width:60px;height:19px;background:#e6e6e6;border:1px solid #adadad"></div>
<div class="t" style="left:1077px;top:561px;font-size:12px;color:#444">OK</div>
<div class="a" style="left:1125px;top:557px;width:60px;height:19px;background:#e6e6e6;border:1px solid #adadad"></div>
<div class="t" style="left:1137px;top:561px;font-size:12px;color:#444">Cancel</div>
<!-- viewcube -->
<svg class="a" style="left:1090px;top:165px" width="100" height="110" viewBox="1090 165 100 110">
<defs>
<linearGradient id="vcf" x1="0" y1="0" x2="0" y2="1"><stop offset="0" stop-color="#f2f2f2"/><stop offset="1" stop-color="#e4e4e4"/></linearGradient>
<linearGradient id="vcr" x1="0" y1="0" x2="0" y2="1"><stop offset="0" stop-color="#ececec"/><stop offset="1" stop-color="#e0e0e0"/></linearGradient>
<filter id="vcb" x="-50%" y="-50%" width="200%" height="200%"><feGaussianBlur stdDeviation="4"/></filter>
</defs>
<path d="M1108 236L1143 254L1172 230L1150 222Z" fill="#000" fill-opacity=".28" filter="url(#vcb)"/>
<path d="M1103 192.3L1132.4 176.1L1171.3 188.2L1143.5 209.4Z" fill="#eeeeee"/>
<path d="M1103 192.3L1143.5 209.4L1142.5 250.9L1105.2 233.7Z" fill="url(#vcf)"/>
<path d="M1143.5 209.4L1171.3 188.2L1168.3 226.6L1142.5 250.9Z" fill="url(#vcr)"/>
<rect x="1138" y="204" width="9" height="10" fill="#dfe3e8" opacity=".7"/>
<g fill="none" stroke="#6a6a6a" stroke-width=".8" stroke-dasharray="3.2 2.4"><path d="M1103 192.3L1132.4 176.1L1171.3 188.2L1143.5 209.4Z"/><path d="M1143.5 209.4L1142.5 250.9L1168.3 226.6L1171.3 188.2"/></g>
<path d="M1100.3 187L1105.2 233.7" stroke="#3c3cf0" stroke-width="1.5"/>
<path d="M1105.2 233.7L1149.6 256.9" stroke="#f29a9a" stroke-width="2"/>
<text x="1099.6" y="184.5" font-size="13.5" fill="#7272ff" text-anchor="middle" font-family="Liberation Sans">Z</text>
<text x="1155.6" y="265.5" font-size="13.5" fill="#ff8080" text-anchor="middle" font-family="Liberation Sans">X</text>
<g fill="#8d9198" font-family="Liberation Sans">
<text transform="matrix(0.938 0.347 -0.62 0.372 1135 191)" font-size="10.5" text-anchor="middle" font-weight="bold" opacity=".8">TOP</text>
<text transform="matrix(0.938 0.347 0 1 1123.5 227.5)" font-size="9.5" text-anchor="middle" font-weight="bold" opacity=".85">FRONT</text>
<text transform="matrix(0.81 -0.587 0 1 1157 224.5)" font-size="8" text-anchor="middle" font-weight="bold" opacity=".8">RIGHT</text>
</g>
</svg>
<!-- comments panel -->
<div class="a" style="left:5px;top:960px;width:300px;height:25px;background:#f1f1f1;border:1px solid #cfcfcf"></div>
<div class="t" style="left:30px;top:967px;font-size:11px;color:#555">COMMENTS</div>
<svg class="a" style="left:283px;top:967px" width="22" height="11"><circle cx="5.5" cy="5.5" r="4.8" fill="#222"/><path d="M3 5.5H8M5.5 3V8" stroke="#fff" stroke-width="1.4"/><rect x="17" y="1" width="1" height="9" fill="#666"/><rect x="19" y="2" width="1" height="7" fill="#999"/></svg>
<div class="t" style="left:1143px;top:968px;font-size:11px;font-weight:bold;color:#222">4 Edges</div>
<!-- nav bar -->
<div class="a" style="left:482px;top:961px;width:237px;height:24px;background:#f1f1f1"></div>
<svg class="a" style="left:480px;top:960px" width="245" height="26" viewBox="480 960 245 26">
<g fill="none" stroke="#333" stroke-width="1"><ellipse cx="493" cy="974" rx="7.5" ry="3"/><path d="M493 965V981"/></g><path d="M490.5 967L493 963.5L495.5 967Z" fill="#333"/><path d="M485 976.5L488 978L486 979.5Z" fill="#333"/><path d="M507 971.5H512.5L509.75 975Z" fill="#333"/>
<g fill="none" stroke="#444" stroke-width="1"><rect x="518.5" y="970.5" width="14" height="10" rx="1"/><rect x="521" y="973" width="9" height="4" fill="#aaa"/><path d="M520 970L523 966.5L525 968.5L528 966L531 970"/></g>
<path d="M547 980Q544 976 544.5 972.5L546 971.5L548 974V966.5Q548 965 549.3 965.3L550 971V964Q551.5 963 552.5 964.3V971V965Q554 964.3 555 965.5V971.5V967Q556.5 966 557.5 967.3V975Q557 980 555 982H549Z" fill="#fff" stroke="#333" stroke-width=".9"/>
<g fill="none" stroke="#333" stroke-width="1.2"><circle cx="575.5" cy="972.5" r="4.5"/></g><path d="M578.5 976L583 980.5" stroke="#333" stroke-width="2.2"/><path d="M581 966.5H587M584 963.5V969.5" stroke="#333" stroke-width=".9"/>
<g fill="none" stroke="#333" stroke-width="1.2"><circle cx="602.5" cy="972.5" r="5.5"/><rect x="600" y="970" width="5" height="5"/></g><path d="M606.5 976.5L611 981" stroke="#333" stroke-width="2.2"/><path d="M617 971.5H622.5L619.75 975Z" fill="#333"/>
<rect x="629.5" y="965.5" width="15" height="11" rx="1" fill="#8fb6e4" stroke="#333" stroke-width="1"/><path d="M634 979.5H640M637 976.5V979.5" stroke="#333" stroke-width="1.2"/><path d="M648 971.5H653.5L650.75 975Z" fill="#333"/>
<rect x="660.5" y="965.5" width="15" height="15" fill="#c8c8d0" stroke="#555" stroke-width="1"/><path d="M663.5 966V980M666.5 966V980M669.5 966V980M672.5 966V980M661 968.5H675M661 971.5H675M661 974.5H675M661 977.5H675" stroke="#555" stroke-width=".8"/><path d="M679 971.5H684.5L681.75 975Z" fill="#333"/>
<rect x="691.5" y="965.5" width="15" height="15" rx="1" fill="#3d5ea0"/><rect x="693" y="967" width="5.5" height="5" fill="#a9c8ee"/><rect x="699.5" y="967" width="5.5" height="5" fill="#a9c8ee"/><rect x="693" y="974" width="5.5" height="5" fill="#a9c8ee"/><rect x="699.5" y="974" width="5.5" height="5" fill="#a9c8ee"/><path d="M710.5 971.5H716L713.25 975Z" fill="#333"/>
</svg>
<!-- dimension input -->
<div class="a" style="left:906px;top:698px;width:108px;height:22px;background:#f1f1f1"></div>
<div class="a" style="left:909px;top:700px;width:1px;height:18px;border-left:1px dotted #bbb"></div>
<div class="a" style="left:914px;top:700px;width:1px;height:18px;background:#c9c9c9"></div>
<div class="a" style="left:920px;top:699px;width:70px;height:20px;background:#fff;border:1px solid #b0b0b0"></div>
<div class="t" style="left:937px;top:703px;font-size:11.5px;color:#222">0.5 mm</div>
<svg class="a" style="left:998px;top:700px" width="8" height="18"><circle cx="4" cy="3" r="1.5" fill="#777"/><circle cx="4" cy="8.5" r="1.5" fill="#777"/><circle cx="4" cy="14" r="1.5" fill="#777"/></svg>
<!-- bottom timeline bar -->
<div class="a" style="left:1px;top:989px;width:1199px;height:50px;background:#f1f1f1;border-top:1px solid #d5d5d5"></div>
<svg class="a" style="left:0;top:990px" width="1202" height="50" viewBox="0 990 1202 50">
<g fill="#444"><rect x="12" y="1007" width="2" height="14"/><path d="M24 1007.5V1020.5L15 1014Z"/><path d="M36 1014L45 1007.5V1020.5Z"/><rect x="47" y="1011" width="2" height="6"/><path d="M62 1007V1021L73 1014Z"/><rect x="86" y="1011" width="2" height="6"/><path d="M90 1007.5V1020.5L99 1014Z"/><path d="M111 1007.5V1020.5L120 1014Z"/><rect x="122" y="1007" width="2" height="14"/></g>
<rect x="145" y="997" width="20" height="6" fill="#5ed5dc"/>
<rect x="169" y="997" width="116" height="6" fill="#bfee6b"/>
<path d="M196 1002.5L199 998.5M200.5 1002.5L203.5 998.5M205 1002.5L208 998.5" stroke="#333" stroke-width="1.4"/>
<path d="M155.5 1024V1029.5H347.5V1024M179.5 1024V1029M203.5 1024V1029M227.5 1024V1029M251.5 1024V1029M275.5 1024V1029M299.5 1024V1029M323.5 1024V1029" fill="none" stroke="#c8c8c8" stroke-width="1.2"/>
<!-- icons -->
<path d="M147.5 1010L151.5 1006H156V1008.5L158 1010H161.5V1018L158.5 1021H147.5Z" fill="#dcdcdc" stroke="#555" stroke-width="1"/><path d="M159.5 1001.5L160.3 1004L162.8 1003.2L161.3 1005.3L163.5 1006.7L160.9 1007L160.8 1009.6L159.4 1007.4L157.5 1009L158 1006.5L155.5 1005.8L157.9 1004.8L157 1002.4L159 1003.9Z" fill="#f5a000"/>
<g fill="none" stroke="#555" stroke-width="1"><rect x="172" y="1006" width="12" height="12"/></g><g fill="#1e88e5"><rect x="171" y="1005" width="2" height="2"/><rect x="183" y="1005" width="2" height="2"/><rect x="171" y="1017" width="2" height="2"/></g><path d="M180 1020.5L185.5 1014.5L187.5 1016.5L182 1022Z" fill="#f0b040"/><circle cx="186.5" cy="1015" r="1.5" fill="#e33"/>
<path d="M196.5 1013Q203 1008 210 1013V1019Q203 1015 196.5 1019Z" fill="#62ade6"/><path d="M196.5 1013Q203 1008 210 1013" fill="none" stroke="#8ecbf5" stroke-width="2"/><path d="M197 1009Q203 1004 210 1008" fill="none" stroke="#444" stroke-width="1"/><path d="M209.5 1015V1021" stroke="#444" stroke-width="1"/>
<g fill="none" stroke="#555" stroke-width="1"><rect x="220" y="1006" width="12" height="12"/></g><g fill="#1e88e5"><rect x="219" y="1005" width="2" height="2"/><rect x="231" y="1005" width="2" height="2"/><rect x="219" y="1017" width="2" height="2"/></g><path d="M228 1020.5L233.5 1014.5L235.5 1016.5L230 1022Z" fill="#f0b040"/><circle cx="234.5" cy="1015" r="1.5" fill="#e33"/>
<path d="M243.5 1008L246.5 1005H254V1017L251 1020H243.5Z" fill="#62ade6"/><path d="M243.5 1008H251V1020" fill="none" stroke="#4692cf" stroke-width="1"/><path d="M243.5 1021H252" stroke="#888" stroke-width="1"/><path d="M257.5 1007V1019" stroke="#222" stroke-width="1.1"/><path d="M255.5 1009L257.5 1005.5L259.5 1009Z" fill="#222"/>
<path d="M267.5 1012L273 1006H279L283 1010V1021H270.5L267.5 1018Z" fill="#dcdcdc" stroke="#555" stroke-width="1"/><path d="M269 1012L275.5 1006L279 1009.5L272.5 1015.5Z" fill="#62ade6"/>
<path d="M281 1000H293L291 1007.5H283Z" fill="#555"/><rect x="286.3" y="1007" width="2.4" height="24" fill="#555"/>
<circle cx="299" cy="1013" r="8" fill="#d6e6f4"/>
<g fill="#c8c8cc"><path d="M323 1004.5L326 1008H320Z"/><path d="M323 1021.5L326 1018H320Z"/><path d="M314.5 1013L318 1010V1016Z"/><path d="M331.5 1013L328 1010V1016Z"/><rect x="322.3" y="1007" width="1.4" height="12"/><rect x="317" y="1012.3" width="12" height="1.4"/></g>
<g fill="#d6e6f4"><circle cx="347" cy="1006" r="2"/><circle cx="352.5" cy="1010" r="2"/><circle cx="352.5" cy="1016" r="2"/><circle cx="347" cy="1020" r="2"/><circle cx="341.5" cy="1016" r="2"/></g><circle cx="341.5" cy="1010" r="1.6" fill="none" stroke="#bbb" stroke-width=".8"/>
<g transform="translate(1179 1013)" fill="#8a8a8a"><circle r="5.2"/><rect x="-1.5" y="-7.5" width="3" height="15"/><rect x="-1.5" y="-7.5" width="3" height="15" transform="rotate(45)"/><rect x="-1.5" y="-7.5" width="3" height="15" transform="rotate(90)"/><rect x="-1.5" y="-7.5" width="3" height="15" transform="rotate(135)"/><circle r="2.2" fill="#f1f1f1"/></g>
</svg>
</body></html>
